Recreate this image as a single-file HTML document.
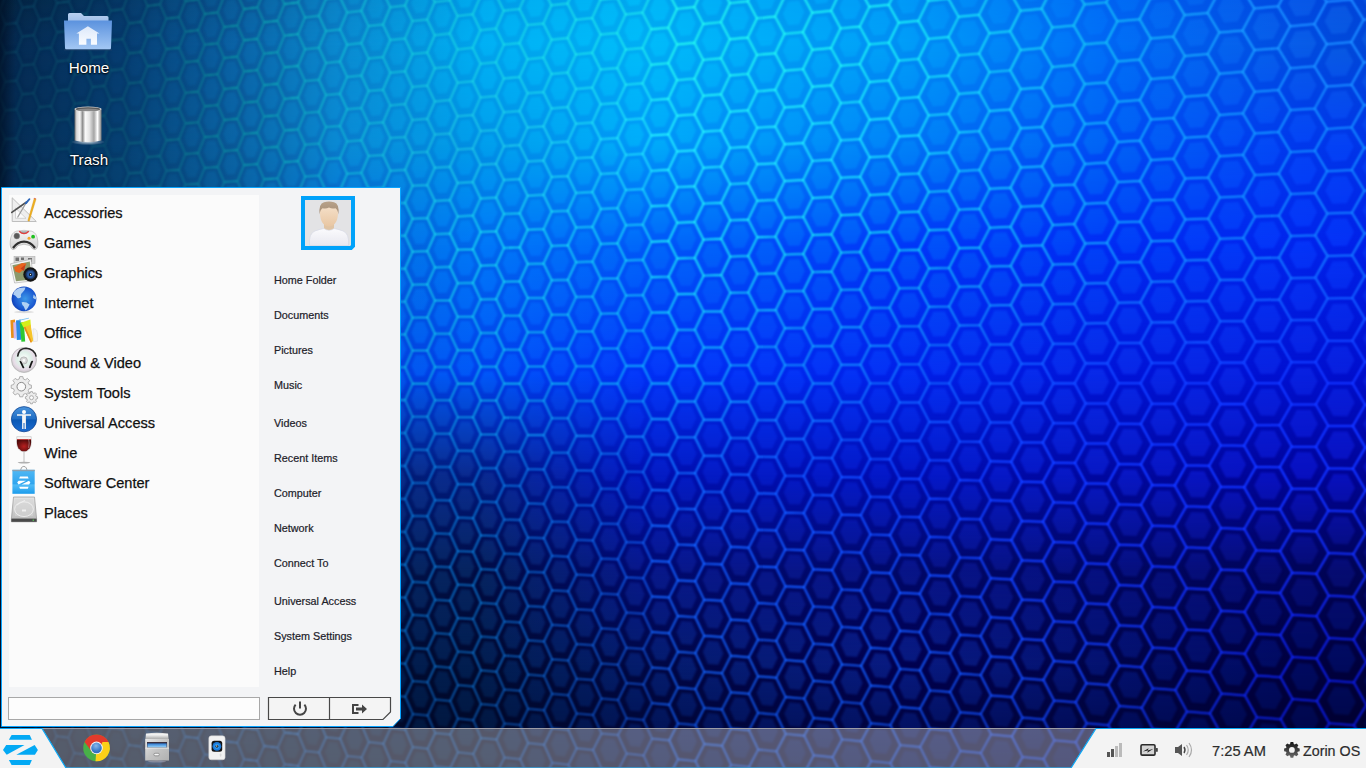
<!DOCTYPE html>
<html><head><meta charset="utf-8"><title>Zorin OS Desktop</title>
<style>
html,body{margin:0;padding:0;width:1366px;height:768px;overflow:hidden;background:#03183a;}
body{position:relative;font-family:"Liberation Sans",sans-serif;}
#bg{position:absolute;left:0;top:0;}
.abs{position:absolute;}
.dlabel{position:absolute;color:#fff;font-size:15.2px;text-shadow:0 1px 2px #000,0 0 2px #000;text-align:center;width:80px;}
#menu{position:absolute;left:1px;top:187px;width:400px;height:540px;}
#menu svg.frame{position:absolute;left:0;top:0;}
#cats{position:absolute;left:9px;top:195px;width:250px;height:492px;background:#fbfbfb;}
.cat{position:absolute;left:44px;font-size:14.6px;color:#101010;white-space:nowrap;-webkit-text-stroke:0.25px #101010;}
.cico{position:absolute;left:12px;width:24px;height:24px;}
.pl{position:absolute;left:274px;font-size:10.8px;color:#202028;-webkit-text-stroke:0.2px #202028;white-space:nowrap;}
#search{position:absolute;left:8px;top:697px;width:250px;height:21px;border:1px solid #a8a8a8;background:#fdfdfd;}
#taskbar{position:absolute;left:0;top:728px;width:1366px;height:40px;}
.tray{position:absolute;font-size:14.4px;color:#2c2c2c;white-space:nowrap;-webkit-text-stroke:0.2px #2c2c2c;}
</style></head>
<body>
<svg id="bg" width="1366" height="768" viewBox="0 0 1366 768"><defs><linearGradient id="r0" x1="0" y1="0" x2="1" y2="0"><stop offset="0.0000" stop-color="#04223f"/><stop offset="0.0878" stop-color="#053462"/><stop offset="0.1757" stop-color="#0a5290"/><stop offset="0.2489" stop-color="#0a78c0"/><stop offset="0.3514" stop-color="#009ce8"/><stop offset="0.4685" stop-color="#00a8f0"/><stop offset="0.6589" stop-color="#008cf0"/><stop offset="0.8053" stop-color="#0064f2"/><stop offset="0.9517" stop-color="#0048e0"/><stop offset="1.0000" stop-color="#0044d8"/></linearGradient><linearGradient id="r45" x1="0" y1="0" x2="1" y2="0"><stop offset="0.0000" stop-color="#04264c"/><stop offset="0.0878" stop-color="#05386a"/><stop offset="0.1757" stop-color="#0a5a9c"/><stop offset="0.2489" stop-color="#0a80c8"/><stop offset="0.3514" stop-color="#00a4ec"/><stop offset="0.4685" stop-color="#00aef4"/><stop offset="0.6589" stop-color="#0090f4"/><stop offset="0.8053" stop-color="#0068f4"/><stop offset="0.9517" stop-color="#004ce0"/><stop offset="1.0000" stop-color="#0048d8"/></linearGradient><linearGradient id="r145" x1="0" y1="0" x2="1" y2="0"><stop offset="0.0000" stop-color="#04284e"/><stop offset="0.0878" stop-color="#063c6c"/><stop offset="0.1757" stop-color="#0a5a9a"/><stop offset="0.2489" stop-color="#0a7ccc"/><stop offset="0.3514" stop-color="#0090e4"/><stop offset="0.4685" stop-color="#0098f8"/><stop offset="0.6589" stop-color="#0074f4"/><stop offset="0.8053" stop-color="#004cf4"/><stop offset="0.9517" stop-color="#0038ec"/><stop offset="1.0000" stop-color="#0034e8"/></linearGradient><linearGradient id="r245" x1="0" y1="0" x2="1" y2="0"><stop offset="0.0000" stop-color="#032446"/><stop offset="0.0878" stop-color="#053a68"/><stop offset="0.1757" stop-color="#085090"/><stop offset="0.2489" stop-color="#0460d0"/><stop offset="0.3514" stop-color="#0068ec"/><stop offset="0.4685" stop-color="#0058f8"/><stop offset="0.6589" stop-color="#0038f8"/><stop offset="0.8053" stop-color="#002cf4"/><stop offset="0.9517" stop-color="#0024ec"/><stop offset="1.0000" stop-color="#0020e8"/></linearGradient><linearGradient id="r375" x1="0" y1="0" x2="1" y2="0"><stop offset="0.0000" stop-color="#032040"/><stop offset="0.0878" stop-color="#042e5c"/><stop offset="0.1757" stop-color="#063c90"/><stop offset="0.2489" stop-color="#0440d8"/><stop offset="0.3514" stop-color="#0040ec"/><stop offset="0.4685" stop-color="#0030f4"/><stop offset="0.6589" stop-color="#0020e8"/><stop offset="0.8053" stop-color="#0014d8"/><stop offset="0.9517" stop-color="#0010d0"/><stop offset="1.0000" stop-color="#000ecc"/></linearGradient><linearGradient id="r475" x1="0" y1="0" x2="1" y2="0"><stop offset="0.0000" stop-color="#021838"/><stop offset="0.0878" stop-color="#03244c"/><stop offset="0.1757" stop-color="#042c60"/><stop offset="0.2489" stop-color="#041e70"/><stop offset="0.3514" stop-color="#001a80"/><stop offset="0.4685" stop-color="#0010b0"/><stop offset="0.6589" stop-color="#000cb0"/><stop offset="0.8053" stop-color="#0008a0"/><stop offset="0.9517" stop-color="#000498"/><stop offset="1.0000" stop-color="#000494"/></linearGradient><linearGradient id="r570" x1="0" y1="0" x2="1" y2="0"><stop offset="0.0000" stop-color="#011230"/><stop offset="0.0878" stop-color="#021c40"/><stop offset="0.1757" stop-color="#02204c"/><stop offset="0.2489" stop-color="#011448"/><stop offset="0.3514" stop-color="#000c44"/><stop offset="0.4685" stop-color="#000a70"/><stop offset="0.6589" stop-color="#000868"/><stop offset="0.8053" stop-color="#000660"/><stop offset="0.9517" stop-color="#000458"/><stop offset="1.0000" stop-color="#000454"/></linearGradient><linearGradient id="r665" x1="0" y1="0" x2="1" y2="0"><stop offset="0.0000" stop-color="#010c28"/><stop offset="0.0878" stop-color="#011430"/><stop offset="0.1757" stop-color="#011636"/><stop offset="0.2489" stop-color="#000c30"/><stop offset="0.3514" stop-color="#000a30"/><stop offset="0.4685" stop-color="#000844"/><stop offset="0.6589" stop-color="#000050"/><stop offset="0.8053" stop-color="#000448"/><stop offset="0.9517" stop-color="#000040"/><stop offset="1.0000" stop-color="#00003c"/></linearGradient><linearGradient id="r768" x1="0" y1="0" x2="1" y2="0"><stop offset="0.0000" stop-color="#000820"/><stop offset="0.0878" stop-color="#000a24"/><stop offset="0.1757" stop-color="#000a26"/><stop offset="0.2489" stop-color="#000826"/><stop offset="0.3514" stop-color="#000826"/><stop offset="0.4685" stop-color="#000630"/><stop offset="0.6589" stop-color="#000638"/><stop offset="0.8053" stop-color="#000434"/><stop offset="0.9517" stop-color="#00002c"/><stop offset="1.0000" stop-color="#000028"/></linearGradient><linearGradient id="i0" x1="0" y1="0" x2="1" y2="0"><stop offset="0.0000" stop-color="#042440"/><stop offset="0.0878" stop-color="#063866"/><stop offset="0.1757" stop-color="#0a5e9c"/><stop offset="0.2489" stop-color="#0a84c8"/><stop offset="0.3514" stop-color="#00acf0"/><stop offset="0.4685" stop-color="#00b8f8"/><stop offset="0.6589" stop-color="#009af8"/><stop offset="0.8053" stop-color="#006ef6"/><stop offset="0.9517" stop-color="#0858e8"/><stop offset="1.0000" stop-color="#0854e0"/></linearGradient><linearGradient id="i45" x1="0" y1="0" x2="1" y2="0"><stop offset="0.0000" stop-color="#05284e"/><stop offset="0.0878" stop-color="#063c70"/><stop offset="0.1757" stop-color="#0a64a8"/><stop offset="0.2489" stop-color="#0a8ad0"/><stop offset="0.3514" stop-color="#00b0f4"/><stop offset="0.4685" stop-color="#00bcfa"/><stop offset="0.6589" stop-color="#009ef8"/><stop offset="0.8053" stop-color="#0070f8"/><stop offset="0.9517" stop-color="#085ce8"/><stop offset="1.0000" stop-color="#0858e0"/></linearGradient><linearGradient id="i145" x1="0" y1="0" x2="1" y2="0"><stop offset="0.0000" stop-color="#052a50"/><stop offset="0.0878" stop-color="#064072"/><stop offset="0.1757" stop-color="#0a66a8"/><stop offset="0.2489" stop-color="#0a8ad4"/><stop offset="0.3514" stop-color="#009eec"/><stop offset="0.4685" stop-color="#00acfa"/><stop offset="0.6589" stop-color="#0082f8"/><stop offset="0.8053" stop-color="#0064f6"/><stop offset="0.9517" stop-color="#0444f6"/><stop offset="1.0000" stop-color="#0440f4"/></linearGradient><linearGradient id="i245" x1="0" y1="0" x2="1" y2="0"><stop offset="0.0000" stop-color="#052850"/><stop offset="0.0878" stop-color="#07426e"/><stop offset="0.1757" stop-color="#0a5c9c"/><stop offset="0.2489" stop-color="#0470dc"/><stop offset="0.3514" stop-color="#0078f8"/><stop offset="0.4685" stop-color="#0068fa"/><stop offset="0.6589" stop-color="#0054fa"/><stop offset="0.8053" stop-color="#0040f8"/><stop offset="0.9517" stop-color="#0434f8"/><stop offset="1.0000" stop-color="#0430f4"/></linearGradient><linearGradient id="i375" x1="0" y1="0" x2="1" y2="0"><stop offset="0.0000" stop-color="#04244a"/><stop offset="0.0878" stop-color="#063666"/><stop offset="0.1757" stop-color="#08469c"/><stop offset="0.2489" stop-color="#0454e8"/><stop offset="0.3514" stop-color="#0058f8"/><stop offset="0.4685" stop-color="#0438fa"/><stop offset="0.6589" stop-color="#0430f4"/><stop offset="0.8053" stop-color="#0828e8"/><stop offset="0.9517" stop-color="#0820e0"/><stop offset="1.0000" stop-color="#081edc"/></linearGradient><linearGradient id="i475" x1="0" y1="0" x2="1" y2="0"><stop offset="0.0000" stop-color="#031e42"/><stop offset="0.0878" stop-color="#052a58"/><stop offset="0.1757" stop-color="#073270"/><stop offset="0.2489" stop-color="#082e84"/><stop offset="0.3514" stop-color="#0a2a90"/><stop offset="0.4685" stop-color="#041cc4"/><stop offset="0.6589" stop-color="#0418c8"/><stop offset="0.8053" stop-color="#0818c4"/><stop offset="0.9517" stop-color="#0810c0"/><stop offset="1.0000" stop-color="#0810bc"/></linearGradient><linearGradient id="i570" x1="0" y1="0" x2="1" y2="0"><stop offset="0.0000" stop-color="#02183a"/><stop offset="0.0878" stop-color="#04224c"/><stop offset="0.1757" stop-color="#05285c"/><stop offset="0.2489" stop-color="#052460"/><stop offset="0.3514" stop-color="#062460"/><stop offset="0.4685" stop-color="#08188a"/><stop offset="0.6589" stop-color="#081488"/><stop offset="0.8053" stop-color="#061080"/><stop offset="0.9517" stop-color="#060c74"/><stop offset="1.0000" stop-color="#060c70"/></linearGradient><linearGradient id="i665" x1="0" y1="0" x2="1" y2="0"><stop offset="0.0000" stop-color="#021230"/><stop offset="0.0878" stop-color="#031a3c"/><stop offset="0.1757" stop-color="#041e48"/><stop offset="0.2489" stop-color="#021c4c"/><stop offset="0.3514" stop-color="#021e50"/><stop offset="0.4685" stop-color="#041c6c"/><stop offset="0.6589" stop-color="#081a80"/><stop offset="0.8053" stop-color="#041270"/><stop offset="0.9517" stop-color="#000a60"/><stop offset="1.0000" stop-color="#000a5c"/></linearGradient><linearGradient id="i768" x1="0" y1="0" x2="1" y2="0"><stop offset="0.0000" stop-color="#010c26"/><stop offset="0.0878" stop-color="#01102c"/><stop offset="0.1757" stop-color="#011230"/><stop offset="0.2489" stop-color="#011434"/><stop offset="0.3514" stop-color="#011438"/><stop offset="0.4685" stop-color="#01104a"/><stop offset="0.6589" stop-color="#000c50"/><stop offset="0.8053" stop-color="#000848"/><stop offset="0.9517" stop-color="#000640"/><stop offset="1.0000" stop-color="#00063c"/></linearGradient><linearGradient id="l0" x1="0" y1="0" x2="1" y2="0"><stop offset="0.0000" stop-color="#083858"/><stop offset="0.0878" stop-color="#0a5270"/><stop offset="0.1757" stop-color="#0a88a0"/><stop offset="0.2489" stop-color="#10b8d0"/><stop offset="0.3514" stop-color="#18d4e4"/><stop offset="0.4685" stop-color="#20ecf0"/><stop offset="0.6589" stop-color="#18e4f8"/><stop offset="0.8053" stop-color="#10acf8"/><stop offset="0.9517" stop-color="#1884ff"/><stop offset="1.0000" stop-color="#1880ff"/></linearGradient><linearGradient id="l45" x1="0" y1="0" x2="1" y2="0"><stop offset="0.0000" stop-color="#083c5c"/><stop offset="0.0878" stop-color="#0a5474"/><stop offset="0.1757" stop-color="#0a8ca4"/><stop offset="0.2489" stop-color="#10bcd4"/><stop offset="0.3514" stop-color="#18d8e8"/><stop offset="0.4685" stop-color="#20f0f0"/><stop offset="0.6589" stop-color="#18e8f8"/><stop offset="0.8053" stop-color="#10b0f8"/><stop offset="0.9517" stop-color="#1888ff"/><stop offset="1.0000" stop-color="#1884ff"/></linearGradient><linearGradient id="l145" x1="0" y1="0" x2="1" y2="0"><stop offset="0.0000" stop-color="#083c5c"/><stop offset="0.0878" stop-color="#0a5474"/><stop offset="0.1757" stop-color="#0a88a4"/><stop offset="0.2489" stop-color="#10b8d4"/><stop offset="0.3514" stop-color="#20c8e8"/><stop offset="0.4685" stop-color="#20e8ff"/><stop offset="0.6589" stop-color="#18d4ff"/><stop offset="0.8053" stop-color="#10a0ff"/><stop offset="0.9517" stop-color="#1080ff"/><stop offset="1.0000" stop-color="#107cff"/></linearGradient><linearGradient id="l245" x1="0" y1="0" x2="1" y2="0"><stop offset="0.0000" stop-color="#083e60"/><stop offset="0.0878" stop-color="#0a5680"/><stop offset="0.1757" stop-color="#0a78a8"/><stop offset="0.2489" stop-color="#10b8e4"/><stop offset="0.3514" stop-color="#18e0f4"/><stop offset="0.4685" stop-color="#18d8fa"/><stop offset="0.6589" stop-color="#10b8f8"/><stop offset="0.8053" stop-color="#1090ff"/><stop offset="0.9517" stop-color="#1070ff"/><stop offset="1.0000" stop-color="#106cff"/></linearGradient><linearGradient id="l375" x1="0" y1="0" x2="1" y2="0"><stop offset="0.0000" stop-color="#0a4070"/><stop offset="0.0878" stop-color="#0a5890"/><stop offset="0.1757" stop-color="#0a70b8"/><stop offset="0.2489" stop-color="#0a98e0"/><stop offset="0.3514" stop-color="#10bcf0"/><stop offset="0.4685" stop-color="#10aaff"/><stop offset="0.6589" stop-color="#1068ff"/><stop offset="0.8053" stop-color="#1040ff"/><stop offset="0.9517" stop-color="#1034ff"/><stop offset="1.0000" stop-color="#1030ff"/></linearGradient><linearGradient id="l475" x1="0" y1="0" x2="1" y2="0"><stop offset="0.0000" stop-color="#083868"/><stop offset="0.0878" stop-color="#0a4c88"/><stop offset="0.1757" stop-color="#0a60b0"/><stop offset="0.2489" stop-color="#0a70d0"/><stop offset="0.3514" stop-color="#0a80e8"/><stop offset="0.4685" stop-color="#1068f8"/><stop offset="0.6589" stop-color="#1040ff"/><stop offset="0.8053" stop-color="#1034ff"/><stop offset="0.9517" stop-color="#1030ff"/><stop offset="1.0000" stop-color="#1030ff"/></linearGradient><linearGradient id="l570" x1="0" y1="0" x2="1" y2="0"><stop offset="0.0000" stop-color="#083060"/><stop offset="0.0878" stop-color="#0a4480"/><stop offset="0.1757" stop-color="#0a60b0"/><stop offset="0.2489" stop-color="#0a70c8"/><stop offset="0.3514" stop-color="#0a78d4"/><stop offset="0.4685" stop-color="#1058f0"/><stop offset="0.6589" stop-color="#1048f4"/><stop offset="0.8053" stop-color="#1030f0"/><stop offset="0.9517" stop-color="#1028e8"/><stop offset="1.0000" stop-color="#1028e4"/></linearGradient><linearGradient id="l665" x1="0" y1="0" x2="1" y2="0"><stop offset="0.0000" stop-color="#062858"/><stop offset="0.0878" stop-color="#083c78"/><stop offset="0.1757" stop-color="#0a5098"/><stop offset="0.2489" stop-color="#0a60b4"/><stop offset="0.3514" stop-color="#0a68c0"/><stop offset="0.4685" stop-color="#1050d0"/><stop offset="0.6589" stop-color="#1050e8"/><stop offset="0.8053" stop-color="#1036e0"/><stop offset="0.9517" stop-color="#0a1ad0"/><stop offset="1.0000" stop-color="#0a18cc"/></linearGradient><linearGradient id="l768" x1="0" y1="0" x2="1" y2="0"><stop offset="0.0000" stop-color="#04204c"/><stop offset="0.0878" stop-color="#063068"/><stop offset="0.1757" stop-color="#083c88"/><stop offset="0.2489" stop-color="#0a4090"/><stop offset="0.3514" stop-color="#0a4498"/><stop offset="0.4685" stop-color="#0a40b8"/><stop offset="0.6589" stop-color="#0a38c0"/><stop offset="0.8053" stop-color="#0a28b8"/><stop offset="0.9517" stop-color="#0814b0"/><stop offset="1.0000" stop-color="#0812ac"/></linearGradient><linearGradient id="vg0" gradientUnits="userSpaceOnUse" x1="0" y1="0" x2="0" y2="45"><stop offset="0" stop-color="#000"/><stop offset="1" stop-color="#fff"/></linearGradient><mask id="mv0" maskUnits="userSpaceOnUse" x="0" y="0" width="1366" height="45"><rect x="0" y="0" width="1366" height="45" fill="url(#vg0)"/></mask><linearGradient id="vg45" gradientUnits="userSpaceOnUse" x1="0" y1="45" x2="0" y2="145"><stop offset="0" stop-color="#000"/><stop offset="1" stop-color="#fff"/></linearGradient><mask id="mv45" maskUnits="userSpaceOnUse" x="0" y="45" width="1366" height="100"><rect x="0" y="45" width="1366" height="100" fill="url(#vg45)"/></mask><linearGradient id="vg145" gradientUnits="userSpaceOnUse" x1="0" y1="145" x2="0" y2="245"><stop offset="0" stop-color="#000"/><stop offset="1" stop-color="#fff"/></linearGradient><mask id="mv145" maskUnits="userSpaceOnUse" x="0" y="145" width="1366" height="100"><rect x="0" y="145" width="1366" height="100" fill="url(#vg145)"/></mask><linearGradient id="vg245" gradientUnits="userSpaceOnUse" x1="0" y1="245" x2="0" y2="375"><stop offset="0" stop-color="#000"/><stop offset="1" stop-color="#fff"/></linearGradient><mask id="mv245" maskUnits="userSpaceOnUse" x="0" y="245" width="1366" height="130"><rect x="0" y="245" width="1366" height="130" fill="url(#vg245)"/></mask><linearGradient id="vg375" gradientUnits="userSpaceOnUse" x1="0" y1="375" x2="0" y2="475"><stop offset="0" stop-color="#000"/><stop offset="1" stop-color="#fff"/></linearGradient><mask id="mv375" maskUnits="userSpaceOnUse" x="0" y="375" width="1366" height="100"><rect x="0" y="375" width="1366" height="100" fill="url(#vg375)"/></mask><linearGradient id="vg475" gradientUnits="userSpaceOnUse" x1="0" y1="475" x2="0" y2="570"><stop offset="0" stop-color="#000"/><stop offset="1" stop-color="#fff"/></linearGradient><mask id="mv475" maskUnits="userSpaceOnUse" x="0" y="475" width="1366" height="95"><rect x="0" y="475" width="1366" height="95" fill="url(#vg475)"/></mask><linearGradient id="vg570" gradientUnits="userSpaceOnUse" x1="0" y1="570" x2="0" y2="665"><stop offset="0" stop-color="#000"/><stop offset="1" stop-color="#fff"/></linearGradient><mask id="mv570" maskUnits="userSpaceOnUse" x="0" y="570" width="1366" height="95"><rect x="0" y="570" width="1366" height="95" fill="url(#vg570)"/></mask><linearGradient id="vg665" gradientUnits="userSpaceOnUse" x1="0" y1="665" x2="0" y2="768"><stop offset="0" stop-color="#000"/><stop offset="1" stop-color="#fff"/></linearGradient><mask id="mv665" maskUnits="userSpaceOnUse" x="0" y="665" width="1366" height="103"><rect x="0" y="665" width="1366" height="103" fill="url(#vg665)"/></mask><path id="hp0" d="M-33.5 -41.4l5.5 13.3l11 -1.6l5.6 -15.1M-33.6 -13.1l5.6 -15l11 -1.6l5.6 13.4l11.1 -1.6l5.7 -15.2M16.7 -34.8l5.7 13.6l11.4 -1.7l5.8 -15.3M51.2 -40l5.8 13.8l11.8 -1.7l5.9 -15.6M-33.6 -13.1l5.5 13.4l11.1 -1.6l5.6 -15l11.1 -1.6l5.6 13.5l11.4 -1.6l5.7 -15.2l11.4 -1.7l5.8 13.7l11.6 -1.6l5.8 -15.4l11.8 -1.7l5.9 13.8l11.9 -1.6l6 -15.6M104.6 -33.1l6.1 14l12.2 -1.7l6.1 -15.8M141.3 -38.4l6.3 14.2l12.5 -1.8l6.3 -16M179 -43.8l6.4 14.3l12.8 -1.8M-33.6 15.2l5.5 -14.9l11.1 -1.6l5.5 13.5l11.2 -1.5l5.6 -15.1l11.4 -1.6l5.7 13.7l11.4 -1.5l5.8 -15.4l11.6 -1.6l5.8 13.8l11.8 -1.5l5.9 -15.6l11.9 -1.6l6 14l12 -1.7l6.1 -15.7l12.2 -1.7l6.1 14.2l12.3 -1.7l6.3 -15.9l12.5 -1.8l6.2 14.4l12.7 -1.7l6.4 -16.2l12.8 -1.8l6.5 14.5l13 -1.7l6.5 -16.4M237.4 -36.7l6.6 14.6l13.4 -1.8l6.7 -16.6M277.6 -42.3l6.8 14.8l13.7 -1.8M-33.6 15.2l5.5 13.5l11.1 -1.5l5.5 -15l11.2 -1.5l5.6 13.6l11.3 -1.4l5.8 -15.2l11.4 -1.5l5.8 13.7l11.6 -1.5l5.8 -15.4l11.8 -1.5l5.9 13.9l11.9 -1.6l6 -15.5l12 -1.7l6 14.1l12.2 -1.5l6.2 -15.8l12.3 -1.7l6.2 14.3l12.5 -1.6l6.3 -16l12.7 -1.7l6.4 14.4l12.8 -1.7l6.5 -16.2l13 -1.7l6.5 14.6l13.2 -1.7l6.6 -16.5l13.4 -1.8l6.7 14.8l13.5 -1.7l6.8 -16.7l13.7 -1.8M-33.6 43.5l5.5 -14.8l11.1 -1.5l5.5 13.6l11.2 -1.4l5.6 -15.1l11.3 -1.4l5.7 13.7l11.5 -1.4l5.8 -15.3l11.6 -1.5l5.8 13.9l11.7 -1.5l6 -15.4l11.9 -1.6l5.9 14.1l12.1 -1.5l6 -15.7l12.2 -1.5l6.2 14.2l12.3 -1.6l6.2 -15.8l12.5 -1.6l6.3 14.3l12.7 -1.5l6.4 -16.1l12.8 -1.7l6.5 14.6l13 -1.6l6.5 -16.3l13.2 -1.7l6.6 14.7l13.4 -1.7l6.7 -16.5l13.5 -1.7l6.8 14.9l13.7 -1.7M-33.6 43.5l5.5 13.5l11 -1.3l5.6 -14.9l11.2 -1.4l5.6 13.7l11.3 -1.4l5.7 -15.1l11.5 -1.4l5.7 13.8l11.7 -1.4l5.8 -15.3l11.7 -1.5l5.9 14l11.9 -1.4l6 -15.5l12.1 -1.5l6 14.1l12.2 -1.4l6.2 -15.7l12.3 -1.6l6.2 14.4l12.5 -1.5l6.3 -16l12.7 -1.5l6.4 14.5l12.8 -1.6l6.5 -16.1l13 -1.6l6.5 14.6l13.2 -1.5l6.6 -16.4l13.4 -1.7l6.7 14.9l13.5 -1.6l6.8 -16.6l13.7 -1.7M-33.6 71.9l5.5 -14.9l11 -1.3l5.6 13.6l11.2 -1.2l5.6 -15l11.3 -1.4l5.7 13.8l11.5 -1.3l5.7 -15.2l11.7 -1.4l5.8 13.9l11.7 -1.3l5.9 -15.4l11.9 -1.4l6 14.1l12.1 -1.4l6 -15.6l12.2 -1.4l6.2 14.3l12.3 -1.4l6.2 -15.8l12.5 -1.5l6.3 14.4l12.7 -1.4l6.4 -16l12.8 -1.6l6.5 14.6l13 -1.4l6.5 -16.3l13.2 -1.5l6.6 14.8l13.4 -1.5l6.7 -16.5l13.5 -1.6l6.8 15l13.7 -1.6M-33.6 71.9l5.4 13.5l11.1 -1.2l5.6 -14.9l11.2 -1.2l5.6 13.7l11.3 -1.2l5.7 -15.1l11.5 -1.3l5.7 13.9l11.6 -1.3l5.9 -15.3l11.7 -1.3l5.9 14.1l11.9 -1.3l6 -15.5l12.1 -1.4l6 14.3l12.2 -1.4l6.2 -15.6l12.3 -1.4l6.2 14.3l12.5 -1.3l6.3 -15.9l12.7 -1.4l6.4 14.5l12.8 -1.4l6.5 -16.1l13 -1.4l6.5 14.7l13.2 -1.4l6.6 -16.3l13.4 -1.5l6.7 14.9l13.5 -1.5l6.8 -16.5l13.7 -1.6M-33.7 100.2l5.5 -14.8l11.1 -1.2l5.5 13.7l11.2 -1.2l5.7 -14.9l11.3 -1.2l5.7 13.8l11.4 -1.2l5.8 -15.1l11.6 -1.3l5.9 14l11.7 -1.2l5.9 -15.3l11.9 -1.3l6 14.1l12 -1.2l6.1 -15.5l12.2 -1.4l6.1 14.4l12.4 -1.3l6.2 -15.8l12.5 -1.3l6.3 14.5l12.7 -1.3l6.4 -16l12.8 -1.4l6.5 14.7l13 -1.3l6.5 -16.2l13.2 -1.4l6.6 14.9l13.4 -1.4l6.7 -16.4l13.5 -1.5l6.8 15.1l13.7 -1.4M-33.7 100.2l5.5 13.6l11.1 -1.1l5.5 -14.8l11.2 -1.2l5.7 13.8l11.3 -1.1l5.7 -15l11.4 -1.2l5.8 14l11.6 -1.2l5.9 -15.2l11.7 -1.2l5.9 14.1l11.9 -1.2l6 -15.4l12 -1.2l6.1 14.3l12.2 -1.2l6.1 -15.6l12.4 -1.3l6.2 14.4l12.5 -1.2l6.3 -15.8l12.7 -1.3l6.4 14.6l12.8 -1.2l6.5 -16.1l13 -1.3l6.5 14.8l13.2 -1.3l6.6 -16.2l13.4 -1.4l6.7 15l13.5 -1.3l6.8 -16.5l13.7 -1.4M-33.7 128.5l5.5 -14.7l11.1 -1.1l5.5 13.8l11.2 -1.1l5.7 -14.9l11.3 -1.1l5.7 13.9l11.4 -1.1l5.8 -15l11.6 -1.2l5.8 14.1l11.8 -1.1l5.9 -15.3l11.9 -1.2l6 14.3l12 -1.2l6.1 -15.4l12.2 -1.2l6.1 14.4l12.4 -1.2l6.2 -15.7l12.5 -1.2l6.3 14.6l12.7 -1.2l6.4 -15.9l12.8 -1.2l6.5 14.7l13 -1.2l6.5 -16.1l13.2 -1.3l6.6 15l13.4 -1.3l6.7 -16.3l13.5 -1.3l6.8 15.1l13.7 -1.3M-33.7 128.5l5.5 13.7l11 -1l5.6 -14.7l11.2 -1.1l5.6 13.9l11.4 -1l5.7 -15l11.4 -1.1l5.8 14.1l11.6 -1.1l5.8 -15.1l11.8 -1.1l5.9 14.2l11.9 -1.1l6 -15.3l12 -1.2l6.1 14.4l12.2 -1.1l6.1 -15.5l12.4 -1.2l6.2 14.5l12.5 -1.1l6.3 -15.7l12.7 -1.2l6.4 14.7l12.8 -1.1l6.5 -16l13 -1.2l6.5 14.9l13.2 -1.2l6.6 -16.1l13.4 -1.3l6.7 15.1l13.5 -1.2l6.8 -16.4l13.7 -1.3M-33.7 156.9l5.5 -14.7l11 -1l5.6 13.8l11.2 -0.9l5.6 -14.8l11.4 -1l5.6 13.9l11.5 -0.9l5.8 -15l11.6 -1.1l5.8 14.2l11.8 -1l5.9 -15.2l11.9 -1.1l6 14.3l12 -1l6.1 -15.4l12.2 -1.1l6.1 14.5l12.4 -1l6.2 -15.7l12.5 -1.1l6.3 14.7l12.7 -1.1l6.4 -15.8l12.8 -1.1l6.5 14.8l13 -1.1l6.5 -16l13.2 -1.2l6.6 15.1l13.4 -1.2l6.7 -16.2l13.5 -1.2l6.8 15.2l13.7 -1.1M-33.7 156.9l5.5 13.7l11 -0.8l5.6 -14.8l11.2 -0.9l5.6 13.9l11.3 -0.9l5.7 -14.9l11.5 -0.9l5.8 14l11.6 -0.9l5.8 -15l11.8 -1l5.9 14.2l11.9 -0.9l6 -15.3l12 -1l6.1 14.4l12.2 -0.9l6.1 -15.5l12.4 -1l6.2 14.6l12.5 -1l6.3 -15.7l12.7 -1.1l6.4 14.8l12.8 -1l6.5 -15.9l13 -1.1l6.5 15l13.2 -1l6.6 -16.1l13.4 -1.2l6.7 15.2l13.5 -1.1l6.8 -16.3l13.7 -1.1M-33.7 185.2l5.5 -14.6l11 -0.8l5.6 13.8l11.2 -0.8l5.6 -14.8l11.3 -0.9l5.7 14.1l11.5 -0.9l5.8 -15l11.6 -0.9l5.8 14.2l11.8 -0.8l5.9 -15.2l11.9 -0.9l6 14.4l12 -0.9l6.1 -15.4l12.2 -0.9l6.1 14.5l12.4 -0.9l6.2 -15.5l12.5 -1l6.3 14.7l12.7 -0.9l6.4 -15.8l12.8 -1l6.5 14.9l13 -0.9l6.5 -16l13.2 -1l6.6 15.1l13.4 -1l6.7 -16.2l13.5 -1.1l6.8 15.3l13.8 -1M-33.7 185.2l5.4 13.8l11.1 -0.7l5.6 -14.7l11.2 -0.8l5.6 14l11.3 -0.8l5.7 -14.8l11.5 -0.9l5.7 14.2l11.7 -0.8l5.8 -15.1l11.8 -0.8l5.9 14.3l11.9 -0.8l6 -15.2l12 -0.9l6.1 14.5l12.2 -0.9l6.1 -15.4l12.4 -0.9l6.2 14.7l12.5 -0.9l6.3 -15.6l12.7 -0.9l6.3 14.8l12.9 -0.8l6.5 -15.9l13 -0.9l6.5 15l13.2 -0.9l6.6 -16l13.4 -1l6.7 15.2l13.5 -0.9l6.8 -16.3l13.8 -1M-33.8 213.6l5.5 -14.6l11.1 -0.7l5.5 13.9l11.2 -0.7l5.7 -14.7l11.3 -0.8l5.7 14.1l11.5 -0.7l5.7 -14.9l11.7 -0.8l5.8 14.2l11.7 -0.7l6 -15.1l11.9 -0.8l5.9 14.4l12.1 -0.7l6.1 -15.3l12.2 -0.9l6.1 14.6l12.4 -0.7l6.2 -15.5l12.5 -0.9l6.3 14.8l12.7 -0.8l6.3 -15.7l12.9 -0.8l6.4 14.9l13.1 -0.8l6.5 -15.9l13.2 -0.9l6.6 15.2l13.4 -0.9l6.7 -16.1l13.5 -0.9l6.8 15.4l13.8 -0.9M-33.8 213.6l5.5 13.8l11.1 -0.6l5.5 -14.6l11.2 -0.7l5.7 14l11.3 -0.6l5.7 -14.8l11.5 -0.7l5.7 14.2l11.6 -0.7l5.9 -15l11.7 -0.7l5.9 14.4l11.9 -0.7l6 -15.2l12.1 -0.7l6 14.5l12.2 -0.7l6.2 -15.4l12.4 -0.7l6.2 14.7l12.5 -0.7l6.3 -15.6l12.7 -0.8l6.3 14.9l12.9 -0.7l6.4 -15.8l13.1 -0.8l6.5 15.1l13.2 -0.7l6.6 -16l13.4 -0.9l6.7 15.3l13.5 -0.7l6.8 -16.2l13.8 -0.9M-33.8 241.9l5.5 -14.5l11.1 -0.6l5.5 14l11.2 -0.6l5.7 -14.7l11.3 -0.6l5.7 14.1l11.4 -0.6l5.8 -14.8l11.6 -0.7l5.9 14.3l11.7 -0.6l5.9 -15l11.9 -0.7l6 14.5l12.1 -0.7l6 -15.2l12.2 -0.7l6.2 14.7l12.3 -0.7l6.3 -15.4l12.5 -0.7l6.3 14.8l12.7 -0.6l6.3 -15.7l12.9 -0.7l6.4 15l13.1 -0.6l6.5 -15.9l13.2 -0.7l6.6 15.2l13.4 -0.7l6.7 -16.1l13.5 -0.7l6.8 15.4l13.8 -0.7M-33.8 241.9l5.5 14l11 -0.6l5.6 -14.5l11.2 -0.6l5.6 14.1l11.4 -0.5l5.7 -14.8l11.4 -0.6l5.8 14.3l11.6 -0.6l5.9 -14.9l11.7 -0.6l5.9 14.4l11.9 -0.5l6 -15.1l12.1 -0.7l6 14.7l12.2 -0.6l6.2 -15.3l12.3 -0.7l6.3 14.8l12.5 -0.6l6.3 -15.5l12.7 -0.6l6.3 15l12.9 -0.6l6.4 -15.8l13.1 -0.6l6.5 15.1l13.2 -0.6l6.6 -15.9l13.4 -0.7l6.7 15.4l13.5 -0.7l6.8 -16.1l13.8 -0.7M-33.8 270.3l5.5 -14.4l11 -0.6l5.6 14.1l11.2 -0.5l5.6 -14.6l11.4 -0.5l5.6 14.2l11.5 -0.5l5.8 -14.8l11.6 -0.6l5.8 14.4l11.8 -0.5l5.9 -15l11.9 -0.5l6 14.5l12.1 -0.5l6 -15.1l12.2 -0.6l6.2 14.7l12.3 -0.5l6.3 -15.4l12.5 -0.6l6.3 15l12.6 -0.6l6.4 -15.5l12.9 -0.6l6.4 15.1l13 -0.6l6.6 -15.8l13.2 -0.6l6.6 15.3l13.4 -0.5l6.7 -16l13.5 -0.7l6.9 15.5l13.7 -0.5M-33.8 270.3l5.5 14l11 -0.4l5.6 -14.5l11.2 -0.5l5.6 14.2l11.3 -0.5l5.7 -14.6l11.5 -0.5l5.8 14.3l11.6 -0.4l5.8 -14.9l11.8 -0.5l5.9 14.5l11.9 -0.4l6 -15.1l12.1 -0.5l6 14.7l12.2 -0.4l6.2 -15.3l12.3 -0.5l6.2 14.9l12.6 -0.5l6.3 -15.4l12.6 -0.6l6.4 15.1l12.9 -0.5l6.4 -15.6l13 -0.6l6.6 15.3l13.2 -0.5l6.6 -15.9l13.4 -0.5l6.7 15.4l13.5 -0.5l6.9 -16.1l13.7 -0.5M-33.9 298.7l5.6 -14.4l11 -0.4l5.6 14.1l11.2 -0.4l5.6 -14.5l11.3 -0.5l5.7 14.3l11.5 -0.4l5.8 -14.7l11.6 -0.4l5.8 14.4l11.8 -0.3l5.9 -15l11.9 -0.4l6 14.6l12 -0.4l6.1 -15.1l12.2 -0.4l6.2 14.8l12.3 -0.4l6.2 -15.3l12.6 -0.5l6.3 15l12.6 -0.4l6.4 -15.5l12.9 -0.5l6.4 15.2l13 -0.4l6.6 -15.7l13.2 -0.5l6.6 15.4l13.4 -0.5l6.7 -15.9l13.5 -0.5l6.9 15.6l13.7 -0.4M-33.9 298.7l5.5 14l11.1 -0.3l5.6 -14.4l11.2 -0.4l5.6 14.2l11.3 -0.3l5.7 -14.6l11.5 -0.4l5.8 14.4l11.6 -0.3l5.8 -14.8l11.8 -0.3l5.9 14.5l11.9 -0.3l6 -15l12 -0.4l6.1 14.8l12.2 -0.3l6.2 -15.2l12.3 -0.4l6.2 14.9l12.6 -0.3l6.3 -15.4l12.6 -0.4l6.4 15.1l12.9 -0.3l6.4 -15.6l13 -0.4l6.6 15.3l13.2 -0.4l6.6 -15.7l13.4 -0.5l6.7 15.5l13.5 -0.3l6.9 -16l13.7 -0.4M-33.9 327l5.5 -14.3l11.1 -0.3l5.5 14.2l11.2 -0.3l5.7 -14.5l11.3 -0.3l5.7 14.4l11.5 -0.3l5.8 -14.7l11.6 -0.3l5.8 14.5l11.8 -0.2l5.9 -14.9l11.9 -0.3l6 14.7l12 -0.3l6.1 -15l12.2 -0.3l6.1 14.8l12.4 -0.2l6.2 -15.3l12.6 -0.3l6.2 15l12.7 -0.2l6.4 -15.5l12.9 -0.3l6.4 15.2l13 -0.2l6.6 -15.7l13.2 -0.4l6.6 15.5l13.4 -0.3l6.7 -15.9l13.5 -0.3l6.9 15.6l13.7 -0.2M-33.9 327l5.5 14.1l11.1 -0.1l5.5 -14.4l11.2 -0.3l5.7 14.3l11.3 -0.2l5.7 -14.5l11.5 -0.3l5.7 14.5l11.6 -0.2l5.9 -14.8l11.8 -0.2l5.9 14.6l11.9 -0.2l6 -14.9l12 -0.3l6.1 14.8l12.2 -0.2l6.1 -15.1l12.4 -0.2l6.2 15l12.5 -0.2l6.3 -15.4l12.7 -0.2l6.4 15.2l12.9 -0.3l6.4 -15.5l13 -0.2l6.6 15.3l13.2 -0.2l6.6 -15.7l13.4 -0.3l6.7 15.6l13.5 -0.2l6.9 -16l13.7 -0.2M-33.9 355.4l5.5 -14.3l11.1 -0.1l5.5 14.2l11.2 -0.1l5.7 -14.5l11.3 -0.2l5.7 14.4l11.5 -0.1l5.7 -14.6l11.6 -0.2l5.9 14.6l11.7 -0.2l6 -14.8l11.9 -0.2l6 14.8l12 -0.2l6.1 -15l12.2 -0.2l6.1 15l12.4 -0.2l6.2 -15.1l12.5 -0.2l6.3 15.1l12.7 -0.2l6.4 -15.3l12.9 -0.3l6.4 15.4l13 -0.2l6.6 -15.6l13.2 -0.2l6.6 15.5l13.4 -0.1l6.7 -15.8l13.5 -0.2l6.9 15.7l13.7 -0.1M-33.9 355.4l5.5 14.2l11 -0.1l5.6 -14.3l11.2 -0.1l5.6 14.3l11.4 -0.1l5.7 -14.5l11.5 -0.1l5.7 14.5l11.6 -0.1l5.9 -14.6l11.7 -0.2l5.9 14.7l12 -0.1l6 -14.8l12 -0.2l6.1 14.9l12.2 -0.1l6.1 -15l12.4 -0.2l6.2 15.1l12.5 -0.1l6.3 -15.2l12.7 -0.2l6.4 15.3l12.9 -0.1l6.4 -15.4l13 -0.2l6.6 15.5l13.2 -0.1l6.6 -15.7l13.4 -0.1l6.7 15.7l13.5 -0.1l6.9 -15.9l13.7 -0.1M-33.9 383.8l5.5 -14.2l11 -0.1l5.6 14.3l11.2 0l5.6 -14.4l11.4 -0.1l5.7 14.5l11.4 0l5.8 -14.6l11.6 -0.1l5.9 14.7l11.7 0l5.9 -14.8l12 -0.1l5.9 14.9l12.1 0l6.1 -15l12.2 -0.1l6.1 15l12.4 0l6.2 -15.1l12.5 -0.1l6.3 15.2l12.7 0l6.4 -15.3l12.9 -0.1l6.4 15.4l13 0l6.6 -15.5l13.2 -0.1l6.6 15.6l13.4 0l6.7 -15.7l13.5 -0.1l6.9 15.8l13.7 0M-33.9 383.8l5.4 14.2l11.1 0.1l5.6 -14.3l11.2 0l5.6 14.4l11.3 0l5.8 -14.4l11.4 0l5.8 14.6l11.6 0l5.9 -14.6l11.7 0l5.9 14.7l11.9 0.1l6 -14.8l12.1 0l6.1 14.9l12.2 0.1l6.1 -15.1l12.4 0l6.2 15.2l12.5 0l6.3 -15.2l12.7 0l6.4 15.4l12.8 0l6.5 -15.4l13 0l6.6 15.5l13.2 0.1l6.6 -15.6l13.4 0l6.7 15.7l13.6 0.1l6.8 -15.8l13.7 0M-34 412.2l5.5 -14.2l11.1 0.1l5.6 14.3l11.2 0.1l5.6 -14.3l11.3 0l5.7 14.6l11.5 0.1l5.8 -14.5l11.6 0l5.8 14.7l11.8 0.1l5.9 -14.7l11.9 0.1l6 14.9l12.1 0.1l6.1 -14.9l12.2 0.1l6.1 15l12.4 0.1l6.2 -15l12.5 0l6.3 15.3l12.7 0.1l6.4 -15.2l12.8 0l6.5 15.5l13 0.1l6.6 -15.5l13.2 0.1l6.6 15.7l13.4 0.1l6.7 -15.7l13.6 0.1l6.8 15.9l13.7 0.1M-34 412.2l5.5 14.3l11.1 0.2l5.6 -14.3l11.2 0.1l5.6 14.5l11.3 0.2l5.7 -14.4l11.5 0.1l5.8 14.6l11.6 0.2l5.8 -14.6l11.8 0.1l5.9 14.8l11.9 0.2l6 -14.7l12.1 0.1l6 15l12.3 0.2l6.1 -15l12.4 0.1l6.2 15.2l12.5 0.2l6.3 -15.1l12.7 0.1l6.4 15.4l12.8 0.2l6.5 -15.3l13 0.1l6.6 15.6l13.2 0.2l6.6 -15.5l13.4 0.1l6.7 15.8l13.6 0.2l6.8 -15.7l13.7 0.1M-34 440.6l5.5 -14.1l11.1 0.2l5.5 14.4l11.2 0.2l5.7 -14.3l11.3 0.2l5.7 14.5l11.5 0.3l5.8 -14.5l11.6 0.2l5.8 14.7l11.8 0.3l5.9 -14.7l11.9 0.2l6 15l12.1 0.2l6 -14.8l12.3 0.2l6.1 15.1l12.4 0.2l6.2 -15l12.5 0.2l6.3 15.4l12.7 0.2l6.4 -15.2l12.8 0.2l6.5 15.5l13 0.3l6.6 -15.4l13.2 0.2l6.6 15.7l13.4 0.3l6.7 -15.6l13.6 0.2l6.8 15.9l13.7 0.3M-34 440.6l5.5 14.3l11.1 0.3l5.5 -14.1l11.2 0.2l5.7 14.5l11.3 0.3l5.7 -14.4l11.5 0.3l5.7 14.7l11.7 0.3l5.8 -14.6l11.8 0.3l5.9 14.9l11.9 0.3l6 -14.7l12.1 0.2l6 15.1l12.2 0.3l6.2 -14.9l12.4 0.2l6.2 15.3l12.5 0.3l6.3 -15l12.7 0.2l6.4 15.5l12.8 0.3l6.5 -15.3l13 0.3l6.6 15.7l13.2 0.3l6.6 -15.5l13.4 0.3l6.7 15.9l13.6 0.3l6.8 -15.7l13.7 0.3M-34 469l5.5 -14.1l11.1 0.3l5.5 14.5l11.2 0.3l5.7 -14.2l11.3 0.3l5.7 14.6l11.5 0.4l5.7 -14.4l11.7 0.3l5.8 14.8l11.8 0.3l5.9 -14.5l11.9 0.3l6 15l12.1 0.3l6 -14.7l12.2 0.3l6.2 15.2l12.3 0.4l6.3 -15l12.5 0.3l6.3 15.4l12.7 0.4l6.4 -15.1l12.8 0.3l6.5 15.6l13 0.4l6.6 -15.3l13.2 0.3l6.6 15.8l13.4 0.4l6.7 -15.5l13.6 0.3l6.8 16l13.7 0.5M-34 469l5.5 14.4l11 0.4l5.6 -14.1l11.2 0.3l5.6 14.6l11.4 0.4l5.7 -14.3l11.5 0.4l5.7 14.7l11.6 0.4l5.9 -14.4l11.8 0.3l5.9 15l11.9 0.4l6 -14.6l12.1 0.3l6 15.2l12.2 0.4l6.2 -14.8l12.3 0.4l6.3 15.3l12.5 0.4l6.3 -15l12.7 0.4l6.4 15.5l12.8 0.5l6.5 -15.2l13 0.4l6.6 15.7l13.2 0.5l6.6 -15.4l13.4 0.4l6.7 16l13.6 0.4l6.8 -15.6l13.7 0.5M-34.1 497.4l5.6 -14l11 0.4l5.6 14.5l11.2 0.5l5.6 -14.2l11.4 0.4l5.7 14.7l11.4 0.5l5.8 -14.4l11.6 0.4l5.9 14.9l11.7 0.5l6 -14.5l11.9 0.4l6 15.1l12 0.5l6.1 -14.7l12.2 0.4l6.2 15.3l12.3 0.5l6.3 -14.9l12.5 0.4l6.3 15.5l12.7 0.5l6.4 -15.1l12.8 0.5l6.5 15.7l13 0.5l6.6 -15.3l13.2 0.5l6.6 15.9l13.4 0.5l6.7 -15.4l13.6 0.4l6.8 16.1l13.7 0.6M-34.1 497.4l5.5 14.5l11.1 0.5l5.6 -14.1l11.2 0.5l5.6 14.6l11.3 0.5l5.8 -14.2l11.4 0.5l5.8 14.8l11.6 0.5l5.9 -14.4l11.7 0.5l6 15l11.9 0.6l6 -14.6l12 0.5l6.1 15.2l12.2 0.5l6.2 -14.7l12.3 0.5l6.3 15.4l12.5 0.6l6.3 -15l12.7 0.5l6.4 15.6l12.8 0.6l6.5 -15.1l13 0.5l6.6 15.8l13.2 0.6l6.6 -15.3l13.4 0.5l6.7 16.1l13.6 0.6l6.8 -15.6l13.7 0.6M-34.1 525.8l5.5 -13.9l11.1 0.5l5.6 14.6l11.2 0.5l5.6 -14.1l11.3 0.5l5.7 14.8l11.5 0.6l5.8 -14.3l11.6 0.5l5.9 15l11.7 0.6l6 -14.5l11.9 0.6l6 15.1l12 0.6l6.1 -14.6l12.2 0.5l6.2 15.4l12.3 0.6l6.3 -14.8l12.5 0.6l6.3 15.5l12.7 0.6l6.4 -15l12.8 0.6l6.5 15.8l13 0.6l6.6 -15.2l13.2 0.6l6.6 16l13.4 0.7l6.7 -15.4l13.6 0.6l6.8 16.1l13.7 0.8M-34.1 525.8l5.5 14.6l11.1 0.6l5.6 -14l11.2 0.5l5.6 14.7l11.3 0.7l5.7 -14.2l11.5 0.6l5.8 14.9l11.6 0.6l5.9 -14.3l11.7 0.6l5.9 15.1l12 0.6l6 -14.5l12 0.6l6.1 15.3l12.2 0.7l6.2 -14.7l12.3 0.6l6.2 15.5l12.6 0.7l6.3 -14.9l12.7 0.6l6.4 15.7l12.8 0.7l6.5 -15l13 0.6l6.6 15.9l13.2 0.7l6.6 -15.2l13.4 0.7l6.7 16.1l13.6 0.7l6.8 -15.5l13.7 0.8M-34.1 554.3l5.5 -13.9l11.1 0.6l5.5 14.6l11.2 0.7l5.7 -14.1l11.3 0.7l5.7 14.8l11.5 0.7l5.8 -14.2l11.6 0.6l5.8 15l11.8 0.8l5.9 -14.4l12 0.6l5.9 15.2l12.1 0.8l6.1 -14.6l12.2 0.7l6.1 15.4l12.4 0.7l6.2 -14.7l12.6 0.7l6.3 15.6l12.7 0.8l6.4 -15l12.8 0.7l6.5 15.8l13 0.8l6.6 -15.1l13.2 0.7l6.6 16.1l13.4 0.8l6.7 -15.3l13.6 0.7l6.8 16.3l13.7 0.8M-34.1 554.3l5.5 14.5l11 0.8l5.6 -14l11.2 0.7l5.7 14.8l11.3 0.7l5.7 -14.1l11.5 0.7l5.8 15l11.6 0.7l5.8 -14.3l11.8 0.8l5.9 15.1l11.9 0.8l6 -14.5l12.1 0.8l6.1 15.3l12.2 0.8l6.1 -14.6l12.4 0.7l6.2 15.6l12.6 0.8l6.3 -14.8l12.7 0.8l6.4 15.7l12.8 0.9l6.5 -15.1l13 0.8l6.6 16l13.2 0.9l6.6 -15.2l13.4 0.8l6.7 16.2l13.6 0.9l6.8 -15.4l13.7 0.8M-34.1 582.7l5.5 -13.9l11 0.8l5.6 14.7l11.2 0.8l5.7 -14l11.3 0.7l5.7 14.9l11.5 0.8l5.8 -14.1l11.6 0.7l5.8 15.1l11.8 0.9l5.9 -14.4l11.9 0.8l6 15.3l12.1 0.8l6.1 -14.5l12.2 0.8l6.1 15.5l12.4 0.9l6.2 -14.7l12.6 0.8l6.3 15.7l12.7 0.9l6.4 -14.9l12.8 0.9l6.5 15.8l13 1l6.6 -15.1l13.2 0.9l6.6 16.1l13.4 0.9l6.7 -15.2l13.6 0.9l6.8 16.3l13.7 1M-34.1 582.7l5.4 14.6l11.1 0.9l5.6 -13.9l11.2 0.8l5.6 14.8l11.4 0.9l5.7 -14.1l11.5 0.8l5.7 15l11.7 0.9l5.8 -14.2l11.8 0.9l5.9 15.2l11.9 0.9l6 -14.4l12.1 0.8l6.1 15.4l12.2 1l6.1 -14.6l12.4 0.9l6.2 15.6l12.6 0.9l6.3 -14.7l12.7 0.9l6.3 15.8l12.9 1l6.5 -15l13 1l6.6 16l13.2 1l6.6 -15.1l13.4 0.9l6.7 16.3l13.6 1l6.8 -15.3l13.7 1M-34.2 611.1l5.5 -13.8l11.1 0.9l5.6 14.7l11.2 1l5.6 -14l11.4 0.9l5.7 14.9l11.5 1l5.7 -14.2l11.7 0.9l5.8 15.2l11.8 0.9l5.9 -14.2l11.9 0.9l6 15.3l12.1 1l6.1 -14.5l12.2 1l6.1 15.5l12.4 1l6.2 -14.6l12.6 0.9l6.3 15.8l12.7 1l6.3 -14.8l12.9 1l6.5 15.9l13 1.1l6.6 -15l13.2 1l6.6 16.2l13.4 1.1l6.7 -15.2l13.6 1l6.8 16.4l13.7 1.1M-34.2 611.1l5.5 14.7l11.1 1l5.6 -13.9l11.2 1l5.6 14.8l11.4 1l5.7 -14l11.5 1l5.7 15l11.6 1.1l5.9 -14.2l11.8 0.9l5.9 15.3l11.9 1.1l6 -14.4l12.1 1l6 15.5l12.3 1l6.1 -14.5l12.4 1l6.2 15.7l12.5 1.1l6.4 -14.7l12.7 1l6.3 15.9l12.9 1.1l6.5 -14.9l13 1.1l6.6 16.1l13.2 1.2l6.6 -15.1l13.4 1.1l6.7 16.3l13.6 1.2l6.8 -15.3l13.7 1.1M-34.2 639.6l5.5 -13.8l11.1 1l5.6 14.8l11.2 1l5.6 -13.9l11.4 1l5.6 15l11.5 1.1l5.8 -14.1l11.6 1.1l5.9 15.2l11.8 1l5.9 -14.2l11.9 1.1l6 15.4l12.1 1.1l6 -14.4l12.3 1l6.1 15.6l12.4 1.2l6.2 -14.6l12.5 1.1l6.4 15.8l12.6 1.2l6.4 -14.8l12.9 1.1l6.5 16.1l13 1.2l6.6 -15l13.2 1.2l6.6 16.2l13.4 1.2l6.7 -15.1l13.6 1.2l6.8 16.4l13.7 1.3M-34.2 639.6l5.5 14.7l11.1 1.1l5.6 -13.8l11.2 1l5.6 15l11.3 1.1l5.7 -14l11.5 1.1l5.8 15.1l11.6 1.2l5.9 -14.1l11.8 1l5.9 15.4l11.9 1.1l6 -14.2l12.1 1.1l6 15.5l12.2 1.2l6.2 -14.5l12.4 1.2l6.2 15.7l12.5 1.2l6.4 -14.6l12.6 1.2l6.4 15.9l12.9 1.3l6.5 -14.8l13 1.2l6.6 16.1l13.2 1.3l6.6 -15l13.4 1.2l6.7 16.4l13.6 1.4l6.8 -15.3l13.7 1.3M-34.2 668l5.5 -13.7l11.1 1.1l5.5 14.9l11.2 1.1l5.7 -13.8l11.3 1.1l5.7 15.1l11.5 1.1l5.8 -14l11.6 1.2l5.9 15.2l11.7 1.3l6 -14.2l11.9 1.1l6 15.5l12 1.2l6.1 -14.3l12.2 1.2l6.2 15.7l12.4 1.2l6.2 -14.5l12.5 1.2l6.3 15.9l12.7 1.3l6.4 -14.7l12.9 1.3l6.5 16.1l13 1.3l6.6 -14.9l13.2 1.3l6.6 16.3l13.4 1.4l6.7 -15.1l13.6 1.4l6.8 16.5l13.7 1.4M-34.2 668l5.5 14.8l11 1.2l5.6 -13.7l11.2 1.1l5.7 15l11.3 1.3l5.7 -13.9l11.5 1.1l5.8 15.2l11.6 1.3l5.9 -14.1l11.7 1.3l6 15.3l11.9 1.3l6 -14.2l12 1.2l6.1 15.6l12.2 1.4l6.2 -14.4l12.4 1.2l6.2 15.8l12.5 1.4l6.3 -14.6l12.7 1.3l6.4 16l12.9 1.4l6.5 -14.7l13 1.3l6.6 16.2l13.2 1.5l6.6 -15l13.4 1.4l6.7 16.5l13.6 1.4l6.8 -15.1l13.7 1.4M-34.3 696.5l5.6 -13.7l11 1.2l5.6 15l11.2 1.2l5.7 -13.8l11.3 1.3l5.7 15.1l11.5 1.3l5.8 -14l11.6 1.3l5.8 15.3l11.8 1.4l6 -14.2l11.9 1.3l6 15.6l12 1.3l6.1 -14.3l12.2 1.4l6.2 15.7l12.4 1.4l6.2 -14.5l12.5 1.4l6.3 15.9l12.7 1.5l6.4 -14.7l12.9 1.4l6.5 16.2l13 1.5l6.6 -14.9l13.2 1.5l6.6 16.4l13.4 1.5l6.7 -15l13.6 1.4l6.8 16.6l13.7 1.6M-34.3 696.5l5.5 14.8l11.1 1.3l5.6 -13.6l11.2 1.2l5.6 15.1l11.4 1.3l5.7 -13.8l11.5 1.3l5.8 15.3l11.6 1.3l5.8 -14l11.8 1.4l5.9 15.4l12 1.4l6 -14.1l12 1.3l6.1 15.7l12.2 1.4l6.2 -14.3l12.4 1.4l6.2 15.9l12.5 1.5l6.3 -14.6l12.7 1.5l6.4 16.1l12.9 1.5l6.5 -14.7l13 1.5l6.6 16.3l13.2 1.5l6.6 -14.8l13.4 1.5l6.7 16.5l13.6 1.6l6.8 -15.1l13.7 1.6M-34.3 724.9l5.5 -13.6l11.1 1.3l5.6 15l11.2 1.4l5.6 -13.7l11.4 1.3l5.7 15.2l11.5 1.5l5.8 -13.9l11.6 1.3l5.8 15.4l11.8 1.5l5.9 -14.1l12 1.4l5.9 15.6l12.1 1.5l6.1 -14.2l12.2 1.4l6.2 15.8l12.3 1.6l6.3 -14.4l12.5 1.5l6.3 16l12.7 1.5l6.4 -14.5l12.9 1.5l6.5 16.2l13 1.6l6.6 -14.7l13.2 1.5l6.6 16.5l13.4 1.6l6.7 -14.9l13.6 1.6l6.8 16.7l13.8 1.7M-34.3 724.9l5.5 14.9l11.1 1.5l5.6 -13.7l11.2 1.4l5.6 15.2l11.4 1.4l5.7 -13.8l11.5 1.5l5.7 15.3l11.7 1.5l5.8 -14l11.8 1.5l5.9 15.5l11.9 1.5l6 -14.1l12.1 1.5l6.1 15.7l12.2 1.6l6.2 -14.3l12.3 1.6l6.3 15.9l12.5 1.6l6.3 -14.4l12.7 1.5l6.4 16.2l12.9 1.6l6.5 -14.6l13 1.6l6.6 16.4l13.2 1.7l6.6 -14.8l13.4 1.6l6.7 16.7l13.6 1.7l6.8 -15l13.8 1.7M-34.3 753.4l5.5 -13.6l11.1 1.5l5.5 15l11.3 1.5l5.6 -13.6l11.4 1.4l5.7 15.3l11.4 1.5l5.8 -13.8l11.7 1.5l5.8 15.4l11.8 1.6l5.9 -14l11.9 1.5l6 15.7l12.1 1.6l6.1 -14.2l12.2 1.6l6.2 15.9l12.3 1.6l6.3 -14.3l12.5 1.6l6.3 16.1l12.7 1.7l6.4 -14.5l12.9 1.6l6.5 16.4l13 1.7l6.6 -14.7l13.2 1.7l6.6 16.5l13.4 1.8l6.7 -14.8l13.6 1.7l6.8 16.8l13.8 1.8M-34.3 753.4l5.5 15l11.1 1.5l5.5 -13.6l11.3 1.5l5.6 15.2l11.3 1.6l5.8 -13.7l11.4 1.5l5.8 15.4l11.6 1.6l5.9 -13.9l11.8 1.6l5.9 15.6l11.9 1.7l6 -14.1l12.1 1.6l6.1 15.8l12.2 1.7l6.2 -14.2l12.3 1.6l6.3 16.1l12.5 1.7l6.3 -14.4l12.7 1.7l6.4 16.2M198.1 799.9l6.5 -14.5l13 1.7l6.6 16.4M237.4 805.4l6.6 -14.8l13.4 1.8l6.7 16.7M277.7 811l6.8 -14.9l13.8 1.8M-34.3 781.8l5.5 -13.4l11.1 1.5l5.5 15.1l11.2 1.7l5.7 -13.7l11.3 1.6l5.7 15.3l11.5 1.7l5.8 -13.8l11.6 1.6l5.9 15.5l11.8 1.7l5.9 -13.9l11.9 1.7l6 15.7M104.2 801.8l6.1 -14.1l12.2 1.7l6.1 15.9M141 807.1l6.3 -14.2l12.5 1.7l6.3 16.1M-34.3 781.8l5.5 15.1l11 1.7l5.6 -13.6l11.2 1.7l5.7 15.2M16 803.6l5.7 -13.7l11.5 1.7l5.8 15.4M50.6 808.8l5.9 -13.9l11.8 1.7l5.9 15.7M-34.4 810.3l5.6 -13.4l11 1.7"/><path id="hp1" d="M298.1 -29.3l6.9 -16.9M298.1 -29.3l6.9 14.9l13.9 -1.8l7 -16.9M340 -35l7.1 15.2l14.2 -1.8l7.2 -17.2M383 -40.7l7.3 15.3l14.6 -1.9l7.4 -17.4M298.1 2.4l6.9 -16.8l13.9 -1.8l7 15.1l14.1 -1.7l7.1 -17l14.2 -1.8l7.2 15.2l14.5 -1.7l7.3 -17.3l14.6 -1.9l7.4 15.5l14.9 -1.8l7.5 -17.5M449.8 -33.1l7.6 15.7l15.3 -1.9l7.7 -17.7M495.9 -39l7.8 15.9l15.8 -2l7.9 -18M543.3 -45.2l8.1 16.2l16.2 -2M298.1 2.4l6.9 15l13.9 -1.6l7 -16.9l14.1 -1.7l7.1 15.2l14.3 -1.7l7.1 -17.1l14.5 -1.7l7.3 15.4l14.7 -1.8l7.3 -17.3l14.9 -1.8l7.5 15.6l15.1 -1.8l7.6 -17.6l15.3 -1.9l7.7 15.9l15.5 -1.9l7.8 -17.8l15.8 -2l7.9 16.1l16 -1.9l8 -18.1l16.2 -2l8.2 16.2l16.4 -1.9l8.3 -18.4M617.1 -37.2l8.5 16.5l16.9 -2l8.5 -18.7M298.1 34.1l6.9 -16.7l13.9 -1.6l7 15.2l14.1 -1.6l7.1 -17l14.3 -1.7l7.1 15.4l14.5 -1.6l7.3 -17.2l14.7 -1.8l7.4 15.6l14.8 -1.7l7.5 -17.4l15.1 -1.8l7.6 15.8l15.3 -1.7l7.7 -17.7l15.5 -1.9l7.8 16l15.8 -1.8l7.9 -17.9l16 -1.9l8 16.2l16.2 -1.8l8.2 -18.3l16.4 -1.9l8.3 16.4l16.7 -1.9l8.4 -18.5l16.9 -2l8.5 16.7M298.1 34.1l6.9 15.1l13.9 -1.5l7 -16.7l14.1 -1.6l7.1 15.3l14.3 -1.6l7.1 -17l14.5 -1.6l7.3 15.5l14.7 -1.6l7.4 -17.3l14.8 -1.7l7.5 15.8l15.1 -1.7l7.6 -17.5l15.3 -1.7l7.7 15.9l15.5 -1.7l7.8 -17.8l15.8 -1.8l7.9 16.2l16 -1.7l8 -18.1l16.2 -1.8l8.2 16.3l16.4 -1.7l8.3 -18.4l16.7 -1.9l8.4 16.6l16.9 -1.8l8.5 -18.6M298.1 65.9l6.9 -16.7l13.9 -1.5l7 15.3l14.1 -1.5l7.1 -16.8l14.3 -1.6l7.2 15.5l14.4 -1.5l7.3 -17.1l14.7 -1.6l7.4 15.6l14.9 -1.5l7.4 -17.3l15.1 -1.7l7.6 15.9l15.3 -1.6l7.7 -17.6l15.5 -1.7l7.9 16.1l15.7 -1.6l7.9 -17.9l16 -1.7l8.1 16.3l16.2 -1.7l8.1 -18.2l16.4 -1.7l8.3 16.5l16.7 -1.7l8.4 -18.5l16.9 -1.8l8.6 16.7M298.1 65.9l6.9 15.2l13.9 -1.4l7 -16.7l14.1 -1.5l7.1 15.4l14.3 -1.4l7.2 -16.9l14.4 -1.5l7.3 15.6l14.7 -1.5l7.4 -17.2l14.9 -1.5l7.5 15.8l15 -1.5l7.6 -17.4l15.3 -1.6l7.8 16l15.5 -1.5l7.8 -17.7l15.7 -1.6l8 16.2l15.9 -1.6l8.1 -17.9l16.2 -1.7l8.1 16.4l16.5 -1.6l8.2 -18.2l16.7 -1.7l8.5 16.6l16.9 -1.6l8.5 -18.6M298.1 97.6l6.9 -16.5l13.9 -1.4l7 15.3l14.1 -1.3l7.1 -16.8l14.3 -1.4l7.2 15.5l14.4 -1.3l7.3 -17l14.7 -1.5l7.4 15.8l14.9 -1.4l7.5 -17.3l15 -1.5l7.7 16l15.3 -1.5l7.7 -17.5l15.5 -1.5l7.8 16.2l15.7 -1.5l8 -17.8l15.9 -1.6l8.1 16.4l16.2 -1.5l8.1 -18.1l16.5 -1.6l8.3 16.6l16.7 -1.5l8.4 -18.4l16.9 -1.6l8.5 16.8M298.1 97.6l6.9 15.3l13.9 -1.2l7 -16.7l14.1 -1.3l7.1 15.5l14.3 -1.3l7.2 -16.9l14.4 -1.3l7.3 15.7l14.7 -1.3l7.4 -17.1l14.9 -1.4l7.5 15.9l15.1 -1.4l7.6 -17.3l15.3 -1.5l7.7 16.1l15.5 -1.3l7.8 -17.6l15.7 -1.5l8 16.3l16 -1.4l8 -17.9l16.2 -1.5l8.2 16.5l16.4 -1.4l8.3 -18.2l16.7 -1.5l8.4 16.8l16.9 -1.5l8.5 -18.5M298.1 129.4l6.9 -16.5l13.9 -1.2l7 15.4l14.1 -1.2l7.1 -16.7l14.3 -1.3l7.2 15.6l14.5 -1.2l7.2 -16.9l14.7 -1.3l7.4 15.8l14.9 -1.2l7.5 -17.2l15.1 -1.4l7.6 16.1l15.3 -1.3l7.7 -17.5l15.5 -1.3l7.8 16.2l15.8 -1.3l7.9 -17.7l16 -1.4l8 16.5l16.2 -1.4l8.2 -18l16.4 -1.4l8.3 16.7l16.7 -1.4l8.4 -18.2l16.9 -1.5l8.6 16.9M298.1 129.4l7 15.3l13.9 -1.1l6.9 -16.5l14.1 -1.2l7.1 15.5l14.3 -1.1l7.2 -16.8l14.5 -1.2l7.3 15.8l14.6 -1.2l7.4 -17l14.9 -1.2l7.5 15.9l15.1 -1.1l7.6 -17.3l15.3 -1.3l7.7 16.2l15.5 -1.2l7.8 -17.6l15.8 -1.3l7.9 16.4l16 -1.2l8 -17.8l16.2 -1.4l8.2 16.7l16.5 -1.3l8.2 -18.1l16.7 -1.4l8.4 16.9l17 -1.3l8.5 -18.4M298.2 161.1l6.9 -16.4l13.9 -1.1l7 15.5l14 -1l7.1 -16.7l14.3 -1.1l7.2 15.7l14.5 -1l7.3 -16.9l14.6 -1.2l7.4 15.9l14.9 -1l7.5 -17.2l15.1 -1.1l7.6 16.1l15.3 -1.1l7.7 -17.4l15.5 -1.2l7.9 16.3l15.7 -1.1l7.9 -17.7l16 -1.2l8.1 16.5l16.2 -1.1l8.1 -17.9l16.5 -1.3l8.3 16.8l16.7 -1.2l8.3 -18.2l17 -1.3l8.5 17M298.2 161.1l6.9 15.5l13.9 -1l7 -16.5l14 -1l7.1 15.6l14.3 -0.9l7.2 -16.8l14.5 -1l7.3 15.8l14.7 -1l7.3 -17l14.9 -1l7.5 16l15.1 -1l7.6 -17.2l15.3 -1.1l7.7 16.2l15.6 -1l7.8 -17.5l15.7 -1.1l8 16.5l15.9 -1.1l8.1 -17.8l16.2 -1.1l8.2 16.7l16.4 -1.1l8.3 -18l16.7 -1.2l8.4 16.9l16.9 -1.1l8.5 -18.3M298.2 192.9l6.9 -16.3l13.9 -1l7 15.6l14 -0.9l7.1 -16.6l14.3 -0.9l7.2 15.7l14.5 -0.9l7.3 -16.8l14.7 -1l7.4 16l14.8 -0.9l7.5 -17.1l15.1 -1l7.6 16.2l15.3 -1l7.7 -17.3l15.6 -1l7.8 16.4l15.7 -1l8 -17.5l15.9 -1.1l8.1 16.6l16.2 -1l8.2 -17.8l16.4 -1.1l8.3 16.9l16.7 -1.1l8.4 -18.1l16.9 -1.1l8.6 17.1M298.2 192.9l6.9 15.5l13.9 -0.8l7 -16.4l14 -0.9l7.1 15.7l14.3 -0.8l7.2 -16.7l14.5 -0.9l7.3 15.9l14.7 -0.8l7.4 -16.9l14.8 -0.9l7.5 16.1l15.1 -0.9l7.6 -17.1l15.3 -1l7.8 16.4l15.5 -0.9l7.8 -17.4l15.7 -1l8 16.6l16 -0.9l8 -17.7l16.2 -1l8.2 16.8l16.4 -0.9l8.3 -17.9l16.7 -1.1l8.4 17.1l17 -1l8.5 -18.2M298.2 224.7l6.9 -16.3l13.9 -0.8l7 15.6l14.1 -0.7l7 -16.5l14.3 -0.8l7.2 15.8l14.5 -0.7l7.3 -16.8l14.7 -0.8l7.4 16l14.9 -0.7l7.4 -17l15.1 -0.9l7.7 16.3l15.3 -0.8l7.7 -17.2l15.5 -0.9l7.8 16.5l15.8 -0.8l7.9 -17.5l16 -0.9l8 16.7l16.3 -0.8l8.1 -17.8l16.4 -0.9l8.4 17l16.7 -0.9l8.3 -18l17 -1l8.5 17.2M298.2 224.7l6.9 15.5l13.9 -0.6l7 -16.4l14.1 -0.7l7.1 15.8l14.2 -0.7l7.2 -16.6l14.5 -0.7l7.3 16l14.7 -0.7l7.4 -16.9l14.9 -0.7l7.5 16.2l15.1 -0.7l7.6 -17.1l15.3 -0.8l7.7 16.4l15.5 -0.7l7.8 -17.3l15.8 -0.8l7.9 16.6l16 -0.7l8 -17.6l16.3 -0.8l8.1 16.9l16.5 -0.8l8.3 -17.8l16.7 -0.9l8.4 17.1l16.9 -0.8l8.5 -18.1M298.2 256.5l6.9 -16.3l13.9 -0.6l7 15.7l14.1 -0.6l7.1 -16.4l14.2 -0.7l7.2 15.9l14.5 -0.6l7.3 -16.6l14.7 -0.7l7.4 16.1l14.9 -0.6l7.5 -16.9l15.1 -0.7l7.6 16.3l15.3 -0.6l7.7 -17.2l15.5 -0.7l7.9 16.6l15.7 -0.7l7.9 -17.4l16 -0.7l8.1 16.8l16.2 -0.7l8.1 -17.6l16.5 -0.8l8.3 17.1l16.7 -0.7l8.4 -18l16.9 -0.8l8.6 17.4M298.2 256.5l6.9 15.6l13.9 -0.5l7 -16.3l14.1 -0.6l7.1 15.9l14.3 -0.5l7.1 -16.6l14.5 -0.6l7.3 16.1l14.7 -0.5l7.4 -16.8l14.9 -0.6l7.5 16.3l15.1 -0.6l7.6 -17l15.3 -0.6l7.7 16.5l15.5 -0.6l7.9 -17.2l15.7 -0.7l8 16.8l15.9 -0.6l8.1 -17.5l16.2 -0.7l8.2 17l16.4 -0.6l8.3 -17.7l16.7 -0.7l8.4 17.2l17 -0.6l8.5 -18M298.2 288.3l6.9 -16.2l13.9 -0.5l7 15.8l14.1 -0.5l7.1 -16.3l14.3 -0.5l7.2 15.9l14.4 -0.4l7.3 -16.6l14.7 -0.5l7.4 16.2l14.9 -0.5l7.5 -16.8l15.1 -0.6l7.6 16.5l15.3 -0.5l7.7 -17.1l15.5 -0.6l7.9 16.7l15.7 -0.5l8 -17.3l15.9 -0.6l8.1 16.9l16.2 -0.5l8.2 -17.6l16.4 -0.6l8.3 17.2l16.7 -0.5l8.4 -17.9l17 -0.6l8.5 17.4M298.2 288.3l6.9 15.7l13.9 -0.4l7 -16.2l14.1 -0.5l7.1 16l14.3 -0.4l7.2 -16.5l14.4 -0.4l7.3 16.1l14.7 -0.3l7.4 -16.7l14.9 -0.5l7.5 16.4l15.1 -0.4l7.6 -16.9l15.3 -0.5l7.7 16.6l15.6 -0.4l7.8 -17.2l15.7 -0.5l8 16.8l16 -0.4l8 -17.4l16.2 -0.5l8.2 17.1l16.5 -0.5l8.2 -17.6l16.7 -0.5l8.5 17.3l16.9 -0.5l8.5 -17.9M298.2 320.1l6.9 -16.1l13.9 -0.4l7 15.9l14.1 -0.3l7.1 -16.3l14.3 -0.4l7.2 16.1l14.5 -0.3l7.2 -16.6l14.7 -0.3l7.4 16.3l14.9 -0.4l7.5 -16.7l15.1 -0.4l7.6 16.5l15.3 -0.3l7.7 -17l15.6 -0.4l7.8 16.7l15.8 -0.3l7.9 -17.3l16 -0.4l8 17l16.3 -0.3l8.1 -17.5l16.5 -0.5l8.3 17.3l16.7 -0.4l8.4 -17.7l16.9 -0.5l8.6 17.5M298.2 320.1l6.9 15.8l13.9 -0.3l7 -16.1l14.1 -0.3l7.1 16l14.3 -0.2l7.2 -16.4l14.5 -0.3l7.3 16.2l14.6 -0.2l7.4 -16.6l14.9 -0.4l7.5 16.5l15.1 -0.2l7.6 -16.9l15.3 -0.3l7.8 16.7l15.5 -0.3l7.8 -17.1l15.8 -0.3l7.9 16.9l16 -0.2l8 -17.4l16.3 -0.3l8.2 17.1l16.4 -0.2l8.3 -17.6l16.7 -0.4l8.4 17.5l17 -0.3l8.5 -17.9M298.2 351.9l6.9 -16l13.9 -0.3l7 16l14.1 -0.2l7.1 -16.2l14.3 -0.2l7.2 16.1l14.5 -0.1l7.3 -16.5l14.6 -0.2l7.4 16.3l14.9 -0.1l7.5 -16.7l15.1 -0.2l7.7 16.6l15.3 -0.2l7.7 -16.9l15.5 -0.3l7.8 16.9l15.8 -0.2l7.9 -17.2l16 -0.2l8.1 17l16.2 -0.1l8.2 -17.5l16.4 -0.2l8.3 17.3l16.7 -0.2l8.4 -17.6l17 -0.3l8.5 17.6M298.2 351.9l6.9 15.8l13.9 0l7 -16.1l14.1 -0.2l7.1 16.1l14.3 -0.1l7.2 -16.3l14.5 -0.1l7.3 16.3l14.7 -0.1l7.3 -16.6l14.9 -0.1l7.6 16.5l15.1 -0.1l7.6 -16.7l15.3 -0.2l7.7 16.8l15.5 -0.1l7.8 -17l15.8 -0.2l8 17l15.9 -0.1l8.1 -17.3l16.2 -0.1l8.2 17.2l16.5 -0.1l8.2 -17.5l16.7 -0.2l8.5 17.5l16.9 0l8.5 -17.8M298.2 383.7l6.9 -16l13.9 0l7 16l14.1 0l7.1 -16.2l14.3 -0.1l7.2 16.2l14.5 0l7.3 -16.3l14.7 -0.1l7.4 16.4l14.9 0l7.5 -16.6l15.1 -0.1l7.6 16.7l15.3 0l7.7 -16.8l15.5 -0.1l7.9 16.9l15.7 0l8 -17.1l15.9 -0.1l8.1 17.2l16.2 0l8.2 -17.4l16.5 -0.1l8.3 17.5l16.7 -0.1l8.4 -17.6l16.9 0l8.6 17.6M298.2 383.7l6.9 15.9l13.9 0.1l7 -16l14.1 0l7.1 16.1l14.3 0.1l7.2 -16.3l14.5 0l7.3 16.4l14.7 0.1l7.4 -16.5l14.9 0l7.5 16.6l15.1 0.1l7.6 -16.7l15.3 0l7.7 16.9l15.6 0l7.8 -16.9l15.7 0l8 17.1l16 0.1l8 -17.2l16.2 0l8.2 17.3l16.5 0.1l8.3 -17.4l16.7 -0.1l8.4 17.6l17 0.1l8.5 -17.7M298.2 415.5l6.9 -15.9l13.9 0.1l7 16.1l14.1 0.1l7.1 -16.1l14.3 0.1l7.2 16.3l14.5 0.1l7.3 -16.3l14.7 0.1l7.4 16.5l14.9 0.2l7.5 -16.6l15.1 0.1l7.6 16.8l15.3 0.1l7.7 -16.7l15.6 0l7.8 17l15.8 0.2l7.9 -17l16 0.1l8.1 17.2l16.2 0.2l8.1 -17.3l16.5 0.1l8.3 17.5l16.7 0.2l8.4 -17.6l17 0.1l8.5 17.8M298.2 415.5l6.9 16l13.9 0.2l7 -15.9l14.1 0.1l7.1 16.3l14.3 0.2l7.2 -16.2l14.5 0.1l7.3 16.5l14.7 0.2l7.4 -16.4l14.9 0.2l7.5 16.7l15.1 0.2l7.6 -16.6l15.3 0.1l7.8 17l15.5 0.2l7.8 -16.9l15.8 0.2l7.9 17.2l16 0.2l8.1 -17.1l16.2 0.2l8.2 17.4l16.4 0.3l8.3 -17.4l16.7 0.2l8.5 17.7l16.9 0.2l8.5 -17.6M298.2 447.3l6.9 -15.8l13.9 0.2l7 16.2l14.1 0.3l7.1 -16l14.3 0.2l7.2 16.4l14.5 0.2l7.3 -16.2l14.7 0.2l7.4 16.6l14.9 0.3l7.5 -16.4l15.1 0.2l7.6 16.9l15.3 0.3l7.8 -16.7l15.5 0.2l7.8 17.1l15.8 0.3l7.9 -16.9l16 0.2l8.1 17.4l16.2 0.3l8.2 -17.2l16.4 0.3l8.4 17.6l16.7 0.3l8.4 -17.4l16.9 0.2l8.6 17.9M298.2 447.3l6.9 16.1l13.9 0.4l7 -15.9l14.1 0.3l7.1 16.3l14.3 0.4l7.2 -16.1l14.5 0.2l7.3 16.6l14.7 0.4l7.4 -16.4l14.9 0.3l7.5 16.8l15.1 0.4l7.6 -16.5l15.3 0.3l7.8 17l15.5 0.4l7.8 -16.8l15.8 0.3l8 17.3l16 0.4l8 -17l16.2 0.3l8.2 17.5l16.5 0.4l8.3 -17.2l16.7 0.3l8.4 17.8l17 0.4l8.5 -17.5M298.2 479.2l6.9 -15.8l13.9 0.4l7 16.2l14.1 0.4l7.1 -15.9l14.3 0.4l7.2 16.4l14.5 0.5l7.3 -16.2l14.7 0.4l7.4 16.7l14.9 0.4l7.5 -16.4l15.1 0.4l7.6 16.9l15.4 0.5l7.7 -16.6l15.5 0.4l7.9 17.2l15.7 0.4l8 -16.8l16 0.4l8 17.4l16.3 0.5l8.1 -17.1l16.5 0.4l8.3 17.7l16.7 0.5l8.4 -17.3l17 0.4l8.5 18M298.2 479.2l6.9 16.1l13.9 0.5l7 -15.8l14.1 0.4l7.1 16.4l14.3 0.5l7.2 -16l14.5 0.5l7.3 16.6l14.7 0.5l7.4 -16.2l14.9 0.4l7.5 16.9l15.2 0.5l7.5 -16.5l15.4 0.5l7.7 17.1l15.6 0.6l7.8 -16.7l15.7 0.4l8 17.4l16 0.6l8 -17l16.3 0.5l8.2 17.6l16.4 0.6l8.3 -17.2l16.7 0.5l8.5 17.9l16.9 0.6l8.5 -17.4M298.2 511l6.9 -15.7l13.9 0.5l7 16.3l14.2 0.6l7 -15.9l14.3 0.5l7.2 16.6l14.5 0.6l7.3 -16.1l14.7 0.5l7.4 16.8l14.9 0.6l7.5 -16.3l15.2 0.5l7.6 17l15.3 0.7l7.7 -16.6l15.6 0.6l7.8 17.2l15.8 0.7l7.9 -16.8l16 0.6l8.1 17.5l16.2 0.6l8.2 -17l16.4 0.6l8.3 17.8l16.8 0.7l8.4 -17.3l16.9 0.6l8.6 18.1M298.2 511l6.9 16.2l13.9 0.7l7 -15.8l14.2 0.6l7.1 16.5l14.3 0.6l7.1 -15.9l14.5 0.6l7.4 16.7l14.7 0.7l7.3 -16.2l14.9 0.6l7.6 16.9l15.1 0.7l7.6 -16.4l15.3 0.7l7.7 17.1l15.6 0.8l7.8 -16.7l15.8 0.7l7.9 17.4l16 0.7l8.1 -16.8l16.2 0.6l8.2 17.7l16.5 0.8l8.2 -17.1l16.8 0.7l8.4 17.9l17 0.8l8.5 -17.3M298.2 542.9l6.9 -15.7l13.9 0.7l7.1 16.4l14.1 0.7l7.1 -15.8l14.3 0.6l7.2 16.7l14.5 0.7l7.3 -16l14.7 0.7l7.4 16.8l14.9 0.8l7.5 -16.3l15.1 0.7l7.6 17.1l15.3 0.8l7.7 -16.5l15.6 0.8l7.8 17.3l15.8 0.8l7.9 -16.7l16 0.7l8.1 17.6l16.2 0.9l8.2 -17l16.5 0.8l8.3 17.9l16.7 0.8l8.4 -17.2l17 0.8l8.5 18.2M298.2 542.9l6.9 16.3l14 0.8l7 -15.7l14.1 0.7l7.1 16.5l14.3 0.8l7.2 -15.8l14.5 0.7l7.3 16.8l14.7 0.8l7.4 -16.1l14.9 0.8l7.5 17l15.1 0.8l7.6 -16.3l15.3 0.8l7.8 17.3l15.5 0.9l7.8 -16.6l15.8 0.8l8 17.5l16 0.9l8 -16.8l16.2 0.9l8.2 17.8l16.5 0.9l8.3 -17l16.7 0.8l8.4 18.1l17 0.9l8.5 -17.2M298.2 574.7l6.9 -15.5l14 0.8l7 16.4l14.1 0.9l7.1 -15.8l14.3 0.8l7.2 16.7l14.5 0.9l7.3 -15.9l14.7 0.8l7.4 17l14.9 0.9l7.5 -16.2l15.1 0.8l7.6 17.2l15.4 1l7.7 -16.4l15.5 0.9l7.9 17.4l15.7 1l8 -16.7l16 0.9l8 17.7l16.3 1l8.1 -16.8l16.5 0.9l8.3 18l16.7 1l8.4 -17.1l17 0.9l8.6 18.3M298.2 574.7l6.9 16.4l14 0.9l7 -15.6l14.1 0.9l7.1 16.6l14.3 1l7.2 -15.9l14.5 0.9l7.3 16.9l14.7 1l7.4 -16l14.9 0.9l7.5 17.1l15.1 1l7.6 -16.3l15.4 1l7.7 17.3l15.5 1.1l7.9 -16.5l15.7 1l8 17.6l16 1l8 -16.7l16.3 1l8.2 17.9l16.5 1.1l8.2 -16.9l16.7 1l8.5 18.1l17 1.2l8.5 -17.2M298.2 606.6l6.9 -15.5l14 0.9l7 16.6l14.1 1l7.1 -15.7l14.3 1l7.2 16.7l14.5 1.1l7.3 -15.9l14.7 1l7.4 17l14.9 1.1l7.5 -16.1l15.1 1l7.6 17.2l15.4 1.1l7.7 -16.3l15.5 1.1l7.9 17.5l15.8 1.1l7.9 -16.5l16 1l8.1 17.8l16.2 1.2l8.2 -16.8l16.5 1.1l8.3 18l16.7 1.3l8.4 -17.1l17 1.2l8.5 18.3M298.2 606.6l6.9 16.4l14 1.1l7 -15.5l14.1 1l7.1 16.7l14.3 1.1l7.2 -15.8l14.5 1.1l7.3 16.9l14.7 1.2l7.4 -16l14.9 1.1l7.5 17.1l15.1 1.2l7.6 -16.2l15.4 1.1l7.7 17.5l15.6 1.2l7.8 -16.4l15.8 1.1l7.9 17.7l16 1.2l8.1 -16.6l16.2 1.2l8.2 17.9l16.5 1.3l8.3 -16.9l16.7 1.3l8.4 18.2l17 1.3l8.5 -17.1M298.2 638.4l6.9 -15.4l14 1.1l7 16.6l14.1 1.2l7.1 -15.6l14.3 1.1l7.2 16.8l14.5 1.2l7.3 -15.8l14.7 1.2l7.4 17.1l14.9 1.2l7.5 -16.1l15.1 1.2l7.7 17.4l15.3 1.2l7.7 -16.2l15.6 1.2l7.8 17.6l15.8 1.3l7.9 -16.5l16 1.2l8.1 17.9l16.3 1.3l8.1 -16.7l16.5 1.3l8.3 18.2l16.7 1.3l8.4 -16.9l17 1.3l8.6 18.4M298.2 638.4l7 16.6l13.9 1.2l7 -15.5l14.1 1.2l7.1 16.8l14.3 1.2l7.2 -15.7l14.5 1.2l7.3 17l14.7 1.3l7.4 -15.8l14.9 1.2l7.5 17.2l15.2 1.4l7.6 -16.1l15.3 1.2l7.7 17.5l15.6 1.4l7.8 -16.3l15.8 1.3l8 17.8l16 1.4l8 -16.6l16.3 1.3l8.2 18.1l16.4 1.4l8.3 -16.7l16.7 1.3l8.5 18.4l17 1.4l8.5 -17M298.2 670.3l7 -15.3l13.9 1.2l7 16.7l14.1 1.3l7.1 -15.5l14.3 1.2l7.2 16.9l14.5 1.4l7.3 -15.8l14.7 1.3l7.4 17.2l14.9 1.4l7.5 -16l15.2 1.4l7.6 17.4l15.3 1.4l7.7 -16.2l15.6 1.4l7.8 17.7l15.8 1.4l8 -16.3l16 1.4l8 17.9l16.3 1.5l8.2 -16.6l16.4 1.4l8.4 18.3l16.7 1.5l8.4 -16.8l17 1.4l8.5 18.6M298.2 670.3l7 16.6l13.9 1.4l7 -15.4l14.1 1.3l7.1 16.9l14.3 1.4l7.2 -15.7l14.5 1.4l7.3 17.1l14.7 1.4l7.4 -15.8l14.9 1.4l7.6 17.3l15.1 1.5l7.6 -16l15.3 1.4l7.8 17.6l15.5 1.5l7.8 -16.2l15.8 1.4l8 17.9l16 1.6l8 -16.5l16.3 1.5l8.2 18.2l16.5 1.6l8.3 -16.7l16.7 1.5l8.4 18.4l17 1.7l8.5 -16.9M298.2 702.2l7 -15.3l13.9 1.4l7 16.8l14.1 1.4l7.1 -15.4l14.3 1.4l7.2 17l14.5 1.5l7.3 -15.7l14.7 1.4l7.5 17.3l14.9 1.5l7.5 -15.9l15.1 1.5l7.6 17.5l15.4 1.6l7.7 -16.1l15.5 1.5l7.9 17.8l15.8 1.6l7.9 -16.3l16 1.6l8.1 18l16.2 1.7l8.2 -16.5l16.5 1.6l8.3 18.3l16.7 1.7l8.4 -16.8l17 1.7l8.6 18.6M298.2 702.2l7 16.7l13.9 1.5l7 -15.3l14.1 1.4l7.1 16.9l14.3 1.6l7.2 -15.5l14.5 1.5l7.3 17.1l14.8 1.6l7.4 -15.7l14.9 1.5l7.5 17.4l15.1 1.7l7.6 -16l15.4 1.6l7.7 17.7l15.6 1.7l7.8 -16.2l15.8 1.6l7.9 18l16 1.7l8.1 -16.4l16.2 1.7l8.2 18.2l16.5 1.8l8.3 -16.6l16.7 1.7l8.5 18.5l17 1.9l8.5 -16.9M298.2 734.1l7 -15.2l13.9 1.5l7 16.8l14.1 1.6l7.1 -15.4l14.3 1.6l7.2 17.1l14.6 1.6l7.2 -15.6l14.8 1.6l7.4 17.4l14.9 1.6l7.5 -15.8l15.1 1.7l7.6 17.6l15.4 1.7l7.7 -16l15.6 1.7l7.8 17.8l15.8 1.8l7.9 -16.2l16 1.7l8.1 18.1l16.3 1.9l8.1 -16.5l16.5 1.8l8.3 18.4l16.8 1.9l8.4 -16.7l17 1.9l8.5 18.7M298.2 734.1l7 16.8l13.9 1.6l7 -15.3l14.1 1.6l7.1 17.1l14.3 1.6l7.2 -15.4l14.6 1.6l7.3 17.3l14.7 1.7l7.4 -15.6l14.9 1.6l7.5 17.6l15.1 1.7l7.6 -15.8l15.4 1.7l7.7 17.8l15.6 1.8l7.8 -16.1l15.8 1.8l8 18.1l16 1.9l8 -16.4l16.3 1.9l8.2 18.3l16.5 2l8.2 -16.6l16.8 1.9l8.4 18.6l17 2l8.5 -16.7M298.3 766l6.9 -15.1l13.9 1.6l7 16.9l14.1 1.8l7.1 -15.3l14.3 1.6l7.3 17.2l14.5 1.8l7.3 -15.5l14.7 1.7l7.4 17.4l14.9 1.9l7.5 -15.7l15.1 1.7l7.7 17.7l15.3 1.9l7.7 -15.9l15.6 1.8l7.8 18l15.8 1.9l8 -16.1l16 1.9l8.1 18.2l16.2 2l8.2 -16.4l16.5 2l8.3 18.5M618.2 805.5l8.4 -16.6l17 2l8.6 18.8M298.3 766l6.9 16.8l13.9 1.8l7 -15.2l14.1 1.8l7.1 17.1l14.4 1.8l7.2 -15.4l14.5 1.8l7.3 17.3l14.7 1.9l7.4 -15.6l14.9 1.9l7.5 17.6M450.4 801.5l7.6 -15.8l15.3 1.9l7.7 17.9M496.6 807.5l7.8 -16l15.8 1.9l8 18.1M544.2 813.6l8.1 -16.2l16.2 2M298.3 797.9l6.9 -15.1l13.9 1.8l7 17M340.2 803.5l7.1 -15.2l14.4 1.8l7.2 17.3M383.4 809.3l7.3 -15.5l14.7 1.9l7.4 17.5M298.3 797.9l6.9 16.9"/><path id="hp2" d="M668.2 -43.5l8.7 16.7l17.4 -2l8.8 -19M651 -6l17.2 -2l8.7 -18.8l17.4 -2l8.8 16.9l17.7 -2.1l8.9 -19.1M747.7 -35.2l9.1 17.2l18.3 -2.1l9.1 -19.4M802.8 -41.7l9.4 17.4l18.8 -2.2l9.5 -19.7M651 -6l17.2 -2l8.7 16.9l17.5 -1.9l8.7 -18.9l17.7 -2.1l9 17.1l18 -1.9l9 -19.2l18.3 -2.1l9.2 17.3l18.5 -2l9.4 -19.5l18.8 -2.2l9.5 17.6l19.2 -2.1l9.6 -19.8M888.7 -33.1l9.9 17.9l19.7 -2.2l9.9 -20.1M948.3 -39.8l10.2 18.1l20.4 -2.2l10.2 -20.6M651.1 29.3l17.2 -1.7l8.6 -18.7l17.5 -1.9l8.8 17l17.7 -1.9l8.9 -19l18 -1.9l9.1 17.2l18.2 -1.9l9.2 -19.3l18.5 -2l9.4 17.5l18.9 -2l9.4 -19.6l19.2 -2.1l9.7 17.8l19.4 -2l9.8 -20l19.7 -2.2l10 18.1l20.1 -2.1l10.1 -20.3l20.4 -2.2l10.3 18.3l20.8 -2.2M651.1 29.3l17.2 -1.7l8.7 16.9l17.4 -1.7l8.8 -18.8l17.7 -1.9l8.9 17.2l18 -1.8l9.1 -19.1l18.2 -1.9l9.3 17.4l18.5 -1.8l9.3 -19.4l18.9 -2l9.5 17.7l19.1 -1.9l9.7 -19.7l19.4 -2l9.8 17.9l19.8 -1.9l9.9 -20.1l20.1 -2.1l10.2 18.2l20.4 -2l10.2 -20.4l20.8 -2.2M651.1 64.7l17.2 -1.6l8.7 -18.6l17.4 -1.7l8.8 17.1l17.8 -1.7l8.8 -18.9l18 -1.8l9.1 17.4l18.3 -1.7l9.2 -19.3l18.5 -1.8l9.4 17.6l18.8 -1.7l9.5 -19.6l19.1 -1.9l9.7 17.9l19.5 -1.8l9.7 -19.9l19.8 -1.9l10 18.1l20.1 -1.9l10.1 -20.2l20.4 -2l10.3 18.4l20.8 -1.9M651.1 64.7l17.2 -1.6l8.7 17l17.5 -1.5l8.7 -18.7l17.8 -1.7l8.9 17.3l18 -1.6l9 -19l18.3 -1.7l9.2 17.5l18.6 -1.6l9.3 -19.4l18.8 -1.7l9.6 17.7l19.1 -1.6l9.6 -19.7l19.5 -1.8l9.8 18l19.8 -1.7l9.9 -20l20.1 -1.9l10.2 18.4l20.4 -1.8l10.2 -20.4l20.8 -1.9M651.2 100.1l17.2 -1.4l8.6 -18.6l17.5 -1.5l8.8 17.2l17.7 -1.5l8.9 -18.8l18 -1.6l9.1 17.5l18.3 -1.6l9.1 -19.1l18.6 -1.6l9.4 17.7l18.8 -1.6l9.5 -19.5l19.1 -1.6l9.7 17.9l19.5 -1.6l9.7 -19.8l19.8 -1.7l10 18.2l20.1 -1.6l10.1 -20.1l20.4 -1.8l10.3 18.5l20.8 -1.7M651.2 100.1l17.2 -1.4l8.7 17.1l17.4 -1.4l8.8 -18.6l17.7 -1.5l9 17.4l18 -1.4l9 -18.9l18.3 -1.6l9.2 17.7l18.6 -1.5l9.3 -19.2l18.8 -1.6l9.6 17.9l19.1 -1.5l9.6 -19.6l19.5 -1.6l9.8 18.2l19.8 -1.6l9.9 -19.9l20.1 -1.6l10.2 18.4l20.4 -1.6l10.2 -20.2l20.8 -1.7M651.2 135.5l17.2 -1.2l8.7 -18.5l17.4 -1.4l8.8 17.3l17.8 -1.3l8.9 -18.7l18 -1.4l9.1 17.5l18.2 -1.3l9.2 -19l18.6 -1.5l9.3 17.8l18.9 -1.4l9.5 -19.3l19.1 -1.5l9.7 18.1l19.5 -1.4l9.7 -19.7l19.8 -1.6l10 18.4l20.1 -1.5l10.1 -20l20.4 -1.6l10.3 18.7l20.8 -1.5M651.2 135.5l17.2 -1.2l8.7 17.2l17.5 -1.2l8.7 -18.6l17.8 -1.3l8.9 17.5l18 -1.2l9.1 -18.9l18.2 -1.3l9.3 17.7l18.5 -1.2l9.3 -19.2l18.9 -1.4l9.5 18l19.2 -1.3l9.6 -19.4l19.5 -1.4l9.8 18.2l19.8 -1.3l9.9 -19.8l20.1 -1.5l10.2 18.6l20.4 -1.4l10.2 -20.1l20.8 -1.5M651.3 170.9l17.2 -1.1l8.6 -18.3l17.5 -1.2l8.8 17.4l17.7 -1.1l8.9 -18.7l18 -1.2l9.1 17.6l18.3 -1.1l9.2 -19l18.5 -1.2l9.4 17.9l18.9 -1.2l9.4 -19.3l19.2 -1.3l9.7 18.2l19.4 -1.2l9.8 -19.6l19.8 -1.3l10 18.5l20.1 -1.3l10.1 -19.9l20.4 -1.4l10.3 18.8l20.8 -1.3M651.3 170.9l17.2 -1.1l8.7 17.3l17.4 -0.9l8.8 -18.5l17.7 -1.1l9 17.5l18 -1l9 -18.8l18.3 -1.1l9.2 17.8l18.6 -1l9.3 -19.1l18.9 -1.2l9.5 18.1l19.2 -1.1l9.6 -19.4l19.4 -1.2l9.9 18.4l19.8 -1.1l9.9 -19.7l20.1 -1.3l10.1 18.7l20.5 -1.2l10.2 -20l20.8 -1.3M651.3 206.3l17.2 -0.9l8.7 -18.3l17.4 -0.9l8.9 17.4l17.7 -0.9l8.9 -18.6l18 -1l9.1 17.7l18.3 -0.9l9.1 -18.9l18.6 -1l9.4 18l18.9 -1l9.4 -19.2l19.2 -1.1l9.7 18.3l19.4 -1l9.8 -19.5l19.8 -1.1l10 18.5l20.1 -1l10 -19.8l20.5 -1.2l10.3 18.9M651.3 206.3l17.2 -0.9l8.7 17.4l17.5 -0.8l8.8 -18.4l17.7 -0.9l9 17.7l18 -0.9l9 -18.7l18.3 -0.9l9.2 17.9l18.6 -0.9l9.3 -18.9l18.9 -1l9.5 18.2l19.1 -0.9l9.7 -19.3l19.4 -1l9.9 18.5l19.7 -1l10 -19.6l20.1 -1l10.1 18.7l20.5 -0.9l10.2 -19.9M651.4 241.8l17.2 -0.8l8.6 -18.2l17.5 -0.8l8.8 17.6l17.7 -0.8l9 -18.4l18 -0.9l9.1 17.8l18.2 -0.7l9.2 -18.8l18.6 -0.9l9.4 18.1l18.8 -0.7l9.5 -19.1l19.1 -0.9l9.7 18.4l19.5 -0.9l9.8 -19.3l19.7 -1l10.1 18.7l20.1 -0.8l10 -19.8l20.5 -0.9l10.3 19M651.4 241.8l17.2 -0.8l8.7 17.5l17.5 -0.6l8.7 -18.3l17.7 -0.8l9 17.8l18 -0.7l9.1 -18.6l18.2 -0.7l9.3 18l18.5 -0.7l9.4 -18.9l18.8 -0.7l9.6 18.3l19.1 -0.7l9.6 -19.2l19.5 -0.9l9.9 18.6l19.7 -0.7l10 -19.5l20.1 -0.8l10.1 18.8l20.5 -0.7l10.2 -19.8M651.4 277.2l17.2 -0.6l8.7 -18.1l17.5 -0.6l8.8 17.7l17.7 -0.6l8.9 -18.4l18 -0.7l9.1 18l18.3 -0.6l9.2 -18.7l18.5 -0.7l9.4 18.2l18.9 -0.6l9.5 -18.9l19.1 -0.7l9.7 18.4l19.5 -0.6l9.8 -19.3l19.7 -0.7l10.1 18.8l20.1 -0.6l10 -19.7l20.5 -0.7l10.3 19.1M651.4 277.2l17.2 -0.6l8.7 17.6l17.5 -0.4l8.8 -18.2l17.7 -0.6l9 17.8l18 -0.4l9 -18.5l18.3 -0.6l9.2 18.1l18.6 -0.5l9.3 -18.8l18.9 -0.6l9.5 18.4l19.2 -0.5l9.6 -19.1l19.5 -0.6l9.8 18.7l19.8 -0.5l10 -19.4l20.1 -0.6l10.1 18.9l20.5 -0.5l10.2 -19.7M651.5 312.6l17.2 -0.3l8.6 -18.1l17.5 -0.4l8.8 17.7l17.8 -0.3l8.9 -18.4l18 -0.4l9.1 18l18.3 -0.4l9.1 -18.6l18.6 -0.5l9.4 18.3l18.9 -0.4l9.4 -18.9l19.2 -0.5l9.7 18.6l19.5 -0.4l9.7 -19.2l19.8 -0.5l10 18.9l20.1 -0.4l10.1 -19.6l20.5 -0.5l10.3 19.2M651.5 312.6l17.2 -0.3l8.7 17.6l17.5 -0.2l8.7 -18.2l17.8 -0.3l8.9 17.9l18 -0.3l9.1 -18.4l18.3 -0.4l9.2 18.2l18.6 -0.3l9.3 -18.7l18.9 -0.4l9.5 18.5l19.2 -0.3l9.6 -19l19.5 -0.4l9.8 18.8l19.8 -0.3l9.9 -19.3l20.1 -0.4l10.2 19.1l20.5 -0.4l10.2 -19.6M651.5 348.1l17.3 -0.2l8.6 -18l17.5 -0.2l8.8 17.8l17.7 -0.2l8.9 -18.2l18 -0.3l9.1 18.1l18.3 -0.2l9.2 -18.5l18.6 -0.3l9.4 18.4l18.9 -0.2l9.4 -18.8l19.2 -0.3l9.7 18.7l19.5 -0.2l9.7 -19.1l19.8 -0.3l10 19l20.1 -0.2l10.1 -19.4l20.5 -0.4l10.3 19.4M651.5 348.1l17.3 -0.2l8.6 17.8l17.5 -0.1l8.8 -18.1l17.7 -0.2l9 18.1l18 -0.1l9 -18.4l18.3 -0.2l9.3 18.4l18.6 -0.1l9.3 -18.7l18.9 -0.2l9.5 18.7l19.2 -0.2l9.6 -18.9l19.5 -0.2l9.8 18.9l19.8 -0.1l9.9 -19.2l20.1 -0.2l10.2 19.2l20.5 -0.1l10.2 -19.5M651.6 383.5l17.2 0l8.6 -17.8l17.5 -0.1l8.8 17.9l17.8 0l8.9 -18.1l18 -0.1l9.1 18.2l18.3 0l9.2 -18.4l18.6 -0.1l9.4 18.5l18.8 0l9.5 -18.7l19.2 -0.2l9.7 18.8l19.4 0l9.8 -19l19.8 -0.1l10 19.1l20.1 0l10.1 -19.3l20.5 -0.1l10.3 19.4M651.6 383.5l17.2 0l8.7 17.9l17.5 0.1l8.7 -18l17.8 0l9 18.1l18 0.1l9 -18.2l18.3 0l9.3 18.4l18.5 0.1l9.4 -18.5l18.8 0l9.6 18.7l19.1 0.1l9.7 -18.9l19.4 0l9.9 19l19.8 0.1l9.9 -19.1l20.1 0l10.2 19.3l20.5 0.1l10.2 -19.4M651.6 419l17.3 0.2l8.6 -17.8l17.5 0.1l8.8 18l17.7 0.2l9 -18.1l18 0.1l9.1 18.4l18.3 0.1l9.2 -18.3l18.5 0.1l9.4 18.6l18.9 0.2l9.5 -18.6l19.1 0.1l9.8 18.9l19.4 0.2l9.8 -19l19.8 0.1l10 19.3l20.1 0.2l10.1 -19.3l20.5 0.1l10.3 19.6M651.6 419l17.3 0.2l8.7 17.9l17.4 0.3l8.8 -17.9l17.7 0.2l9 18.2l18 0.3l9.1 -18.1l18.3 0.1l9.2 18.6l18.6 0.2l9.3 -18.4l18.9 0.2l9.6 18.8l19.1 0.3l9.7 -18.7l19.4 0.2l9.9 19.1l19.8 0.3l9.9 -19l20.1 0.2l10.2 19.4l20.5 0.3l10.2 -19.3M651.7 454.5l17.2 0.3l8.7 -17.7l17.4 0.3l8.9 18.1l17.7 0.4l8.9 -18l18 0.3l9.1 18.4l18.3 0.4l9.2 -18.2l18.6 0.2l9.4 18.7l18.9 0.4l9.5 -18.5l19.1 0.3l9.7 19l19.5 0.4l9.8 -18.8l19.8 0.3l10 19.3l20.1 0.4l10.1 -19.1l20.5 0.3l10.3 19.6M651.7 454.5l17.2 0.3l8.7 18.1l17.5 0.4l8.8 -17.8l17.7 0.4l9 18.3l18 0.5l9 -18.1l18.3 0.4l9.3 18.6l18.6 0.5l9.3 -18.4l18.9 0.4l9.5 18.9l19.2 0.5l9.6 -18.6l19.5 0.4l9.9 19.2l19.8 0.5l9.9 -18.9l20.1 0.4l10.2 19.5l20.5 0.6l10.2 -19.3M651.7 490l17.3 0.5l8.6 -17.6l17.5 0.4l8.8 18.3l17.8 0.5l8.9 -17.9l18 0.5l9.1 18.5l18.3 0.6l9.2 -18.2l18.6 0.5l9.4 18.8l18.9 0.6l9.4 -18.5l19.2 0.5l9.7 19.1l19.5 0.6l9.8 -18.7l19.8 0.5l10 19.5l20.1 0.6l10.1 -19.1l20.5 0.6l10.3 19.7M651.7 490l17.3 0.5l8.7 18.1l17.4 0.7l8.8 -17.7l17.8 0.5l8.9 18.4l18.1 0.7l9 -18l18.3 0.6l9.3 18.7l18.5 0.6l9.4 -18.2l18.9 0.6l9.5 19l19.2 0.7l9.6 -18.6l19.5 0.6l9.9 19.4l19.8 0.7l9.9 -18.8l20.1 0.6l10.2 19.6l20.5 0.7l10.2 -19.1M651.8 525.5l17.2 0.7l8.7 -17.6l17.4 0.7l8.9 18.3l17.7 0.7l8.9 -17.8l18.1 0.7l9.1 18.6l18.3 0.7l9.2 -18l18.5 0.6l9.5 19l18.8 0.7l9.5 -18.3l19.2 0.7l9.7 19.2l19.5 0.8l9.8 -18.6l19.8 0.7l10 19.5l20.1 0.8l10.1 -18.9l20.5 0.7l10.3 19.9M651.8 525.5l17.2 0.7l8.7 18.2l17.5 0.8l8.8 -17.6l17.7 0.7l9 18.5l18 0.9l9.1 -17.9l18.3 0.7l9.2 18.9l18.6 0.8l9.4 -18.1l18.8 0.7l9.6 19.1l19.2 0.9l9.6 -18.4l19.5 0.8l9.8 19.4l19.9 0.9l9.9 -18.7l20.1 0.8l10.2 19.8l20.5 0.9l10.2 -19M651.8 561l17.3 0.8l8.6 -17.4l17.5 0.8l8.8 18.4l17.8 0.9l8.9 -17.7l18 0.9l9.1 18.7l18.3 0.9l9.2 -17.9l18.6 0.8l9.4 19l18.9 1l9.5 -18.3l19.2 0.9l9.7 19.4l19.5 1l9.7 -18.6l19.9 0.9l10 19.7l20.1 1l10.1 -18.8l20.5 0.9l10.3 20M651.8 561l17.3 0.8l8.7 18.4l17.5 1l8.7 -17.6l17.8 0.9l9 18.7l18 1l9 -17.8l18.3 0.9l9.3 18.9l18.6 1.1l9.3 -18.1l18.9 1l9.6 19.2l19.1 1.1l9.7 -18.3l19.5 1l9.8 19.5l19.8 1.1l10 -18.6l20.1 1l10.2 19.9l20.5 1.1l10.2 -18.9M651.9 596.5l17.2 1l8.7 -17.3l17.5 1l8.8 18.5l17.7 1.1l9 -17.6l18 1l9.1 18.8l18.3 1.1l9.2 -17.9l18.6 1.1l9.4 19.1l18.9 1.2l9.5 -18.2l19.1 1.1l9.8 19.4l19.5 1.2l9.7 -18.4l19.8 1.1l10.1 19.8l20.1 1.2l10.1 -18.7l20.5 1.1l10.3 20.1M651.9 596.5l17.2 1l8.7 18.5l17.5 1.1l8.8 -17.4l17.7 1.1l9 18.7l18.1 1.2l9 -17.7l18.3 1.1l9.3 19l18.6 1.3l9.3 -18l18.9 1.2l9.5 19.3l19.2 1.3l9.7 -18.3l19.5 1.2l9.8 19.7l19.8 1.3l10 -18.5l20.1 1.2l10.2 20l20.5 1.3l10.2 -18.8M651.9 632l17.3 1.2l8.6 -17.2l17.5 1.1l8.8 18.6l17.8 1.3l8.9 -17.5l18.1 1.2l9.1 18.9l18.3 1.3l9.2 -17.8l18.6 1.3l9.4 19.2l18.9 1.4l9.4 -18.1l19.2 1.3l9.7 19.5l19.5 1.4l9.8 -18.3l19.8 1.3l10.1 19.9l20.1 1.4l10.1 -18.6l20.5 1.3l10.3 20.3M651.9 632l17.3 1.2l8.7 18.5l17.5 1.4l8.7 -17.4l17.8 1.3l9 18.8l18 1.4l9.1 -17.6l18.3 1.3l9.2 19.1l18.6 1.5l9.4 -17.9l18.9 1.4l9.5 19.4l19.2 1.5l9.6 -18.2l19.5 1.4l9.9 19.8l19.8 1.5l10 -18.4l20.1 1.4l10.2 20.1l20.5 1.6l10.2 -18.7M652 667.5l17.2 1.4l8.7 -17.2l17.5 1.4l8.8 18.7l17.8 1.5l8.9 -17.5l18 1.4l9.1 19l18.3 1.5l9.2 -17.7l18.6 1.5l9.4 19.3l18.9 1.6l9.5 -18l19.2 1.5l9.7 19.6l19.5 1.6l9.8 -18.2l19.8 1.5l10.1 20l20.1 1.6l10.1 -18.5l20.5 1.6l10.3 20.3M652 667.5l17.2 1.4l8.7 18.6l17.5 1.6l8.8 -17.3l17.8 1.5l8.9 18.9l18.1 1.6l9 -17.6l18.3 1.5l9.3 19.3l18.6 1.6l9.3 -17.8l18.9 1.6l9.6 19.5l19.2 1.7l9.6 -18.1l19.5 1.6l9.9 19.9l19.8 1.7l10 -18.3l20.1 1.6l10.2 20.2l20.5 1.8l10.2 -18.6M652 703.1l17.3 1.6l8.6 -17.2l17.5 1.6l8.9 18.8l17.7 1.6l8.9 -17.3l18.1 1.6l9.1 19.1l18.3 1.7l9.2 -17.6l18.6 1.6l9.4 19.4l18.9 1.8l9.5 -17.9l19.2 1.7l9.7 19.7l19.5 1.8l9.8 -18.1l19.8 1.7l10 20.1l20.2 1.8l10.1 -18.4l20.5 1.8l10.3 20.4M652 703.1l17.3 1.6l8.7 18.7l17.5 1.7l8.8 -17.2l17.7 1.6l9 19l18 1.8l9.1 -17.4l18.3 1.7l9.3 19.3l18.6 1.8l9.3 -17.7l18.9 1.8l9.6 19.6l19.2 1.9l9.6 -18l19.5 1.8l9.9 20l19.8 1.9l9.9 -18.2l20.2 1.8l10.2 20.4l20.5 2l10.2 -18.6M652.1 738.6l17.2 1.8l8.7 -17l17.5 1.7l8.8 18.9l17.8 1.8l8.9 -17.3l18 1.8l9.2 19.2l18.3 1.9l9.2 -17.5l18.6 1.8l9.4 19.5l18.9 2l9.5 -17.8l19.2 1.9l9.7 19.8l19.5 2l9.8 -18l19.8 1.9l10 20.2l20.2 2.1l10.1 -18.3l20.5 2l10.3 20.5M652.1 738.6l17.2 1.8l8.7 18.8l17.5 1.9l8.8 -17.1l17.8 1.8l9 19.1l18 2l9.1 -17.4l18.3 1.9l9.2 19.4l18.7 2l9.3 -17.6l18.9 2l9.6 19.7l19.2 2.1l9.6 -17.9l19.5 2l9.9 20.1l19.8 2.1l9.9 -18.1l20.2 2.1l10.2 20.4l20.5 2.2l10.2 -18.4M652.1 774.2l17.3 1.9l8.6 -16.9l17.5 1.9l8.9 19l17.7 2l9 -17.2l18 2l9.1 19.3l18.3 2l9.2 -17.4l18.7 2l9.4 19.7l18.9 2.1l9.5 -17.7l19.2 2.1l9.7 19.9M890.6 801.1l9.8 -17.9l19.8 2.1l10 20.3M950.4 807.9l10.1 -18.2l20.5 2.2l10.3 20.7M652.1 774.2l17.3 1.9l8.7 18.9l17.5 2.1l8.8 -17l17.7 2l9 19.2M749.2 803.4l9 -17.2l18.3 2l9.3 19.6M804.4 810l9.4 -17.5l18.9 2.1l9.5 19.8M669.4 811.9l8.7 -16.9l17.5 2.1l8.8 19.1"/><path id="hp3" d="M1009.9 -46.8l10.5 18.4l21.1 -2.3M1010 -7.8l10.4 -20.6l21.1 -2.3l10.6 18.6l21.5 -2.3l10.7 -21M1106.1 -37.8l11.1 18.9l22.2 -2.3l11.1 -21.4M1173.1 -45l11.4 19.2l23 -2.4l11.5 -21.8M1010 -7.8l10.5 18.5l21.1 -2l10.5 -20.8l21.5 -2.3l10.9 18.8l21.8 -2.1l10.9 -21.2l22.2 -2.3l11.2 19.1l22.6 -2.2l11.3 -21.5l23 -2.4l11.6 19.4l23.4 -2.3l11.7 -21.9M1277.9 -35.5l12.1 19.7l24.2 -2.3l12.1 -22.4M1351 -43l12.5 20l25 -2.4l12.6 -22.8M1010.1 31.3l10.4 -20.6l21.1 -2l10.7 18.7l21.4 -2l10.8 -21l21.8 -2.1l11 19l22.2 -2.1l11.1 -21.3l22.6 -2.2l11.4 19.3l23 -2.1l11.5 -21.7l23.4 -2.3l11.8 19.6l23.8 -2.2l11.9 -22.1l24.2 -2.3l12.3 19.9l24.6 -2.3l12.4 -22.5l25 -2.4l12.8 20.3M1010.1 31.3l10.5 18.6l21.1 -1.8l10.6 -20.7l21.4 -2l10.9 18.9l21.8 -1.9l10.9 -21.1l22.2 -2.1l11.3 19.3l22.5 -2l11.3 -21.5l23 -2.1l11.7 19.5l23.3 -2l11.7 -21.9l23.8 -2.2l12.1 19.9l24.2 -2.1l12.1 -22.3l24.6 -2.3l12.5 20.2l25.1 -2.2l12.6 -22.6M1010.2 70.4l10.4 -20.5l21.1 -1.8l10.7 18.8l21.4 -1.8l10.8 -20.8l21.8 -1.9l11 19.1l22.2 -1.9l11.2 -21.1l22.5 -2l11.5 19.4l22.9 -1.9l11.6 -21.6l23.3 -2l11.9 19.7l23.7 -1.9l12 -22l24.2 -2.1l12.3 20.1l24.6 -2.1l12.3 -22.4l25.1 -2.2l12.8 20.5M1010.2 70.4l10.5 18.7l21.1 -1.6l10.6 -20.6l21.4 -1.8l10.9 19l21.8 -1.7l10.9 -20.9l22.2 -1.9l11.3 19.4l22.6 -1.8l11.3 -21.3l22.9 -1.9l11.7 19.7l23.4 -1.9l11.7 -21.7l23.7 -1.9l12.1 20l24.2 -1.9l12.2 -22.1l24.6 -2.1l12.5 20.3l25.1 -1.9l12.6 -22.5M1010.3 109.5l10.4 -20.4l21.1 -1.6l10.7 18.9l21.4 -1.6l10.8 -20.7l21.8 -1.7l11.1 19.3l22.2 -1.6l11.1 -21.1l22.6 -1.8l11.4 19.6l23 -1.7l11.5 -21.4l23.4 -1.9l11.8 19.9l23.8 -1.7l11.9 -21.8l24.2 -1.9l12.3 20.2l24.7 -1.8l12.3 -22.3l25.1 -1.9l12.7 20.6M1010.3 109.5l10.5 18.8l21.1 -1.4l10.6 -20.5l21.4 -1.6l10.9 19.2l21.8 -1.5l11 -20.8l22.2 -1.6l11.2 19.4l22.6 -1.5l11.3 -21.2l23 -1.7l11.6 19.8l23.4 -1.6l11.7 -21.6l23.8 -1.7l12.1 20.1l24.2 -1.6l12.1 -22l24.7 -1.8l12.5 20.5l25.1 -1.7l12.5 -22.4M1010.4 148.6l10.4 -20.3l21.1 -1.4l10.7 19l21.4 -1.3l10.8 -20.6l21.8 -1.5l11.1 19.4l22.2 -1.4l11.1 -21l22.6 -1.5l11.4 19.7l23 -1.4l11.5 -21.4l23.4 -1.6l11.9 20.1l23.7 -1.5l12 -21.8l24.2 -1.6l12.3 20.4l24.6 -1.6l12.4 -22.1l25.1 -1.7l12.7 20.7M1010.4 148.6l10.5 18.9l21.1 -1.2l10.6 -20.4l21.4 -1.3l10.9 19.3l21.8 -1.3l11 -20.7l22.2 -1.4l11.2 19.6l22.6 -1.3l11.3 -21.1l23 -1.4l11.7 19.9l23.3 -1.4l11.8 -21.4l23.7 -1.5l12.1 20.2l24.2 -1.4l12.2 -21.8l24.6 -1.6l12.5 20.6l25.1 -1.4l12.6 -22.3M989.7 188.8l20.8 -1.1l10.4 -20.2l21.1 -1.2l10.7 19.2l21.5 -1.1l10.7 -20.5l21.8 -1.3l11.1 19.5l22.2 -1.2l11.1 -20.8l22.6 -1.3l11.5 19.8l23 -1.2l11.5 -21.2l23.3 -1.4l11.9 20.2l23.8 -1.3l11.9 -21.6l24.2 -1.4l12.3 20.5l24.7 -1.3l12.3 -22l25.1 -1.4l12.8 20.8M989.7 188.8l20.8 -1.1l10.5 19l21.1 -0.9l10.6 -20.3l21.5 -1.1l10.8 19.3l21.9 -1l10.9 -20.6l22.2 -1.2l11.3 19.7l22.6 -1l11.3 -21l23 -1.2l11.6 20l23.4 -1.1l11.7 -21.3l23.8 -1.3l12.1 20.4l24.2 -1.1l12.1 -21.8l24.7 -1.3l12.5 20.8l25.1 -1.2l12.6 -22.2M989.8 227.7l20.8 -0.9l10.4 -20.1l21.1 -0.9l10.7 19.2l21.5 -0.9l10.7 -20.4l21.9 -1l11 19.6l22.2 -0.9l11.2 -20.8l22.6 -1l11.4 19.9l23 -0.9l11.5 -21.2l23.4 -1.1l11.9 20.3l23.8 -1l11.9 -21.5l24.2 -1.1l12.3 20.6l24.6 -1l12.4 -21.9l25.1 -1.2l12.8 21M989.8 227.7l20.8 -0.9l10.5 19.2l21.1 -0.8l10.6 -20.2l21.5 -0.9l10.9 19.5l21.8 -0.8l10.9 -20.5l22.2 -0.9l11.3 19.8l22.6 -0.8l11.3 -20.9l23 -0.9l11.7 20.1l23.3 -0.8l11.8 -21.3l23.8 -1l12 20.5l24.3 -0.8l12.1 -21.7l24.6 -1l12.6 20.9l25.1 -1l12.6 -22M989.9 266.6l20.8 -0.7l10.4 -19.9l21.1 -0.8l10.7 19.4l21.5 -0.7l10.8 -20.3l21.8 -0.8l11.1 19.8l22.2 -0.7l11.1 -20.7l22.6 -0.8l11.4 20.1l23 -0.8l11.6 -21l23.3 -0.8l11.9 20.4l23.8 -0.8l11.9 -21.4l24.3 -0.8l12.3 20.7l24.6 -0.8l12.4 -21.7l25.1 -1l12.7 21.2M989.9 266.6l20.8 -0.7l10.5 19.3l21.1 -0.5l10.6 -20.1l21.5 -0.7l10.9 19.6l21.8 -0.5l11 -20.4l22.2 -0.7l11.2 19.9l22.6 -0.6l11.3 -20.7l23 -0.8l11.7 20.3l23.4 -0.6l11.7 -21.1l23.8 -0.8l12.1 20.7l24.2 -0.7l12.2 -21.5l24.6 -0.8l12.5 21l25.1 -0.6l12.6 -21.9M990 305.5l20.8 -0.4l10.4 -19.9l21.1 -0.5l10.7 19.5l21.5 -0.5l10.8 -20.2l21.8 -0.5l11.1 19.8l22.2 -0.5l11.1 -20.5l22.6 -0.6l11.5 20.2l23 -0.5l11.5 -20.9l23.4 -0.6l11.8 20.5l23.9 -0.5l11.9 -21.2l24.2 -0.7l12.3 20.9l24.7 -0.5l12.3 -21.7l25.1 -0.6l12.8 21.2M990 305.5l20.8 -0.4l10.5 19.4l21.1 -0.4l10.6 -19.9l21.5 -0.5l10.9 19.8l21.8 -0.4l11 -20.3l22.2 -0.5l11.3 20.1l22.6 -0.3l11.3 -20.7l23 -0.5l11.6 20.4l23.4 -0.3l11.7 -21.1l23.9 -0.5l12 20.8l24.3 -0.4l12.1 -21.4l24.7 -0.5l12.5 21.1l25.1 -0.4l12.6 -21.8M990.1 344.5l20.8 -0.3l10.4 -19.7l21.1 -0.4l10.7 19.7l21.5 -0.3l10.8 -20l21.8 -0.4l11.1 20l22.2 -0.3l11.2 -20.4l22.6 -0.3l11.4 20.3l23 -0.3l11.5 -20.8l23.4 -0.3l11.9 20.6l23.8 -0.2l11.9 -21.2l24.3 -0.4l12.3 21l24.6 -0.2l12.4 -21.6l25.1 -0.4l12.8 21.4M990.1 344.5l20.8 -0.3l10.5 19.6l21.1 -0.2l10.6 -19.8l21.5 -0.3l10.9 19.9l21.9 -0.1l10.9 -20.2l22.2 -0.3l11.3 20.2l22.6 -0.1l11.3 -20.5l23 -0.3l11.7 20.5l23.4 -0.1l11.7 -20.9l23.8 -0.2l12.1 20.8l24.2 -0.1l12.2 -21.3l24.6 -0.2l12.6 21.2l25.1 -0.1l12.6 -21.7M990.2 383.4l20.8 0l10.4 -19.6l21.1 -0.2l10.8 19.8l21.4 0l10.8 -20l21.9 -0.1l11 20l22.2 0l11.2 -20.3l22.6 -0.1l11.4 20.4l23 0l11.6 -20.7l23.4 -0.1l11.8 20.8l23.9 0l11.9 -21.1l24.2 -0.1l12.3 21.2l24.7 0l12.4 -21.5l25.1 -0.1l12.8 21.5M990.2 383.4l20.8 0l10.5 19.6l21.2 0.1l10.6 -19.7l21.4 0l10.9 19.9l21.9 0.1l10.9 -20.1l22.2 0l11.3 20.3l22.6 0.2l11.3 -20.5l23 0l11.7 20.7l23.4 0.1l11.7 -20.8l23.9 0l12 21l24.3 0.1l12.1 -21.1l24.7 0l12.5 21.4l25.2 0.1l12.6 -21.6M990.3 422.4l20.8 0.2l10.4 -19.6l21.2 0.1l10.7 19.9l21.4 0.2l10.8 -19.9l21.9 0.1l11 20.2l22.3 0.3l11.1 -20.3l22.6 0.2l11.5 20.5l23 0.2l11.5 -20.5l23.4 0.1l11.9 20.9l23.8 0.2l11.9 -20.9l24.3 0.1l12.3 21.3l24.7 0.3l12.3 -21.3l25.2 0.1l12.7 21.7M990.3 422.4l20.8 0.2l10.5 19.7l21.2 0.3l10.6 -19.6l21.4 0.2l10.9 20.1l21.9 0.3l10.9 -20l22.3 0.3l11.2 20.4l22.6 0.3l11.4 -20.3l23 0.2l11.7 20.8l23.4 0.4l11.7 -20.7l23.8 0.2l12.1 21.2l24.2 0.4l12.2 -21.1l24.7 0.3l12.5 21.5l25.1 0.4l12.6 -21.4M990.4 461.3l20.8 0.5l10.4 -19.5l21.2 0.3l10.7 20l21.5 0.4l10.7 -19.7l21.9 0.3l11.1 20.3l22.2 0.5l11.1 -20.1l22.6 0.3l11.5 20.7l23 0.5l11.6 -20.5l23.4 0.4l11.8 21l23.9 0.5l11.9 -20.8l24.2 0.4l12.4 21.4l24.6 0.5l12.4 -21.2l25.1 0.4l12.8 21.8M990.4 461.3l20.8 0.5l10.5 19.8l21.2 0.6l10.6 -19.6l21.5 0.4l10.9 20.2l21.8 0.6l11 -19.9l22.2 0.5l11.3 20.5l22.6 0.6l11.3 -20.2l23 0.5l11.7 20.9l23.4 0.6l11.7 -20.6l23.9 0.5l12 21.3l24.3 0.6l12.2 -20.9l24.6 0.5l12.6 21.6l25.1 0.7l12.6 -21.3M990.5 500.3l20.8 0.7l10.4 -19.4l21.2 0.6l10.7 20l21.5 0.7l10.8 -19.7l21.8 0.6l11.1 20.4l22.2 0.7l11.2 -20l22.6 0.6l11.5 20.8l23 0.7l11.5 -20.3l23.4 0.6l11.9 21.1l23.8 0.8l11.9 -20.7l24.3 0.6l12.3 21.5l24.7 0.8l12.4 -21.1l25.1 0.7l12.8 21.9M990.5 500.3l20.8 0.7l10.5 19.9l21.2 0.8l10.6 -19.5l21.5 0.7l10.9 20.3l21.8 0.8l11 -19.8l22.2 0.7l11.3 20.7l22.6 0.8l11.4 -20.1l23 0.7l11.6 21l23.4 0.9l11.8 -20.5l23.8 0.8l12.1 21.4l24.3 0.8l12.1 -20.8l24.7 0.8l12.5 21.8l25.2 0.9l12.6 -21.2M990.6 539.3l20.8 0.9l10.4 -19.3l21.2 0.8l10.7 20.2l21.5 0.9l10.8 -19.6l21.8 0.8l11.1 20.6l22.2 0.9l11.2 -19.9l22.6 0.8l11.5 20.9l23 1l11.5 -20.3l23.4 0.9l11.9 21.3l23.9 0.9l11.9 -20.5l24.3 0.8l12.3 21.7l24.7 1l12.3 -20.9l25.2 0.9l12.7 22.1M990.6 539.3l20.8 0.9l10.6 20l21.1 1l10.6 -19.3l21.5 0.9l10.9 20.4l21.9 1l10.9 -19.6l22.2 0.9l11.3 20.8l22.6 1l11.4 -20l23 1l11.7 21.1l23.4 1.1l11.7 -20.3l23.9 0.9l12.1 21.6l24.2 1.1l12.2 -20.7l24.7 1l12.5 22l25.1 1.1l12.6 -21M990.7 578.3l20.8 1.1l10.5 -19.2l21.1 1l10.7 20.3l21.5 1.1l10.8 -19.4l21.9 1l11 20.7l22.3 1.1l11.1 -19.7l22.6 1l11.5 21l23 1.2l11.6 -20.1l23.4 1.1l11.9 21.4l23.8 1.2l12 -20.4l24.2 1.1l12.3 21.8l24.7 1.3l12.4 -20.8l25.1 1.1l12.8 22.3M990.7 578.3l20.8 1.1l10.6 20.2l21.1 1.2l10.6 -19.3l21.5 1.1l10.9 20.6l21.9 1.2l10.9 -19.5l22.3 1.1l11.3 20.9l22.6 1.3l11.3 -19.9l23 1.2l11.7 21.3l23.4 1.3l11.8 -20.2l23.8 1.2l12.1 21.7l24.3 1.4l12.1 -20.6l24.7 1.3l12.6 22.1l25.1 1.4l12.6 -20.9M990.8 617.3l20.8 1.3l10.5 -19l21.1 1.2l10.7 20.4l21.5 1.3l10.8 -19.3l21.9 1.2l11.1 20.8l22.2 1.4l11.2 -19.7l22.6 1.3l11.5 21.2l23 1.4l11.5 -20l23.4 1.3l11.9 21.6l23.9 1.4l11.9 -20.3l24.3 1.4l12.3 21.9l24.7 1.5l12.4 -20.6l25.1 1.4l12.8 22.3M990.8 617.3l20.8 1.3l10.6 20.3l21.1 1.4l10.6 -19.1l21.5 1.3l10.9 20.7l21.9 1.5l11 -19.5l22.2 1.4l11.3 21l22.6 1.5l11.4 -19.7l23 1.4l11.7 21.4l23.4 1.6l11.7 -20.1l23.9 1.4l12.1 21.9l24.2 1.6l12.2 -20.5l24.7 1.5l12.5 22.3l25.2 1.6l12.6 -20.8M990.9 656.4l20.8 1.4l10.5 -18.9l21.1 1.4l10.7 20.6l21.5 1.5l10.8 -19.2l21.9 1.5l11.1 20.9l22.2 1.6l11.2 -19.6l22.6 1.5l11.5 21.3l23 1.7l11.6 -19.9l23.4 1.6l11.9 21.6l23.8 1.8l12 -20.2l24.2 1.6l12.4 22l24.7 1.8l12.3 -20.5l25.2 1.6l12.8 22.5M990.9 656.4l20.8 1.4l10.6 20.5l21.1 1.6l10.6 -19l21.5 1.5l10.9 20.8l21.9 1.7l11 -19.3l22.2 1.6l11.3 21.1l22.6 1.8l11.4 -19.7l23 1.7l11.7 21.5l23.4 1.8l11.8 -20l23.8 1.8l12.1 21.9l24.3 1.9l12.2 -20.4l24.7 1.8l12.5 22.4l25.2 1.9l12.6 -20.7M991 695.4l20.8 1.7l10.5 -18.8l21.1 1.6l10.7 20.7l21.6 1.7l10.7 -19.1l21.9 1.7l11.1 21l22.3 1.9l11.1 -19.5l22.6 1.8l11.5 21.4l23 1.9l11.6 -19.8l23.4 1.8l11.9 21.8l23.9 2l11.9 -20.1l24.3 1.9l12.3 22.2l24.7 2l12.4 -20.4l25.2 1.9l12.7 22.7M991 695.4l20.8 1.7l10.6 20.5l21.1 1.9l10.6 -18.9l21.6 1.7l10.9 20.9l21.8 2l11 -19.3l22.3 1.9l11.2 21.2l22.7 2l11.3 -19.5l23 1.9l11.7 21.6l23.5 2.1l11.7 -19.9l23.9 2l12.1 22.1l24.2 2.1l12.2 -20.2l24.7 2l12.6 22.5l25.1 2.2l12.6 -20.5M991.1 734.4l20.8 2l10.5 -18.8l21.1 1.9l10.8 20.8l21.5 2l10.8 -19.1l21.8 2l11.1 21.1l22.3 2.1l11.1 -19.4l22.7 2l11.5 21.6l23 2.1l11.5 -19.7l23.5 2.1l11.9 21.9l23.8 2.2l12 -19.9l24.2 2.1l12.4 22.3l24.7 2.3l12.4 -20.3l25.1 2.2l12.8 22.8M991.1 734.4l20.8 2l10.6 20.6l21.1 2.1l10.7 -18.8l21.5 2l10.9 21l21.9 2.1l10.9 -19.1l22.3 2.1l11.3 21.4l22.6 2.2l11.4 -19.4l23 2.1l11.7 21.8l23.4 2.3l11.8 -19.8l23.8 2.2l12.1 22.2l24.3 2.4l12.2 -20.1l24.7 2.3l12.5 22.6l25.2 2.5l12.6 -20.4M991.2 773.5l20.8 2.1l10.5 -18.6l21.1 2.1l10.8 20.9l21.5 2.2l10.8 -18.9l21.9 2.1l11.1 21.3l22.2 2.3l11.2 -19.2l22.6 2.2l11.5 21.6l23 2.4l11.6 -19.5l23.4 2.3l11.9 22M1281 803.3l11.9 -19.9l24.3 2.4l12.3 22.5M1354.3 810.8l12.3 -20.2l25.2 2.5l12.8 22.9M991.2 773.5l20.8 2.1l10.6 20.8l21.2 2.3l10.6 -18.7l21.5 2.2l10.9 21.1M1108.7 805.7l11 -19l22.2 2.3l11.3 21.5M1175.8 813l11.4 -19.4l23 2.4l11.7 21.9M1012.1 814.9l10.5 -18.5l21.2 2.3"/><filter id="blr" x="-5%" y="-5%" width="110%" height="110%"><feGaussianBlur stdDeviation="1.1"/></filter><filter id="bl1" x="-5%" y="-5%" width="110%" height="110%"><feGaussianBlur stdDeviation="0.9"/><feComponentTransfer><feFuncA type="linear" slope="1.7"/></feComponentTransfer></filter><mask id="lm" maskUnits="userSpaceOnUse" x="0" y="0" width="1366" height="768"><rect width="1366" height="768" fill="#000"/><g fill="none" stroke="#fff" stroke-linejoin="round" filter="url(#bl1)"><use href="#hp0" stroke-width="1"/><use href="#hp1" stroke-width="1.05"/><use href="#hp2" stroke-width="1.4"/><use href="#hp3" stroke-width="1.55"/></g></mask><mask id="im" maskUnits="userSpaceOnUse" x="0" y="0" width="1366" height="768"><rect width="1366" height="768" fill="#000"/><path fill="#fff" filter="url(#blr)" d="M0.6 -5l-3.2 9.6l-6.5 0.9l-3.3 -8.7l3.3 -9.6l6.5 -1zM0.6 23.6l-3.3 9.6l-6.5 0.8l-3.2 -8.7l3.3 -9.6l6.5 -0.8zM0.6 52.3l-3.3 9.6l-6.5 0.7l-3.2 -8.8l3.2 -9.5l6.5 -0.8zM0.5 81l-3.2 9.5l-6.5 0.7l-3.2 -8.8l3.2 -9.5l6.5 -0.7zM0.5 109.7l-3.2 9.5l-6.5 0.6l-3.3 -8.9l3.3 -9.4l6.5 -0.7zM0.5 138.4l-3.3 9.4l-6.5 0.6l-3.2 -8.9l3.3 -9.4l6.4 -0.6zM0.5 167.1l-3.3 9.4l-6.5 0.5l-3.2 -8.9l3.2 -9.4l6.5 -0.6zM0.4 195.8l-3.2 9.4l-6.5 0.4l-3.2 -9l3.2 -9.3l6.5 -0.5zM0.4 224.5l-3.2 9.3l-6.5 0.4l-3.3 -9l3.3 -9.3l6.5 -0.4zM0.4 253.2l-3.3 9.3l-6.5 0.3l-3.2 -9l3.3 -9.3l6.4 -0.3zM0.4 281.9l-3.3 9.3l-6.5 0.2l-3.2 -9l3.2 -9.3l6.5 -0.3zM0.3 310.6l-3.2 9.3l-6.5 0.1l-3.2 -9l3.2 -9.3l6.5 -0.2zM0.3 339.4l-3.2 9.2l-6.5 0.1l-3.3 -9.1l3.3 -9.2l6.5 -0.2zM0.3 368.1l-3.3 9.2l-6.5 0l-3.2 -9.1l3.3 -9.2l6.4 -0.1zM0.3 396.8l-3.3 9.2l-6.5 0l-3.2 -9.2l3.2 -9.2l6.5 0zM0.2 425.6l-3.2 9.1l-6.5 -0.1l-3.2 -9.2l3.2 -9.1l6.5 0.1zM0.2 454.3l-3.2 9.2l-6.5 -0.2l-3.3 -9.3l3.3 -9.1l6.5 0.2zM0.2 483.1l-3.3 9.1l-6.5 -0.3l-3.2 -9.2l3.2 -9.1l6.5 0.2zM0.2 511.9l-3.3 9l-6.5 -0.3l-3.2 -9.3l3.2 -9l6.5 0.2zM0.1 540.6l-3.2 9.1l-6.5 -0.4l-3.2 -9.4l3.2 -9l6.5 0.4zM0.1 569.4l-3.2 9l-6.5 -0.4l-3.3 -9.4l3.3 -9l6.5 0.4zM0.1 598.2l-3.3 9l-6.5 -0.6l-3.2 -9.4l3.2 -8.9l6.5 0.5zM0.1 627l-3.3 8.9l-6.5 -0.6l-3.2 -9.4l3.2 -8.9l6.5 0.5zM0 655.8l-3.2 8.9l-6.5 -0.7l-3.3 -9.5l3.3 -8.8l6.5 0.6zM0 684.6l-3.2 8.9l-6.5 -0.8l-3.3 -9.5l3.3 -8.8l6.5 0.6zM17.6 7l-3.3 9.7l-6.6 0.8l-3.3 -8.7l3.3 -9.7l6.6 -0.9zM17.5 35.8l-3.3 9.7l-6.5 0.8l-3.3 -8.8l3.3 -9.6l6.6 -0.9zM17.5 64.7l-3.3 9.6l-6.5 0.7l-3.3 -8.8l3.3 -9.6l6.5 -0.7zM17.5 93.6l-3.3 9.5l-6.6 0.7l-3.2 -8.9l3.2 -9.5l6.6 -0.7zM17.5 122.4l-3.3 9.6l-6.6 0.5l-3.3 -8.8l3.3 -9.6l6.6 -0.6zM17.5 151.3l-3.4 9.5l-6.5 0.5l-3.3 -8.9l3.3 -9.5l6.6 -0.6zM17.4 180.2l-3.3 9.4l-6.5 0.5l-3.3 -9l3.3 -9.4l6.5 -0.5zM17 729.9l-3.3 8.9l-6.6 -0.9l-3.3 -9.6l3.3 -8.9l6.6 0.8zM17 758.9l-3.4 8.8l-6.5 -0.9l-3.3 -9.7l3.3 -8.8l6.6 0.9zM34.7 -9.8l-3.3 9.7l-6.6 0.9l-3.3 -8.8l3.3 -9.7l6.6 -0.9zM34.7 19.2l-3.3 9.7l-6.7 0.8l-3.3 -8.8l3.4 -9.7l6.6 -0.8zM34.7 48.2l-3.3 9.7l-6.7 0.8l-3.3 -8.9l3.3 -9.6l6.7 -0.9zM34.7 77.3l-3.4 9.6l-6.6 0.7l-3.3 -8.9l3.3 -9.6l6.7 -0.8zM34.7 106.3l-3.4 9.6l-6.6 0.6l-3.3 -8.9l3.3 -9.6l6.6 -0.7zM34.6 135.3l-3.3 9.6l-6.7 0.6l-3.3 -9l3.4 -9.5l6.6 -0.7zM34.6 164.4l-3.3 9.5l-6.7 0.5l-3.3 -9l3.3 -9.5l6.7 -0.5zM34.6 193.4l-3.3 9.6l-6.7 0.4l-3.3 -9.1l3.3 -9.4l6.7 -0.5zM34.2 717.4l-3.3 9l-6.7 -0.8l-3.3 -9.7l3.3 -8.9l6.7 0.7zM34.2 746.6l-3.4 8.9l-6.6 -0.9l-3.3 -9.7l3.3 -8.9l6.6 0.9zM34.2 775.8l-3.4 8.8l-6.7 -0.9l-3.3 -9.8l3.4 -8.8l6.6 0.9zM52.1 2.3l-3.4 9.8l-6.7 0.9l-3.3 -8.8l3.3 -9.8l6.7 -0.9zM52.1 31.5l-3.4 9.8l-6.7 0.8l-3.4 -8.9l3.4 -9.7l6.7 -0.9zM52.1 60.8l-3.4 9.7l-6.7 0.7l-3.4 -8.9l3.4 -9.7l6.7 -0.8zM52.1 90l-3.4 9.7l-6.8 0.6l-3.3 -8.9l3.4 -9.7l6.7 -0.7zM52 119.2l-3.3 9.6l-6.8 0.6l-3.3 -9l3.3 -9.6l6.8 -0.6zM52 148.4l-3.4 9.6l-6.7 0.6l-3.3 -9.1l3.3 -9.6l6.7 -0.5zM52 177.6l-3.4 9.6l-6.7 0.5l-3.4 -9.1l3.4 -9.5l6.7 -0.6zM51.6 734.2l-3.4 8.9l-6.7 -0.8l-3.4 -9.8l3.4 -8.9l6.7 0.8zM51.6 763.5l-3.4 8.9l-6.7 -0.9l-3.4 -9.8l3.4 -8.9l6.7 0.9zM69.7 14.7l-3.4 9.8l-6.8 0.9l-3.4 -9l3.4 -9.8l6.8 -0.9zM69.7 44l-3.4 9.9l-6.9 0.7l-3.3 -8.9l3.4 -9.8l6.8 -0.8zM69.7 73.4l-3.5 9.8l-6.8 0.7l-3.4 -9l3.4 -9.7l6.9 -0.8zM69.6 102.8l-3.4 9.8l-6.8 0.6l-3.4 -9l3.4 -9.7l6.8 -0.7zM69.6 132.2l-3.4 9.7l-6.8 0.6l-3.4 -9.1l3.4 -9.6l6.8 -0.7zM69.6 161.6l-3.4 9.7l-6.8 0.5l-3.4 -9.1l3.4 -9.6l6.8 -0.6zM69.6 191.1l-3.4 9.6l-6.9 0.4l-3.3 -9.1l3.4 -9.6l6.8 -0.5zM69.3 721.6l-3.5 9l-6.8 -0.8l-3.4 -9.8l3.4 -9.1l6.8 0.8zM69.2 751.1l-3.4 9l-6.8 -0.9l-3.4 -9.9l3.4 -8.9l6.8 0.8zM87.5 -2.4l-3.4 9.9l-6.9 0.9l-3.5 -9l3.5 -9.9l6.9 -0.9zM87.5 27.1l-3.5 9.9l-6.9 0.9l-3.4 -9l3.5 -9.9l6.9 -0.9zM87.5 56.7l-3.5 9.9l-6.9 0.7l-3.4 -9l3.4 -9.8l6.9 -0.8zM87.5 86.3l-3.5 9.8l-6.9 0.7l-3.4 -9.1l3.4 -9.8l6.9 -0.7zM87.5 115.9l-3.5 9.7l-6.9 0.7l-3.4 -9.1l3.4 -9.8l6.9 -0.7zM87.4 145.5l-3.4 9.7l-6.9 0.6l-3.5 -9.2l3.5 -9.7l6.9 -0.6zM87.4 175.1l-3.4 9.7l-6.9 0.4l-3.5 -9.1l3.5 -9.7l6.9 -0.6zM87.1 738.5l-3.5 9.1l-6.9 -0.9l-3.4 -9.9l3.4 -9l6.9 0.8zM87.1 768.3l-3.5 9l-6.9 -1l-3.4 -9.9l3.4 -9l6.9 0.9zM105.6 10l-3.6 10l-6.9 0.9l-3.5 -9.1l3.5 -9.9l7 -0.9zM105.5 39.8l-3.5 9.9l-7 0.8l-3.4 -9.1l3.5 -9.9l6.9 -0.8zM105.5 69.5l-3.5 9.9l-7 0.8l-3.4 -9.1l3.4 -9.9l7 -0.8zM105.5 99.3l-3.5 9.9l-7 0.6l-3.5 -9.1l3.5 -9.9l7 -0.7zM105.5 129.1l-3.5 9.8l-7 0.6l-3.5 -9.2l3.5 -9.8l7 -0.6zM105.5 158.8l-3.5 9.8l-7 0.6l-3.5 -9.3l3.5 -9.7l7 -0.6zM105.5 188.6l-3.5 9.8l-7 0.4l-3.5 -9.2l3.5 -9.8l7 -0.5zM105.2 725.8l-3.5 9.1l-7 -0.8l-3.5 -9.9l3.5 -9.2l7 0.8zM105.2 755.7l-3.5 9.1l-7 -0.9l-3.5 -10l3.5 -9.1l7 0.9zM123.8 -7.3l-3.5 10l-7.1 1l-3.5 -9.1l3.5 -10l7.1 -1zM123.8 22.6l-3.5 10l-7.1 0.9l-3.5 -9.1l3.5 -10l7.1 -0.9zM123.8 52.6l-3.6 9.9l-7 0.8l-3.5 -9.1l3.5 -10l7.1 -0.8zM123.8 82.5l-3.6 10l-7 0.7l-3.6 -9.2l3.6 -9.9l7 -0.8zM123.8 112.5l-3.6 9.9l-7.1 0.6l-3.5 -9.2l3.6 -9.9l7 -0.7zM123.8 142.4l-3.6 9.9l-7.1 0.6l-3.5 -9.3l3.5 -9.8l7.1 -0.6zM123.7 172.4l-3.5 9.8l-7.1 0.5l-3.5 -9.3l3.5 -9.8l7.1 -0.5zM123.5 743l-3.6 9.2l-7.1 -0.9l-3.5 -10l3.6 -9.2l7 0.9zM123.5 773.1l-3.6 9.2l-7.1 -1l-3.5 -10.1l3.5 -9.1l7.1 0.9zM142.3 5.2l-3.6 10.1l-7.1 1l-3.6 -9.2l3.6 -10.1l7.1 -0.9zM142.3 35.4l-3.6 10l-7.2 0.9l-3.5 -9.2l3.6 -10l7.1 -0.9zM142.3 65.5l-3.6 10l-7.2 0.8l-3.5 -9.2l3.5 -10l7.2 -0.8zM142.3 95.7l-3.6 10l-7.2 0.6l-3.5 -9.2l3.5 -10l7.2 -0.7zM142.3 125.8l-3.6 10l-7.2 0.6l-3.6 -9.3l3.6 -9.9l7.2 -0.7zM142.3 156l-3.6 9.9l-7.2 0.5l-3.6 -9.3l3.6 -9.9l7.2 -0.6zM142.3 186.1l-3.7 9.9l-7.1 0.5l-3.6 -9.4l3.6 -9.9l7.2 -0.5zM142 730.2l-3.6 9.2l-7.1 -0.9l-3.6 -10l3.6 -9.3l7.1 0.9zM142 760.4l-3.6 9.3l-7.2 -1l-3.5 -10.1l3.6 -9.2l7.1 0.9zM161 18l-3.6 10.1l-7.3 0.9l-3.6 -9.2l3.7 -10.1l7.2 -1zM161 48.3l-3.6 10.1l-7.3 0.8l-3.6 -9.2l3.6 -10.1l7.3 -0.9zM161 78.6l-3.6 10.1l-7.3 0.7l-3.6 -9.2l3.6 -10.1l7.3 -0.8zM161 109l-3.6 10l-7.3 0.7l-3.6 -9.4l3.6 -10l7.3 -0.7zM161 139.3l-3.6 10l-7.3 0.6l-3.6 -9.4l3.6 -9.9l7.3 -0.7zM161 169.7l-3.6 9.9l-7.3 0.6l-3.6 -9.5l3.6 -9.9l7.3 -0.6zM160.8 717.1l-3.6 9.4l-7.3 -0.9l-3.6 -10.1l3.6 -9.3l7.3 0.8zM160.8 747.6l-3.6 9.3l-7.3 -0.9l-3.6 -10.2l3.6 -9.3l7.3 0.9zM160.8 778.1l-3.6 9.2l-7.3 -1l-3.6 -10.2l3.6 -9.2l7.3 1zM180 0.4l-3.7 10.2l-7.3 0.9l-3.7 -9.2l3.7 -10.2l7.3 -1zM180 30.9l-3.7 10.2l-7.3 0.8l-3.7 -9.3l3.7 -10.1l7.3 -0.9zM180 61.4l-3.7 10.2l-7.3 0.7l-3.7 -9.3l3.7 -10.1l7.3 -0.8zM180 91.9l-3.7 10.2l-7.3 0.7l-3.7 -9.4l3.7 -10.1l7.3 -0.8zM180 122.5l-3.7 10.1l-7.3 0.6l-3.7 -9.4l3.7 -10.1l7.3 -0.7zM180 153l-3.7 10.1l-7.4 0.5l-3.6 -9.4l3.7 -10.1l7.3 -0.6zM180 183.6l-3.7 10l-7.4 0.5l-3.6 -9.5l3.6 -10l7.4 -0.5zM179.9 734.6l-3.7 9.4l-7.4 -0.9l-3.7 -10.2l3.7 -9.4l7.4 0.9zM179.8 765.3l-3.7 9.3l-7.3 -1l-3.7 -10.2l3.7 -9.3l7.3 0.9zM199.2 13.2l-3.7 10.3l-7.4 0.9l-3.7 -9.3l3.7 -10.3l7.4 -0.9zM199.2 43.9l-3.7 10.3l-7.4 0.8l-3.7 -9.4l3.7 -10.2l7.4 -0.8zM199.2 74.7l-3.7 10.2l-7.4 0.7l-3.8 -9.4l3.8 -10.2l7.4 -0.8zM199.2 105.4l-3.7 10.2l-7.5 0.7l-3.7 -9.5l3.8 -10.1l7.4 -0.8zM199.2 136.1l-3.7 10.2l-7.5 0.6l-3.7 -9.5l3.7 -10.1l7.5 -0.7zM199.2 166.9l-3.7 10.1l-7.5 0.5l-3.7 -9.5l3.7 -10.1l7.5 -0.6zM199.2 197.6l-3.7 10.1l-7.5 0.4l-3.7 -9.5l3.7 -10.1l7.5 -0.5zM199.1 721.4l-3.7 9.5l-7.5 -0.9l-3.7 -10.2l3.7 -9.5l7.5 0.9zM199.1 752.3l-3.7 9.4l-7.5 -0.9l-3.7 -10.3l3.7 -9.4l7.5 0.9zM218.7 -4.7l-3.8 10.4l-7.5 1l-3.8 -9.4l3.8 -10.3l7.5 -1zM218.7 26.3l-3.8 10.3l-7.5 0.9l-3.8 -9.4l3.8 -10.3l7.5 -1zM218.7 57.2l-3.8 10.3l-7.5 0.8l-3.8 -9.5l3.8 -10.2l7.5 -0.9zM218.7 88.1l-3.8 10.3l-7.5 0.7l-3.8 -9.5l3.8 -10.2l7.5 -0.8zM218.7 119l-3.8 10.3l-7.5 0.6l-3.8 -9.5l3.8 -10.2l7.5 -0.7zM218.7 150l-3.8 10.2l-7.5 0.5l-3.8 -9.5l3.8 -10.2l7.5 -0.6zM218.7 180.9l-3.8 10.2l-7.5 0.5l-3.8 -9.6l3.8 -10.2l7.5 -0.5zM218.6 739.2l-3.8 9.5l-7.5 -0.9l-3.8 -10.4l3.8 -9.5l7.6 0.9zM218.6 770.3l-3.8 9.4l-7.5 -1l-3.8 -10.4l3.8 -9.4l7.5 0.9zM238.5 8.3l-3.9 10.5l-7.6 0.9l-3.8 -9.5l3.8 -10.3l7.6 -1zM238.5 39.5l-3.9 10.4l-7.6 0.8l-3.8 -9.5l3.8 -10.3l7.6 -0.9zM238.4 70.6l-3.8 10.3l-7.6 0.8l-3.8 -9.5l3.8 -10.3l7.6 -0.9zM238.4 101.7l-3.8 10.3l-7.6 0.7l-3.8 -9.5l3.8 -10.3l7.6 -0.8zM238.4 132.9l-3.8 10.2l-7.6 0.7l-3.8 -9.7l3.8 -10.2l7.6 -0.7zM238.4 164l-3.8 10.3l-7.6 0.5l-3.8 -9.7l3.8 -10.2l7.6 -0.6zM238.4 195.2l-3.8 10.2l-7.6 0.4l-3.8 -9.7l3.8 -10.1l7.6 -0.5zM238.4 725.9l-3.8 9.5l-7.7 -0.8l-3.8 -10.4l3.8 -9.6l7.7 0.8zM238.4 757.2l-3.8 9.5l-7.7 -1l-3.8 -10.4l3.8 -9.5l7.7 0.9zM258.4 -9.8l-3.8 10.5l-7.8 1l-3.8 -9.5l3.8 -10.5l7.8 -1zM258.4 21.5l-3.8 10.5l-7.8 0.9l-3.8 -9.5l3.8 -10.5l7.8 -0.9zM258.4 52.9l-3.8 10.4l-7.8 0.8l-3.8 -9.6l3.8 -10.4l7.8 -0.8zM258.4 84.2l-3.8 10.4l-7.8 0.7l-3.8 -9.6l3.8 -10.4l7.8 -0.7zM258.4 115.5l-3.8 10.4l-7.8 0.7l-3.8 -9.7l3.8 -10.3l7.8 -0.7zM258.4 146.9l-3.8 10.3l-7.8 0.6l-3.8 -9.7l3.8 -10.3l7.8 -0.6zM258.4 178.2l-3.8 10.3l-7.8 0.5l-3.8 -9.7l3.8 -10.3l7.8 -0.5zM258.5 743.9l-3.9 9.6l-7.8 -1l-3.9 -10.5l3.9 -9.5l7.8 0.9zM258.5 775.4l-3.9 9.5l-7.8 -1l-3.9 -10.5l3.9 -9.6l7.8 1zM278.7 3.3l-3.9 10.6l-7.9 1l-3.9 -9.6l3.9 -10.6l7.9 -1zM278.7 34.9l-3.9 10.5l-7.9 0.9l-3.9 -9.6l3.9 -10.5l7.9 -1zM278.7 66.4l-3.9 10.5l-7.9 0.8l-3.9 -9.7l3.9 -10.4l7.9 -0.9zM278.7 98l-3.9 10.4l-7.9 0.7l-3.9 -9.7l3.9 -10.4l7.9 -0.8zM278.7 129.5l-3.9 10.4l-7.9 0.7l-3.9 -9.8l3.9 -10.4l7.9 -0.6zM278.7 161.1l-3.9 10.4l-7.9 0.5l-3.9 -9.8l3.9 -10.3l7.9 -0.6zM278.7 192.7l-3.9 10.3l-7.9 0.5l-3.9 -9.9l3.9 -10.3l7.9 -0.5zM278.8 730.4l-4 9.7l-7.8 -0.9l-4 -10.5l4 -9.7l7.8 0.9zM278.8 762.1l-4 9.7l-7.8 -1l-4 -10.6l4 -9.6l7.8 0.9zM299.2 16.7l-4 10.6l-7.9 0.9l-4 -9.7l4 -10.5l7.9 -1zM299.2 48.4l-4 10.6l-7.9 0.8l-4 -9.7l4 -10.5l7.9 -0.9zM299.2 80.2l-3.9 10.5l-8 0.8l-4 -9.8l4 -10.5l7.9 -0.8zM299.2 111.9l-3.9 10.5l-8 0.7l-4 -9.8l4 -10.4l8 -0.8zM299.3 143.7l-4 10.5l-8 0.6l-4 -9.9l4 -10.4l8 -0.6zM299.3 175.5l-4 10.4l-8 0.5l-4 -9.8l4 -10.4l8 -0.6zM299.4 716.8l-4 9.8l-8 -0.9l-4 -10.6l4 -9.8l7.9 0.9zM299.4 748.7l-4 9.7l-8 -0.9l-4 -10.7l4 -9.7l8 0.9zM320 -1.8l-4 10.7l-8.1 1l-4 -9.7l4 -10.7l8.1 -1zM320 30.1l-4 10.7l-8.1 0.9l-4 -9.7l4 -10.7l8.1 -0.9zM320 62.1l-4 10.7l-8.1 0.8l-4 -9.8l4 -10.6l8.1 -0.9zM320.1 94.1l-4.1 10.6l-8 0.7l-4.1 -9.8l4 -10.6l8.1 -0.7zM320.1 126.1l-4.1 10.5l-8 0.7l-4.1 -9.9l4.1 -10.5l8 -0.7zM320.1 158.1l-4.1 10.5l-8 0.5l-4.1 -9.9l4.1 -10.4l8 -0.7zM320.1 190.1l-4.1 10.4l-8 0.5l-4 -9.9l4 -10.5l8 -0.5zM320.2 735.1l-4 9.8l-8.1 -0.9l-4 -10.7l4 -9.8l8.1 0.9zM320.2 767.2l-4 9.8l-8.1 -1l-4 -10.8l4 -9.7l8.1 1zM341.1 11.7l-4.1 10.7l-8.1 1l-4.1 -9.8l4.1 -10.7l8.1 -1zM341.1 43.8l-4.1 10.8l-8.1 0.8l-4.1 -9.8l4.1 -10.7l8.1 -0.9zM341.1 76l-4.1 10.7l-8.1 0.8l-4.1 -9.9l4.1 -10.6l8.1 -0.9zM341.2 108.2l-4.1 10.7l-8.2 0.7l-4.1 -9.9l4.1 -10.7l8.2 -0.7zM341.2 140.4l-4.1 10.6l-8.2 0.6l-4.1 -9.9l4.1 -10.6l8.2 -0.7zM341.2 172.6l-4.1 10.6l-8.2 0.5l-4.1 -10l4.1 -10.5l8.2 -0.6zM341.4 721.3l-4.2 9.9l-8.1 -0.9l-4.1 -10.8l4.1 -9.8l8.1 0.8zM341.4 753.7l-4.1 9.8l-8.2 -1l-4.1 -10.8l4.1 -9.8l8.1 0.9zM362.5 -7.1l-4.2 10.9l-8.2 1l-4.2 -9.8l4.2 -10.9l8.2 -1zM362.5 25.3l-4.1 10.8l-8.3 0.9l-4.2 -9.8l4.2 -10.8l8.2 -1zM362.5 57.7l-4.1 10.8l-8.3 0.8l-4.1 -9.9l4.1 -10.7l8.3 -0.9zM362.5 90.1l-4.1 10.8l-8.3 0.7l-4.1 -9.9l4.1 -10.8l8.3 -0.8zM362.5 122.5l-4.1 10.7l-8.3 0.7l-4.1 -10l4.1 -10.7l8.3 -0.7zM362.6 155l-4.2 10.6l-8.3 0.6l-4.1 -10l4.1 -10.7l8.3 -0.6zM362.6 187.4l-4.2 10.6l-8.3 0.5l-4.1 -10.1l4.1 -10.6l8.3 -0.5zM362.8 739.9l-4.2 9.9l-8.3 -0.9l-4.1 -10.9l4.1 -9.9l8.3 0.9zM362.8 772.5l-4.2 9.9l-8.3 -1.1l-4.1 -10.9l4.1 -9.9l8.3 1zM384.2 6.5l-4.2 10.9l-8.4 1l-4.2 -9.9l4.2 -10.9l8.4 -1zM384.2 39.1l-4.2 10.9l-8.4 0.9l-4.2 -9.9l4.2 -10.9l8.4 -0.9zM384.2 71.8l-4.2 10.8l-8.4 0.8l-4.2 -10l4.2 -10.8l8.4 -0.8zM384.2 104.4l-4.2 10.8l-8.4 0.7l-4.2 -10l4.2 -10.8l8.4 -0.8zM384.2 137.1l-4.2 10.7l-8.4 0.6l-4.2 -10l4.2 -10.8l8.4 -0.7zM384.2 169.7l-4.2 10.7l-8.4 0.6l-4.1 -10.2l4.1 -10.6l8.4 -0.6zM384.5 726l-4.2 10l-8.4 -1l-4.2 -10.9l4.2 -10l8.4 0.9zM384.5 758.7l-4.2 10l-8.4 -1l-4.2 -10.9l4.2 -10l8.4 1zM406.2 20.3l-4.3 11l-8.5 0.9l-4.3 -9.9l4.3 -11l8.5 -1zM406.2 53.2l-4.3 10.9l-8.5 0.9l-4.3 -10.1l4.3 -10.9l8.5 -0.9zM406.2 86l-4.3 10.9l-8.5 0.8l-4.2 -10.1l4.2 -10.8l8.5 -0.9zM406.2 118.9l-4.3 10.9l-8.5 0.6l-4.2 -10.1l4.2 -10.8l8.5 -0.8zM406.2 151.8l-4.2 10.8l-8.6 0.6l-4.2 -10.2l4.2 -10.8l8.5 -0.6zM406.2 184.7l-4.2 10.7l-8.5 0.5l-4.3 -10.2l4.2 -10.7l8.6 -0.6zM406.3 217.5l-4.3 10.8l-8.5 0.4l-4.3 -10.3l4.3 -10.7l8.5 -0.4zM406.3 250.4l-4.3 10.7l-8.5 0.4l-4.3 -10.3l4.3 -10.7l8.5 -0.4zM406.3 283.4l-4.3 10.6l-8.5 0.2l-4.2 -10.3l4.2 -10.6l8.5 -0.3zM406.3 316.3l-4.3 10.6l-8.5 0.1l-4.2 -10.4l4.2 -10.6l8.5 -0.2zM406.3 349.2l-4.2 10.6l-8.6 0l-4.2 -10.4l4.2 -10.6l8.5 -0.1zM406.3 382.1l-4.2 10.5l-8.5 0l-4.3 -10.5l4.2 -10.5l8.6 0zM406.4 415l-4.3 10.5l-8.5 -0.1l-4.3 -10.5l4.3 -10.5l8.5 0.1zM406.4 448l-4.3 10.4l-8.5 -0.2l-4.3 -10.5l4.3 -10.5l8.5 0.2zM406.4 480.9l-4.3 10.4l-8.5 -0.2l-4.2 -10.7l4.2 -10.3l8.5 0.2zM406.4 513.9l-4.3 10.4l-8.5 -0.4l-4.2 -10.7l4.2 -10.3l8.5 0.3zM406.4 546.9l-4.2 10.3l-8.6 -0.5l-4.2 -10.7l4.2 -10.3l8.6 0.4zM406.5 579.8l-4.3 10.3l-8.5 -0.5l-4.3 -10.8l4.2 -10.2l8.6 0.4zM406.5 612.8l-4.3 10.3l-8.5 -0.7l-4.3 -10.8l4.3 -10.2l8.5 0.6zM406.5 645.8l-4.3 10.2l-8.5 -0.7l-4.3 -10.9l4.3 -10.1l8.5 0.6zM406.5 678.8l-4.3 10.2l-8.5 -0.8l-4.2 -11l4.2 -10.1l8.5 0.8zM406.5 711.8l-4.2 10.1l-8.6 -0.9l-4.2 -10.9l4.2 -10.1l8.5 0.8zM406.5 744.8l-4.2 10.1l-8.6 -1l-4.2 -11l4.2 -10l8.6 0.9zM406.6 777.8l-4.3 10.1l-8.5 -1.1l-4.3 -11.1l4.2 -10l8.6 1.1zM428.4 1.2l-4.3 11.1l-8.6 1l-4.3 -10l4.3 -11.1l8.6 -1zM428.4 34.3l-4.3 11.1l-8.6 0.9l-4.3 -10.1l4.3 -11l8.6 -1zM428.5 67.4l-4.4 11l-8.6 0.8l-4.3 -10.1l4.3 -11l8.6 -0.9zM428.5 100.5l-4.3 10.9l-8.7 0.8l-4.3 -10.2l4.3 -10.9l8.6 -0.8zM428.5 133.6l-4.3 10.9l-8.7 0.7l-4.3 -10.3l4.3 -10.8l8.7 -0.7zM428.5 166.7l-4.3 10.9l-8.6 0.5l-4.3 -10.2l4.3 -10.9l8.6 -0.6zM428.5 199.8l-4.3 10.9l-8.6 0.4l-4.3 -10.3l4.3 -10.8l8.6 -0.5zM428.6 232.9l-4.4 10.8l-8.6 0.4l-4.3 -10.3l4.3 -10.8l8.6 -0.4zM428.6 266.1l-4.3 10.7l-8.7 0.3l-4.3 -10.4l4.3 -10.7l8.6 -0.4zM428.6 299.2l-4.3 10.7l-8.7 0.2l-4.3 -10.4l4.3 -10.7l8.7 -0.3zM428.6 332.4l-4.3 10.6l-8.6 0.1l-4.3 -10.5l4.2 -10.6l8.7 -0.2zM428.6 365.5l-4.3 10.6l-8.6 0.1l-4.3 -10.6l4.3 -10.6l8.6 -0.1zM428.7 398.7l-4.4 10.6l-8.6 -0.1l-4.3 -10.6l4.3 -10.5l8.6 0zM428.7 431.8l-4.3 10.6l-8.7 -0.2l-4.3 -10.6l4.3 -10.5l8.6 0.1zM428.7 465l-4.3 10.5l-8.7 -0.2l-4.3 -10.7l4.3 -10.5l8.7 0.2zM428.7 498.2l-4.3 10.5l-8.6 -0.4l-4.4 -10.7l4.3 -10.4l8.7 0.3zM428.8 531.4l-4.4 10.4l-8.6 -0.4l-4.3 -10.8l4.3 -10.4l8.6 0.4zM428.8 564.6l-4.4 10.4l-8.6 -0.5l-4.3 -10.9l4.3 -10.3l8.6 0.5zM428.8 597.8l-4.3 10.3l-8.7 -0.6l-4.3 -10.8l4.3 -10.3l8.6 0.5zM428.8 631l-4.3 10.3l-8.7 -0.7l-4.3 -10.9l4.3 -10.3l8.7 0.7zM428.8 664.3l-4.3 10.2l-8.6 -0.8l-4.4 -10.9l4.3 -10.3l8.7 0.8zM428.9 697.5l-4.4 10.2l-8.6 -0.9l-4.3 -11l4.3 -10.2l8.6 0.8zM428.9 730.7l-4.4 10.2l-8.6 -1l-4.3 -11l4.3 -10.2l8.6 0.9zM428.9 764l-4.3 10.1l-8.7 -1.1l-4.3 -11.1l4.3 -10.1l8.6 1zM451 15.2l-4.4 11.1l-8.7 1l-4.4 -10.1l4.4 -11.1l8.7 -1.1zM451 48.5l-4.3 11.1l-8.8 0.9l-4.4 -10.2l4.4 -11l8.7 -1zM451.1 81.8l-4.4 11.1l-8.8 0.8l-4.3 -10.2l4.3 -11.1l8.8 -0.8zM451.1 115.2l-4.4 11l-8.7 0.7l-4.4 -10.3l4.3 -11l8.8 -0.7zM451.1 148.5l-4.4 11l-8.7 0.6l-4.4 -10.3l4.4 -11l8.7 -0.6zM451.1 181.8l-4.3 11l-8.8 0.5l-4.4 -10.4l4.4 -10.9l8.7 -0.5zM451.2 215.2l-4.4 10.9l-8.8 0.4l-4.3 -10.4l4.3 -10.8l8.8 -0.5zM451.2 248.6l-4.4 10.8l-8.8 0.3l-4.3 -10.4l4.3 -10.8l8.8 -0.4zM451.2 281.9l-4.4 10.8l-8.7 0.3l-4.4 -10.5l4.3 -10.8l8.8 -0.3zM451.2 315.3l-4.4 10.8l-8.7 0.1l-4.4 -10.5l4.4 -10.8l8.7 -0.2zM451.3 348.7l-4.4 10.7l-8.8 0.1l-4.4 -10.6l4.4 -10.7l8.8 -0.1zM451.3 382.1l-4.4 10.7l-8.8 -0.1l-4.3 -10.6l4.3 -10.7l8.8 0zM451.3 415.5l-4.4 10.6l-8.7 -0.1l-4.4 -10.7l4.3 -10.6l8.8 0.1zM451.3 448.9l-4.4 10.6l-8.7 -0.2l-4.4 -10.8l4.4 -10.5l8.7 0.1zM451.4 482.3l-4.4 10.5l-8.8 -0.2l-4.4 -10.8l4.4 -10.5l8.7 0.2zM451.4 515.7l-4.4 10.5l-8.8 -0.4l-4.4 -10.8l4.4 -10.5l8.8 0.4zM451.4 549.2l-4.4 10.4l-8.8 -0.5l-4.3 -10.8l4.3 -10.5l8.8 0.4zM451.4 582.6l-4.4 10.4l-8.7 -0.6l-4.4 -10.9l4.3 -10.4l8.8 0.5zM451.4 616l-4.3 10.4l-8.8 -0.6l-4.4 -11l4.4 -10.4l8.7 0.6zM451.5 649.5l-4.4 10.3l-8.8 -0.7l-4.4 -11l4.4 -10.3l8.8 0.6zM451.5 683l-4.4 10.2l-8.8 -0.8l-4.3 -11.1l4.3 -10.2l8.8 0.8zM451.5 716.4l-4.4 10.3l-8.8 -1l-4.3 -11.1l4.3 -10.2l8.8 0.9zM451.5 749.9l-4.4 10.2l-8.7 -1l-4.4 -11.2l4.4 -10.2l8.7 1zM473.9 -4.2l-4.4 11.3l-8.9 1l-4.4 -10.2l4.4 -11.2l8.9 -1.1zM473.9 29.3l-4.4 11.3l-8.9 0.9l-4.4 -10.2l4.4 -11.2l8.9 -1zM474 62.9l-4.5 11.2l-8.8 0.8l-4.5 -10.2l4.4 -11.2l8.9 -0.9zM474 96.5l-4.4 11.1l-8.9 0.7l-4.5 -10.3l4.5 -11.1l8.8 -0.8zM474 130l-4.4 11.1l-8.9 0.7l-4.4 -10.4l4.4 -11l8.9 -0.7zM474.1 163.6l-4.5 11l-8.9 0.6l-4.4 -10.4l4.4 -11l8.9 -0.6zM474.1 197.2l-4.5 11l-8.8 0.5l-4.5 -10.5l4.4 -10.9l8.9 -0.6zM474.1 230.8l-4.4 10.9l-8.9 0.4l-4.5 -10.5l4.5 -10.9l8.8 -0.4zM474.1 264.4l-4.4 10.9l-8.9 0.3l-4.4 -10.6l4.4 -10.8l8.9 -0.4zM474.2 298l-4.5 10.9l-8.9 0.2l-4.4 -10.6l4.4 -10.9l8.9 -0.2zM474.2 331.6l-4.5 10.8l-8.9 0.1l-4.4 -10.6l4.4 -10.8l8.9 -0.2zM474.2 365.2l-4.4 10.8l-8.9 0l-4.5 -10.7l4.5 -10.7l8.8 -0.1zM474.2 398.9l-4.4 10.7l-8.9 -0.1l-4.4 -10.7l4.4 -10.7l8.9 0zM474.3 432.5l-4.5 10.7l-8.9 -0.2l-4.4 -10.7l4.4 -10.7l8.9 0.1zM474.3 466.2l-4.5 10.6l-8.9 -0.2l-4.4 -10.9l4.4 -10.6l8.9 0.2zM474.3 499.8l-4.4 10.6l-8.9 -0.3l-4.5 -10.9l4.5 -10.6l8.8 0.3zM474.3 533.5l-4.4 10.5l-8.9 -0.4l-4.4 -10.9l4.4 -10.6l8.9 0.4zM474.4 567.2l-4.5 10.5l-8.9 -0.6l-4.4 -10.9l4.4 -10.5l8.9 0.4zM474.4 600.8l-4.5 10.5l-8.9 -0.6l-4.4 -11l4.4 -10.5l8.9 0.6zM474.4 634.5l-4.4 10.4l-8.9 -0.7l-4.5 -11l4.5 -10.4l8.9 0.6zM474.5 668.2l-4.5 10.4l-8.9 -0.8l-4.4 -11.1l4.4 -10.4l8.9 0.8zM474.5 701.9l-4.5 10.4l-8.9 -0.9l-4.4 -11.2l4.4 -10.3l8.9 0.8zM474.5 735.6l-4.5 10.3l-8.9 -1l-4.4 -11.2l4.4 -10.2l8.9 0.9zM474.5 769.4l-4.4 10.2l-8.9 -1.1l-4.5 -11.2l4.5 -10.3l8.9 1zM497.2 9.9l-4.5 11.3l-9 1l-4.5 -10.2l4.4 -11.3l9 -1.1zM497.2 43.7l-4.5 11.3l-9 0.9l-4.5 -10.3l4.5 -11.3l9 -0.9zM497.2 77.5l-4.5 11.2l-9 0.8l-4.5 -10.3l4.5 -11.2l9 -0.9zM497.3 111.3l-4.5 11.2l-9.1 0.7l-4.4 -10.4l4.4 -11.1l9 -0.8zM497.3 145.1l-4.5 11.2l-9 0.6l-4.5 -10.5l4.5 -11.1l9 -0.7zM497.3 178.9l-4.5 11.1l-9 0.6l-4.5 -10.5l4.5 -11.1l9 -0.6zM497.4 212.8l-4.6 11l-9 0.5l-4.5 -10.6l4.5 -11l9 -0.5zM497.4 246.6l-4.5 11l-9 0.4l-4.5 -10.6l4.4 -11l9 -0.4zM497.4 280.5l-4.5 10.9l-9 0.3l-4.5 -10.7l4.5 -10.9l9 -0.3zM497.4 314.3l-4.5 10.9l-9 0.2l-4.5 -10.7l4.5 -10.9l9 -0.2zM497.5 348.2l-4.5 10.8l-9.1 0.1l-4.5 -10.7l4.5 -10.9l9 -0.1zM497.5 382l-4.5 10.9l-9 -0.1l-4.5 -10.8l4.5 -10.7l9 -0.1zM497.5 415.9l-4.5 10.8l-9 -0.1l-4.5 -10.9l4.5 -10.7l9 0zM497.6 449.8l-4.6 10.7l-9 -0.2l-4.5 -10.9l4.5 -10.7l9 0.2zM497.6 483.7l-4.5 10.7l-9 -0.3l-4.5 -11l4.4 -10.6l9 0.2zM497.6 517.6l-4.5 10.6l-9 -0.4l-4.5 -10.9l4.5 -10.7l9 0.4zM497.6 551.5l-4.5 10.6l-9 -0.5l-4.5 -11l4.5 -10.6l9 0.4zM497.7 585.4l-4.5 10.6l-9.1 -0.6l-4.5 -11.1l4.5 -10.5l9 0.5zM497.7 619.3l-4.5 10.6l-9 -0.7l-4.5 -11.1l4.4 -10.5l9.1 0.6zM497.7 653.3l-4.5 10.4l-9 -0.7l-4.5 -11.2l4.5 -10.5l9 0.8zM497.8 687.2l-4.6 10.4l-9 -0.8l-4.5 -11.2l4.5 -10.5l9 0.8zM497.8 721.2l-4.5 10.3l-9.1 -0.9l-4.5 -11.3l4.5 -10.3l9.1 0.8zM497.8 755.1l-4.5 10.4l-9 -1.1l-4.5 -11.3l4.5 -10.3l9 1zM520.7 -9.8l-4.5 11.4l-9.2 1.1l-4.5 -10.3l4.5 -11.4l9.1 -1.1zM520.8 24.2l-4.6 11.4l-9.1 1l-4.6 -10.4l4.5 -11.3l9.2 -1zM520.8 58.3l-4.6 11.3l-9.1 0.9l-4.6 -10.4l4.6 -11.3l9.1 -0.9zM520.8 92.3l-4.5 11.3l-9.2 0.8l-4.5 -10.5l4.5 -11.2l9.1 -0.9zM520.9 126.4l-4.6 11.2l-9.1 0.7l-4.6 -10.5l4.5 -11.2l9.2 -0.8zM520.9 160.4l-4.6 11.2l-9.1 0.6l-4.6 -10.5l4.6 -11.2l9.1 -0.6zM520.9 194.5l-4.6 11.1l-9.1 0.5l-4.5 -10.6l4.5 -11.1l9.1 -0.5zM521 228.6l-4.6 11.1l-9.2 0.4l-4.5 -10.7l4.5 -11l9.2 -0.5zM521 262.7l-4.6 11l-9.1 0.3l-4.6 -10.7l4.6 -11l9.1 -0.4zM521 296.7l-4.6 11.1l-9.1 0.2l-4.6 -10.8l4.6 -11l9.1 -0.2zM521.1 330.8l-4.6 11l-9.2 0.1l-4.5 -10.8l4.5 -10.9l9.2 -0.2zM521.1 365l-4.6 10.9l-9.1 0l-4.6 -10.8l4.5 -10.9l9.2 -0.1zM521.1 399.1l-4.6 10.9l-9.1 -0.1l-4.6 -10.9l4.6 -10.9l9.1 0zM521.2 433.2l-4.6 10.8l-9.2 -0.1l-4.5 -11l4.5 -10.8l9.1 0.1zM521.2 467.3l-4.6 10.8l-9.1 -0.2l-4.6 -11l4.5 -10.8l9.2 0.2zM521.2 501.5l-4.6 10.7l-9.1 -0.3l-4.6 -11.1l4.6 -10.7l9.1 0.3zM521.2 535.6l-4.5 10.7l-9.2 -0.4l-4.5 -11.1l4.5 -10.7l9.1 0.4zM521.3 569.8l-4.6 10.6l-9.2 -0.5l-4.5 -11.1l4.5 -10.7l9.2 0.5zM521.3 603.9l-4.6 10.7l-9.1 -0.7l-4.6 -11.2l4.6 -10.6l9.1 0.6zM521.3 638.1l-4.5 10.6l-9.2 -0.7l-4.6 -11.3l4.6 -10.5l9.1 0.6zM521.4 672.3l-4.6 10.5l-9.2 -0.8l-4.5 -11.3l4.5 -10.5l9.2 0.8zM521.4 706.5l-4.6 10.5l-9.1 -1l-4.6 -11.3l4.6 -10.4l9.1 0.8zM521.4 740.7l-4.5 10.4l-9.2 -1l-4.6 -11.4l4.6 -10.4l9.1 1zM521.5 774.9l-4.6 10.4l-9.2 -1.1l-4.5 -11.5l4.5 -10.3l9.2 1zM544.7 4.5l-4.7 11.5l-9.2 1l-4.7 -10.4l4.6 -11.4l9.3 -1.1zM544.7 38.8l-4.6 11.4l-9.3 0.9l-4.6 -10.4l4.6 -11.4l9.2 -1zM544.7 73.1l-4.6 11.3l-9.3 0.9l-4.6 -10.5l4.6 -11.4l9.3 -0.9zM544.8 107.4l-4.7 11.3l-9.2 0.7l-4.7 -10.5l4.6 -11.3l9.3 -0.8zM544.8 141.7l-4.6 11.3l-9.3 0.6l-4.6 -10.6l4.6 -11.3l9.2 -0.7zM544.8 176l-4.6 11.2l-9.3 0.6l-4.6 -10.7l4.6 -11.2l9.3 -0.6zM544.9 210.3l-4.7 11.2l-9.2 0.4l-4.7 -10.6l4.6 -11.2l9.3 -0.5zM544.9 244.6l-4.6 11.2l-9.3 0.3l-4.6 -10.7l4.6 -11.1l9.2 -0.5zM544.9 278.9l-4.6 11.2l-9.3 0.2l-4.6 -10.8l4.6 -11.1l9.3 -0.3zM545 313.3l-4.7 11.1l-9.2 0.1l-4.7 -10.8l4.6 -11.1l9.3 -0.2zM545 347.6l-4.6 11.1l-9.3 0l-4.6 -10.9l4.6 -11l9.2 -0.1zM545.1 382l-4.7 11l-9.3 0l-4.6 -11l4.6 -10.9l9.3 -0.1zM545.1 416.4l-4.7 10.9l-9.2 -0.1l-4.7 -11l4.6 -10.9l9.3 0zM545.1 450.7l-4.6 10.9l-9.3 -0.2l-4.6 -11l4.6 -10.9l9.3 0.2zM545.2 485.1l-4.7 10.9l-9.3 -0.3l-4.6 -11.1l4.6 -10.9l9.3 0.3zM545.2 519.5l-4.7 10.8l-9.2 -0.4l-4.7 -11.1l4.6 -10.8l9.3 0.3zM545.2 553.9l-4.6 10.8l-9.3 -0.5l-4.6 -11.2l4.6 -10.8l9.3 0.5zM545.3 588.3l-4.7 10.7l-9.3 -0.6l-4.6 -11.2l4.6 -10.7l9.3 0.5zM545.3 622.7l-4.7 10.7l-9.2 -0.7l-4.7 -11.3l4.6 -10.6l9.3 0.6zM545.3 657.2l-4.6 10.6l-9.3 -0.8l-4.6 -11.4l4.6 -10.5l9.3 0.7zM545.4 691.6l-4.7 10.6l-9.3 -0.9l-4.6 -11.4l4.6 -10.6l9.3 0.9zM545.4 726l-4.6 10.6l-9.3 -1l-4.7 -11.5l4.6 -10.5l9.3 1zM545.4 760.5l-4.6 10.5l-9.3 -1.1l-4.6 -11.5l4.6 -10.5l9.3 1.1zM568.9 19l-4.7 11.5l-9.4 1l-4.7 -10.5l4.7 -11.5l9.4 -1zM569 53.5l-4.7 11.5l-9.4 0.9l-4.7 -10.5l4.7 -11.5l9.3 -1zM569 88.1l-4.7 11.4l-9.4 0.8l-4.7 -10.6l4.7 -11.4l9.4 -0.9zM569.1 122.6l-4.8 11.4l-9.4 0.7l-4.6 -10.6l4.6 -11.4l9.4 -0.8zM569.1 157.2l-4.7 11.3l-9.4 0.6l-4.7 -10.7l4.7 -11.3l9.4 -0.7zM569.1 191.7l-4.7 11.3l-9.4 0.5l-4.7 -10.7l4.7 -11.3l9.4 -0.6zM569.2 226.3l-4.7 11.3l-9.4 0.4l-4.7 -10.8l4.6 -11.3l9.4 -0.4zM569.2 260.9l-4.7 11.2l-9.4 0.3l-4.7 -10.8l4.7 -11.2l9.4 -0.4zM569.3 295.5l-4.8 11.1l-9.4 0.3l-4.7 -10.9l4.7 -11.2l9.4 -0.3zM569.3 330.1l-4.7 11.1l-9.4 0.1l-4.7 -10.9l4.6 -11.1l9.5 -0.2zM569.3 364.7l-4.7 11.1l-9.4 0l-4.7 -11l4.7 -11.1l9.4 -0.1zM569.4 399.3l-4.7 11l-9.5 -0.1l-4.7 -11l4.7 -11l9.4 0zM569.4 433.9l-4.7 11l-9.4 -0.2l-4.7 -11.1l4.7 -10.9l9.4 0.1zM569.4 468.5l-4.7 11l-9.4 -0.3l-4.7 -11.1l4.7 -11l9.4 0.2zM569.5 503.2l-4.7 10.9l-9.4 -0.4l-4.7 -11.2l4.6 -10.9l9.4 0.3zM569.5 537.8l-4.7 10.9l-9.4 -0.5l-4.7 -11.2l4.7 -10.9l9.4 0.4zM569.6 572.5l-4.8 10.8l-9.4 -0.6l-4.7 -11.3l4.7 -10.8l9.4 0.5zM569.6 607.1l-4.7 10.8l-9.4 -0.7l-4.7 -11.3l4.6 -10.7l9.5 0.5zM569.6 641.8l-4.7 10.7l-9.4 -0.7l-4.7 -11.4l4.7 -10.7l9.4 0.7zM569.7 676.5l-4.7 10.7l-9.5 -0.9l-4.7 -11.4l4.7 -10.7l9.4 0.8zM569.7 711.2l-4.7 10.6l-9.4 -0.9l-4.7 -11.6l4.6 -10.6l9.5 0.9zM569.8 745.9l-4.8 10.6l-9.4 -1.1l-4.7 -11.5l4.7 -10.6l9.4 1zM569.8 780.6l-4.7 10.5l-9.5 -1.1l-4.7 -11.6l4.7 -10.5l9.4 1zM593.5 -1.1l-4.7 11.7l-9.6 1l-4.7 -10.5l4.7 -11.6l9.5 -1.2zM593.6 33.7l-4.8 11.6l-9.5 1l-4.8 -10.6l4.7 -11.6l9.6 -1zM593.6 68.5l-4.8 11.5l-9.5 0.9l-4.8 -10.6l4.8 -11.6l9.5 -0.9zM593.7 103.3l-4.8 11.5l-9.5 0.8l-4.8 -10.7l4.7 -11.5l9.6 -0.8zM593.7 138.1l-4.8 11.5l-9.5 0.6l-4.8 -10.7l4.8 -11.5l9.5 -0.7zM593.7 172.9l-4.7 11.4l-9.6 0.6l-4.7 -10.8l4.7 -11.4l9.5 -0.6zM593.8 207.7l-4.8 11.4l-9.5 0.5l-4.8 -10.9l4.7 -11.3l9.6 -0.6zM593.8 242.5l-4.7 11.4l-9.6 0.3l-4.8 -10.9l4.8 -11.3l9.5 -0.4zM593.9 277.4l-4.8 11.3l-9.5 0.2l-4.8 -10.9l4.7 -11.3l9.6 -0.3zM593.9 312.2l-4.8 11.3l-9.5 0.1l-4.8 -11l4.8 -11.2l9.5 -0.2zM594 347.1l-4.8 11.2l-9.6 0.1l-4.7 -11.1l4.7 -11.2l9.6 -0.1zM594 381.9l-4.8 11.2l-9.5 0l-4.8 -11.1l4.7 -11.1l9.6 -0.1zM594 416.8l-4.7 11.1l-9.6 -0.1l-4.8 -11.2l4.8 -11l9.5 0zM594.1 451.7l-4.8 11.1l-9.5 -0.3l-4.8 -11.2l4.7 -11l9.6 0.2zM594.1 486.6l-4.8 11l-9.5 -0.3l-4.8 -11.3l4.8 -11l9.5 0.3zM594.2 521.5l-4.8 10.9l-9.6 -0.4l-4.7 -11.3l4.7 -10.9l9.6 0.3zM594.2 556.4l-4.8 10.9l-9.5 -0.5l-4.8 -11.4l4.7 -10.9l9.6 0.5zM594.3 591.3l-4.8 10.9l-9.6 -0.6l-4.8 -11.5l4.8 -10.8l9.5 0.6zM594.3 626.2l-4.8 10.9l-9.5 -0.8l-4.8 -11.4l4.7 -10.8l9.6 0.6zM594.3 661.2l-4.7 10.7l-9.6 -0.8l-4.8 -11.5l4.8 -10.7l9.5 0.7zM594.4 696.1l-4.8 10.7l-9.6 -0.9l-4.7 -11.6l4.7 -10.6l9.6 0.8zM594.4 731.1l-4.8 10.6l-9.5 -1l-4.8 -11.6l4.7 -10.7l9.6 1zM594.5 766l-4.8 10.6l-9.6 -1.1l-4.8 -11.6l4.8 -10.6l9.5 1zM618.5 13.6l-4.8 11.7l-9.7 1l-4.8 -10.6l4.8 -11.7l9.7 -1.1zM618.6 48.6l-4.9 11.7l-9.6 0.9l-4.9 -10.7l4.8 -11.6l9.7 -1zM618.6 83.7l-4.8 11.6l-9.7 0.8l-4.8 -10.7l4.8 -11.6l9.7 -0.9zM618.7 118.7l-4.9 11.6l-9.6 0.7l-4.9 -10.8l4.8 -11.5l9.7 -0.8zM618.7 153.8l-4.8 11.5l-9.7 0.7l-4.8 -10.9l4.8 -11.5l9.6 -0.7zM618.8 188.9l-4.9 11.5l-9.7 0.5l-4.8 -10.9l4.8 -11.5l9.7 -0.6zM618.8 223.9l-4.8 11.5l-9.7 0.4l-4.9 -10.9l4.9 -11.4l9.6 -0.5zM618.9 259l-4.9 11.4l-9.7 0.4l-4.8 -11l4.8 -11.4l9.7 -0.4zM618.9 294.1l-4.8 11.4l-9.7 0.2l-4.9 -11l4.8 -11.4l9.7 -0.2zM619 329.2l-4.9 11.3l-9.7 0.2l-4.8 -11.1l4.8 -11.3l9.7 -0.2zM619 364.4l-4.9 11.2l-9.6 0l-4.9 -11.1l4.8 -11.2l9.7 -0.1zM619 399.5l-4.8 11.2l-9.7 -0.1l-4.8 -11.2l4.8 -11.2l9.7 0zM619.1 434.6l-4.9 11.2l-9.7 -0.2l-4.8 -11.3l4.8 -11.1l9.7 0.1zM619.1 469.8l-4.8 11.1l-9.7 -0.3l-4.9 -11.3l4.9 -11.1l9.7 0.2zM619.2 504.9l-4.9 11.1l-9.7 -0.4l-4.8 -11.4l4.8 -11l9.7 0.3zM619.2 540.1l-4.8 11l-9.7 -0.5l-4.9 -11.4l4.8 -11l9.7 0.4zM619.3 575.3l-4.9 10.9l-9.7 -0.6l-4.8 -11.4l4.8 -11l9.7 0.5zM619.3 610.4l-4.8 10.9l-9.7 -0.6l-4.9 -11.6l4.8 -10.8l9.7 0.6zM619.4 645.6l-4.9 10.9l-9.7 -0.8l-4.8 -11.6l4.8 -10.8l9.7 0.7zM619.4 680.8l-4.9 10.8l-9.7 -0.8l-4.8 -11.7l4.8 -10.8l9.7 0.8zM619.5 716l-4.9 10.8l-9.7 -1l-4.9 -11.7l4.9 -10.7l9.7 0.9zM619.5 751.2l-4.9 10.8l-9.7 -1.1l-4.8 -11.8l4.8 -10.7l9.7 1.1zM643.9 -6.8l-4.9 11.8l-9.9 1.1l-4.9 -10.7l4.9 -11.8l9.8 -1.1zM643.9 28.5l-4.9 11.8l-9.8 0.9l-4.9 -10.7l4.9 -11.8l9.8 -1zM644 63.8l-4.9 11.7l-9.9 0.9l-4.9 -10.8l4.9 -11.7l9.8 -1zM644 99.1l-4.9 11.7l-9.8 0.8l-4.9 -10.9l4.9 -11.6l9.8 -0.9zM644.1 134.4l-4.9 11.7l-9.9 0.6l-4.9 -10.9l4.9 -11.6l9.8 -0.7zM644.1 169.7l-4.9 11.6l-9.8 0.6l-4.9 -10.9l4.8 -11.6l9.9 -0.6zM644.2 205.1l-5 11.5l-9.8 0.5l-4.9 -11l4.9 -11.5l9.8 -0.6zM644.2 240.4l-4.9 11.5l-9.8 0.4l-4.9 -11l4.8 -11.5l9.9 -0.5zM644.3 275.8l-5 11.4l-9.8 0.3l-4.9 -11.1l4.9 -11.4l9.8 -0.4zM644.3 311.1l-4.9 11.5l-9.8 0.1l-4.9 -11.1l4.8 -11.4l9.9 -0.2zM644.4 346.5l-5 11.4l-9.8 0.1l-4.9 -11.3l4.9 -11.3l9.8 -0.1zM644.4 381.9l-4.9 11.3l-9.8 0l-5 -11.3l4.9 -11.3l9.9 0zM644.5 417.3l-5 11.3l-9.8 -0.2l-4.9 -11.3l4.9 -11.2l9.8 0zM644.5 452.7l-4.9 11.2l-9.9 -0.2l-4.9 -11.4l4.9 -11.2l9.9 0.2zM644.6 488.1l-5 11.2l-9.8 -0.4l-4.9 -11.4l4.9 -11.1l9.8 0.2zM644.6 523.5l-4.9 11.1l-9.9 -0.4l-4.9 -11.5l4.9 -11.1l9.9 0.4zM644.7 559l-5 11l-9.8 -0.5l-4.9 -11.5l4.9 -11.1l9.8 0.5zM644.7 594.4l-4.9 11l-9.9 -0.6l-4.9 -11.6l4.9 -11l9.8 0.6zM644.8 629.8l-5 11l-9.8 -0.7l-4.9 -11.7l4.9 -10.9l9.8 0.7zM644.8 665.3l-4.9 10.9l-9.9 -0.8l-4.9 -11.7l4.9 -10.9l9.8 0.8zM644.9 700.8l-5 10.8l-9.8 -0.9l-4.9 -11.8l4.8 -10.8l9.9 0.9zM644.9 736.2l-4.9 10.9l-9.9 -1.1l-4.9 -11.8l4.9 -10.8l9.8 1zM644.9 771.7l-4.9 10.8l-9.8 -1.2l-4.9 -11.8l4.8 -10.8l9.9 1.1zM669.6 8l-5 11.9l-9.9 1.1l-5 -10.8l4.9 -11.9l10 -1.1zM669.7 43.6l-5 11.8l-10 1l-5 -10.9l5 -11.8l10 -1zM669.7 79.1l-4.9 11.9l-10 0.8l-5 -10.9l4.9 -11.8l10 -0.9zM669.8 114.7l-5 11.8l-10 0.7l-5 -10.9l5 -11.7l10 -0.9zM669.8 150.3l-4.9 11.7l-10 0.7l-5 -11l4.9 -11.7l10 -0.7zM669.9 185.9l-5 11.7l-10 0.5l-5 -11l5 -11.7l10 -0.6zM670 221.5l-5 11.6l-10 0.5l-5 -11.1l4.9 -11.6l10 -0.5zM670 257.1l-5 11.6l-10 0.4l-5 -11.2l5 -11.5l10 -0.4zM670.1 292.8l-5 11.5l-10 0.2l-5 -11.2l4.9 -11.5l10 -0.3zM670.1 328.4l-5 11.5l-10 0.1l-5 -11.3l5 -11.4l10 -0.2zM670.2 364.1l-5 11.4l-10 0l-5 -11.3l4.9 -11.4l10 -0.1zM670.2 399.7l-5 11.4l-10 -0.1l-5 -11.4l5 -11.3l10 0zM670.3 435.4l-5 11.3l-10 -0.2l-5 -11.4l4.9 -11.3l10 0.1zM670.3 471l-5 11.3l-10 -0.3l-5 -11.5l5 -11.2l10 0.2zM670.4 506.7l-5 11.3l-10 -0.4l-5 -11.6l5 -11.2l9.9 0.3zM670.4 542.4l-5 11.2l-10 -0.5l-5 -11.6l5 -11.1l10 0.4zM670.5 578.1l-5 11.1l-10 -0.5l-5 -11.7l5 -11.1l9.9 0.5zM670.5 613.8l-5 11.1l-10 -0.7l-5 -11.7l5 -11.1l10 0.7zM670.6 649.5l-5 11.1l-10 -0.8l-5 -11.8l5 -11l9.9 0.7zM670.6 685.3l-5 10.9l-10 -0.9l-5 -11.8l5 -10.9l10 0.8zM670.7 721l-5 10.9l-10 -1l-5 -11.8l5 -10.9l9.9 0.9zM670.7 756.7l-5 10.9l-10 -1.1l-5 -11.9l5 -10.9l10 1.1zM695.7 -12.8l-5 12.1l-10.1 1.1l-5.1 -10.8l5 -12l10.1 -1.2zM695.8 23.1l-5.1 11.9l-10.1 1.1l-5 -10.9l5 -12l10.1 -1.1zM695.8 58.9l-5 11.9l-10.1 1l-5.1 -11l5 -11.9l10.1 -1zM695.9 94.8l-5.1 11.8l-10.1 0.8l-5 -11l5 -11.8l10.1 -0.9zM696 130.6l-5.1 11.8l-10.1 0.7l-5.1 -11l5 -11.8l10.2 -0.8zM696 166.5l-5.1 11.8l-10.1 0.6l-5 -11.2l5 -11.7l10.1 -0.7zM696.1 202.4l-5.1 11.7l-10.1 0.5l-5.1 -11.2l5 -11.7l10.2 -0.5zM696.1 238.2l-5 11.7l-10.2 0.4l-5 -11.2l5 -11.7l10.1 -0.4zM696.2 274.1l-5.1 11.7l-10.1 0.2l-5.1 -11.2l5 -11.6l10.2 -0.4zM696.2 310l-5 11.6l-10.2 0.2l-5 -11.3l5 -11.6l10.1 -0.2zM696.3 345.9l-5.1 11.6l-10.1 0.1l-5.1 -11.4l5.1 -11.5l10.1 -0.2zM696.3 381.9l-5 11.4l-10.2 0l-5 -11.4l5 -11.5l10.1 0zM696.4 417.8l-5.1 11.4l-10.1 -0.1l-5.1 -11.5l5.1 -11.4l10.1 0.1zM696.5 453.7l-5.1 11.4l-10.1 -0.2l-5.1 -11.6l5 -11.3l10.2 0.1zM696.5 489.7l-5.1 11.3l-10.1 -0.3l-5.1 -11.6l5.1 -11.3l10.1 0.2zM696.6 525.6l-5.1 11.3l-10.1 -0.4l-5.1 -11.7l5 -11.2l10.2 0.3zM696.6 561.6l-5 11.2l-10.2 -0.5l-5.1 -11.7l5.1 -11.2l10.1 0.4zM696.7 597.6l-5.1 11.2l-10.1 -0.7l-5.1 -11.8l5 -11.1l10.2 0.6zM696.7 633.5l-5 11.2l-10.2 -0.8l-5 -11.8l5 -11.1l10.1 0.7zM696.8 669.5l-5.1 11.1l-10.1 -0.8l-5.1 -11.9l5 -11.1l10.2 0.8zM696.9 705.5l-5.1 11.1l-10.2 -1l-5 -11.9l5 -11l10.1 0.9zM696.9 741.5l-5.1 11l-10.1 -1l-5.1 -12l5 -11l10.2 1zM697 777.6l-5.1 10.9l-10.2 -1.2l-5 -12l5 -10.9l10.2 1.1zM722.3 2.3l-5.2 12.1l-10.2 1l-5.2 -10.9l5.1 -12.1l10.3 -1.1zM722.3 38.4l-5.1 12l-10.3 1l-5.1 -11l5.1 -12l10.3 -1.1zM722.4 74.5l-5.1 12l-10.3 0.9l-5.1 -11.1l5 -12l10.3 -0.9zM722.5 110.6l-5.2 12l-10.3 0.7l-5.1 -11.1l5.1 -11.9l10.3 -0.8zM722.5 146.7l-5.1 11.9l-10.3 0.7l-5.1 -11.2l5.1 -11.8l10.2 -0.8zM722.6 182.9l-5.2 11.8l-10.2 0.6l-5.2 -11.2l5.1 -11.8l10.3 -0.7zM722.6 219l-5.1 11.8l-10.3 0.5l-5.1 -11.3l5.1 -11.8l10.3 -0.5zM722.7 255.2l-5.1 11.7l-10.3 0.4l-5.2 -11.3l5.1 -11.8l10.3 -0.4zM722.8 291.4l-5.2 11.7l-10.3 0.2l-5.1 -11.4l5.1 -11.6l10.3 -0.4zM722.8 327.5l-5.1 11.7l-10.3 0.1l-5.2 -11.4l5.2 -11.6l10.2 -0.2zM722.9 363.7l-5.2 11.6l-10.3 0.1l-5.1 -11.5l5.1 -11.6l10.3 -0.1zM722.9 399.9l-5.1 11.6l-10.3 -0.1l-5.1 -11.6l5.1 -11.5l10.3 0zM723 436.1l-5.1 11.5l-10.3 -0.1l-5.2 -11.7l5.1 -11.4l10.3 0.1zM723.1 472.4l-5.2 11.4l-10.3 -0.3l-5.1 -11.7l5.1 -11.4l10.3 0.3zM723.1 508.6l-5.1 11.4l-10.3 -0.4l-5.2 -11.7l5.1 -11.4l10.3 0.3zM723.2 544.8l-5.2 11.4l-10.3 -0.5l-5.1 -11.8l5.1 -11.3l10.3 0.4zM723.2 581.1l-5.1 11.3l-10.3 -0.7l-5.2 -11.8l5.2 -11.2l10.3 0.5zM723.3 617.3l-5.2 11.3l-10.2 -0.8l-5.2 -11.8l5.1 -11.3l10.3 0.7zM723.4 653.6l-5.2 11.2l-10.3 -0.9l-5.1 -11.9l5.1 -11.2l10.3 0.8zM723.4 689.8l-5.1 11.2l-10.3 -0.9l-5.2 -12l5.1 -11.2l10.3 0.9zM723.5 726.1l-5.2 11.1l-10.3 -1l-5.1 -12.1l5.1 -11l10.3 0.9zM723.5 762.4l-5.1 11.1l-10.3 -1.2l-5.2 -12.1l5.1 -11l10.3 1.1zM749.2 17.5l-5.2 12.2l-10.4 1l-5.2 -11l5.2 -12.1l10.4 -1.2zM749.3 53.9l-5.2 12.1l-10.4 1l-5.3 -11.1l5.2 -12.1l10.5 -1zM749.4 90.3l-5.2 12.1l-10.5 0.8l-5.2 -11.2l5.2 -12l10.4 -0.9zM749.4 126.7l-5.2 12l-10.4 0.8l-5.2 -11.3l5.1 -11.9l10.5 -0.8zM749.5 163.1l-5.2 12l-10.5 0.6l-5.2 -11.3l5.2 -11.9l10.4 -0.7zM749.6 199.5l-5.3 12l-10.4 0.5l-5.2 -11.4l5.2 -11.8l10.4 -0.6zM749.6 236l-5.2 11.8l-10.4 0.5l-5.3 -11.4l5.2 -11.9l10.5 -0.4zM749.7 272.4l-5.2 11.8l-10.5 0.3l-5.2 -11.4l5.2 -11.8l10.4 -0.4zM749.8 308.9l-5.3 11.7l-10.4 0.2l-5.2 -11.5l5.1 -11.7l10.5 -0.3zM749.8 345.3l-5.2 11.8l-10.5 0l-5.2 -11.5l5.2 -11.7l10.5 -0.2zM749.9 381.8l-5.2 11.7l-10.5 -0.1l-5.2 -11.6l5.2 -11.6l10.4 0zM749.9 418.3l-5.2 11.6l-10.4 -0.1l-5.2 -11.7l5.1 -11.6l10.5 0.1zM750 454.8l-5.2 11.5l-10.5 -0.2l-5.2 -11.7l5.2 -11.6l10.4 0.2zM750.1 491.3l-5.3 11.5l-10.4 -0.4l-5.2 -11.7l5.2 -11.5l10.4 0.3zM750.1 527.8l-5.2 11.4l-10.4 -0.4l-5.3 -11.9l5.2 -11.4l10.5 0.4zM750.2 564.3l-5.2 11.4l-10.5 -0.6l-5.2 -11.9l5.2 -11.3l10.4 0.5zM750.3 600.8l-5.3 11.4l-10.4 -0.7l-5.2 -11.9l5.1 -11.4l10.5 0.6zM750.3 637.4l-5.2 11.3l-10.5 -0.8l-5.2 -12l5.2 -11.3l10.5 0.7zM750.4 673.9l-5.2 11.3l-10.5 -0.9l-5.2 -12.1l5.2 -11.2l10.4 0.8zM750.5 710.5l-5.3 11.2l-10.4 -1l-5.3 -12.2l5.2 -11.1l10.5 0.9zM750.5 747l-5.2 11.2l-10.5 -1.1l-5.2 -12.2l5.2 -11.1l10.4 1zM776.6 -3.7l-5.3 12.3l-10.6 1.2l-5.3 -11.1l5.2 -12.3l10.6 -1.2zM776.6 33l-5.3 12.2l-10.6 1.1l-5.3 -11.2l5.3 -12.2l10.6 -1.1zM776.7 69.7l-5.3 12.2l-10.6 0.9l-5.3 -11.2l5.3 -12.2l10.6 -1zM776.8 106.4l-5.3 12.1l-10.6 0.8l-5.3 -11.3l5.2 -12.1l10.6 -0.8zM776.8 143.1l-5.3 12l-10.6 0.7l-5.3 -11.3l5.3 -12.1l10.6 -0.7zM776.9 179.8l-5.3 12l-10.6 0.6l-5.3 -11.4l5.3 -12l10.6 -0.7zM777 216.5l-5.3 12l-10.6 0.4l-5.3 -11.4l5.2 -12l10.6 -0.5zM777 253.2l-5.3 11.9l-10.6 0.4l-5.3 -11.5l5.3 -11.9l10.6 -0.4zM777.1 289.9l-5.3 11.9l-10.6 0.2l-5.3 -11.5l5.3 -11.9l10.6 -0.3zM777.2 326.7l-5.3 11.8l-10.6 0.1l-5.3 -11.6l5.2 -11.8l10.6 -0.2zM777.2 363.4l-5.3 11.8l-10.6 0l-5.3 -11.7l5.3 -11.7l10.6 -0.1zM777.3 400.2l-5.3 11.7l-10.6 -0.1l-5.3 -11.7l5.2 -11.7l10.7 0zM777.4 436.9l-5.3 11.7l-10.6 -0.2l-5.3 -11.8l5.2 -11.6l10.6 0.1zM777.4 473.7l-5.3 11.6l-10.6 -0.3l-5.3 -11.8l5.3 -11.6l10.6 0.2zM777.5 510.5l-5.3 11.6l-10.6 -0.4l-5.3 -11.9l5.2 -11.6l10.7 0.4zM777.6 547.3l-5.3 11.5l-10.6 -0.5l-5.4 -12l5.3 -11.5l10.6 0.5zM777.6 584.1l-5.3 11.5l-10.6 -0.7l-5.3 -12l5.3 -11.4l10.6 0.5zM777.7 620.9l-5.3 11.4l-10.6 -0.7l-5.3 -12.1l5.2 -11.4l10.7 0.7zM777.8 657.7l-5.3 11.4l-10.7 -0.8l-5.3 -12.2l5.3 -11.3l10.6 0.8zM777.8 694.6l-5.3 11.3l-10.6 -1l-5.3 -12.2l5.3 -11.2l10.6 0.8zM777.9 731.4l-5.3 11.3l-10.6 -1.1l-5.3 -12.2l5.2 -11.3l10.7 1zM778 768.3l-5.3 11.2l-10.7 -1.2l-5.3 -12.3l5.3 -11.2l10.6 1.1zM804.4 11.8l-5.4 12.4l-10.8 1l-5.3 -11.2l5.3 -12.3l10.7 -1.2zM804.4 48.7l-5.3 12.4l-10.8 0.9l-5.4 -11.2l5.4 -12.3l10.7 -1.1zM804.5 85.7l-5.4 12.3l-10.7 0.8l-5.4 -11.3l5.3 -12.2l10.8 -1zM804.6 122.7l-5.4 12.2l-10.8 0.7l-5.3 -11.3l5.3 -12.2l10.8 -0.8zM804.7 159.7l-5.4 12.1l-10.8 0.7l-5.4 -11.5l5.4 -12.1l10.7 -0.7zM804.7 196.7l-5.4 12.1l-10.7 0.5l-5.4 -11.5l5.3 -12.1l10.8 -0.6zM804.8 233.7l-5.4 12l-10.8 0.4l-5.3 -11.5l5.3 -12l10.8 -0.5zM804.9 270.7l-5.4 12l-10.8 0.3l-5.4 -11.6l5.4 -12l10.7 -0.4zM804.9 307.7l-5.3 11.9l-10.8 0.2l-5.4 -11.6l5.3 -12l10.8 -0.2zM805 344.7l-5.4 11.9l-10.7 0.1l-5.4 -11.7l5.3 -11.9l10.8 -0.1zM805.1 381.8l-5.4 11.8l-10.8 0l-5.4 -11.8l5.4 -11.8l10.8 -0.1zM805.2 418.8l-5.4 11.8l-10.8 -0.1l-5.4 -11.9l5.4 -11.7l10.7 0zM805.2 455.9l-5.4 11.7l-10.7 -0.2l-5.4 -12l5.3 -11.7l10.8 0.2zM805.3 492.9l-5.4 11.7l-10.8 -0.3l-5.4 -12l5.4 -11.7l10.8 0.3zM805.4 530l-5.4 11.7l-10.8 -0.5l-5.4 -12l5.4 -11.6l10.7 0.4zM805.4 567.1l-5.3 11.6l-10.8 -0.6l-5.4 -12.1l5.3 -11.5l10.8 0.5zM805.5 604.2l-5.4 11.5l-10.8 -0.7l-5.3 -12.1l5.3 -11.5l10.8 0.6zM805.6 641.3l-5.4 11.5l-10.8 -0.8l-5.4 -12.2l5.4 -11.5l10.8 0.8zM805.7 678.4l-5.4 11.5l-10.8 -1l-5.4 -12.2l5.3 -11.4l10.8 0.8zM805.7 715.6l-5.4 11.3l-10.7 -1l-5.4 -12.3l5.3 -11.4l10.8 1zM805.8 752.7l-5.4 11.3l-10.8 -1.1l-5.4 -12.4l5.4 -11.3l10.8 1.1zM832.5 -9.8l-5.4 12.5l-10.9 1.2l-5.5 -11.3l5.4 -12.4l10.9 -1.3zM832.6 27.5l-5.4 12.4l-11 1.1l-5.4 -11.4l5.4 -12.4l10.9 -1.1zM832.7 64.7l-5.5 12.4l-10.9 0.9l-5.5 -11.3l5.5 -12.4l10.9 -1zM832.8 102l-5.5 12.3l-10.9 0.8l-5.5 -11.4l5.4 -12.3l11 -0.9zM832.8 139.3l-5.4 12.2l-11 0.7l-5.4 -11.5l5.4 -12.2l10.9 -0.8zM832.9 176.5l-5.4 12.3l-11 0.6l-5.4 -11.6l5.4 -12.2l10.9 -0.7zM833 213.8l-5.5 12.2l-10.9 0.5l-5.5 -11.6l5.4 -12.2l11 -0.5zM833.1 251.1l-5.5 12.1l-10.9 0.4l-5.5 -11.7l5.4 -12.1l11 -0.4zM833.2 288.4l-5.5 12.1l-11 0.3l-5.4 -11.8l5.4 -12l10.9 -0.3zM833.2 325.7l-5.4 12.1l-11 0.1l-5.5 -11.8l5.5 -12l10.9 -0.2zM833.3 363.1l-5.5 11.9l-10.9 0.1l-5.5 -11.9l5.4 -11.9l11 -0.1zM833.4 400.4l-5.5 11.9l-10.9 -0.1l-5.5 -11.9l5.4 -11.9l11 0.1zM833.5 437.8l-5.5 11.8l-11 -0.2l-5.4 -12l5.4 -11.8l10.9 0.1zM833.5 475.1l-5.4 11.8l-11 -0.3l-5.5 -12l5.5 -11.8l10.9 0.2zM833.6 512.5l-5.5 11.7l-10.9 -0.4l-5.5 -12.1l5.4 -11.7l11 0.3zM833.7 549.9l-5.5 11.6l-10.9 -0.5l-5.5 -12.1l5.4 -11.7l11 0.5zM833.8 587.2l-5.5 11.7l-11 -0.7l-5.4 -12.2l5.4 -11.6l10.9 0.6zM833.8 624.6l-5.4 11.6l-11 -0.7l-5.5 -12.3l5.5 -11.6l10.9 0.7zM833.9 662l-5.5 11.6l-10.9 -0.9l-5.5 -12.3l5.4 -11.5l11 0.8zM834 699.5l-5.5 11.4l-10.9 -1l-5.5 -12.3l5.4 -11.5l11 0.9zM834.1 736.9l-5.5 11.4l-11 -1.1l-5.5 -12.5l5.5 -11.3l10.9 1zM834.1 774.3l-5.4 11.4l-11 -1.2l-5.5 -12.5l5.5 -11.4l10.9 1.2zM861.2 5.9l-5.5 12.5l-11.1 1.2l-5.6 -11.4l5.5 -12.5l11.1 -1.2zM861.3 43.4l-5.5 12.5l-11.1 1l-5.6 -11.4l5.5 -12.5l11.1 -1.1zM861.4 81l-5.5 12.4l-11.2 0.9l-5.5 -11.5l5.5 -12.4l11.1 -1zM861.5 118.5l-5.6 12.4l-11.1 0.8l-5.5 -11.6l5.5 -12.3l11.1 -0.9zM861.6 156.1l-5.6 12.3l-11.1 0.7l-5.6 -11.6l5.6 -12.3l11.1 -0.8zM861.6 193.7l-5.5 12.3l-11.1 0.5l-5.6 -11.7l5.5 -12.2l11.1 -0.6zM861.7 231.3l-5.5 12.2l-11.1 0.4l-5.6 -11.7l5.5 -12.2l11.1 -0.5zM861.8 268.9l-5.6 12.2l-11.1 0.3l-5.5 -11.8l5.5 -12.2l11.1 -0.4zM861.9 306.5l-5.6 12.1l-11.1 0.2l-5.5 -11.9l5.5 -12.1l11.1 -0.2zM862 344.1l-5.6 12.1l-11.1 0.1l-5.6 -12l5.5 -12l11.2 -0.2zM862 381.7l-5.5 12l-11.1 0l-5.6 -12l5.5 -12l11.1 0zM862.1 419.4l-5.5 11.9l-11.2 -0.1l-5.5 -12.1l5.5 -11.9l11.1 0.1zM862.2 457l-5.6 11.9l-11.1 -0.2l-5.5 -12.1l5.5 -11.9l11.1 0.2zM862.3 494.7l-5.6 11.8l-11.1 -0.3l-5.6 -12.2l5.6 -11.8l11.1 0.3zM862.4 532.3l-5.6 11.8l-11.1 -0.4l-5.6 -12.3l5.5 -11.7l11.2 0.4zM862.4 570l-5.5 11.8l-11.1 -0.6l-5.6 -12.3l5.5 -11.7l11.1 0.5zM862.5 607.7l-5.5 11.7l-11.2 -0.7l-5.5 -12.4l5.5 -11.6l11.1 0.6zM862.6 645.4l-5.6 11.6l-11.1 -0.8l-5.5 -12.4l5.5 -11.6l11.1 0.7zM862.7 683.1l-5.6 11.6l-11.1 -1l-5.6 -12.4l5.5 -11.6l11.2 0.9zM862.8 720.8l-5.6 11.6l-11.1 -1.1l-5.6 -12.5l5.5 -11.5l11.2 0.9zM862.9 758.5l-5.6 11.5l-11.2 -1.2l-5.5 -12.5l5.5 -11.5l11.1 1.1zM890.4 21.8l-5.6 12.6l-11.3 1.1l-5.7 -11.5l5.6 -12.6l11.3 -1.2zM890.5 59.6l-5.7 12.6l-11.2 1l-5.7 -11.6l5.6 -12.5l11.3 -1.1zM890.6 97.5l-5.7 12.5l-11.3 0.9l-5.6 -11.7l5.6 -12.5l11.3 -0.9zM890.7 135.3l-5.7 12.5l-11.3 0.7l-5.6 -11.6l5.6 -12.5l11.3 -0.8zM890.7 173.2l-5.6 12.4l-11.3 0.6l-5.6 -11.7l5.6 -12.4l11.2 -0.7zM890.8 211.1l-5.6 12.4l-11.3 0.5l-5.7 -11.8l5.6 -12.4l11.3 -0.5zM890.9 249l-5.6 12.3l-11.3 0.4l-5.7 -11.9l5.6 -12.3l11.3 -0.4zM891 286.9l-5.6 12.2l-11.3 0.3l-5.7 -11.9l5.6 -12.2l11.3 -0.4zM891.1 324.8l-5.7 12.2l-11.3 0.2l-5.6 -12l5.6 -12.2l11.3 -0.2zM891.2 362.7l-5.7 12.2l-11.3 0l-5.6 -12l5.6 -12.2l11.3 -0.1zM891.3 400.7l-5.7 12.1l-11.3 -0.1l-5.6 -12.1l5.6 -12.1l11.2 0zM891.3 438.6l-5.6 12l-11.3 -0.2l-5.7 -12.1l5.6 -12l11.3 0.1zM891.4 476.6l-5.6 11.9l-11.3 -0.3l-5.7 -12.2l5.6 -12l11.3 0.3zM891.5 514.5l-5.6 12l-11.3 -0.5l-5.7 -12.3l5.6 -11.9l11.3 0.4zM891.6 552.5l-5.7 11.9l-11.3 -0.6l-5.6 -12.3l5.6 -11.9l11.3 0.5zM891.7 590.5l-5.7 11.8l-11.3 -0.7l-5.6 -12.4l5.6 -11.8l11.3 0.6zM891.8 628.5l-5.7 11.7l-11.3 -0.7l-5.7 -12.5l5.6 -11.8l11.4 0.8zM891.8 666.5l-5.6 11.7l-11.3 -0.9l-5.7 -12.6l5.6 -11.6l11.3 0.8zM891.9 704.5l-5.6 11.6l-11.3 -1l-5.7 -12.6l5.6 -11.6l11.3 0.9zM892 742.5l-5.6 11.6l-11.4 -1.1l-5.6 -12.7l5.6 -11.6l11.3 1.1zM892.1 780.5l-5.7 11.6l-11.3 -1.3l-5.6 -12.7l5.6 -11.5l11.3 1.2zM919.9 -0.2l-5.7 12.8l-11.4 1.1l-5.8 -11.5l5.7 -12.8l11.5 -1.2zM920 37.9l-5.7 12.7l-11.5 1.1l-5.7 -11.6l5.7 -12.7l11.4 -1.1zM920.1 76.1l-5.7 12.6l-11.5 1l-5.7 -11.7l5.7 -12.6l11.4 -1zM920.2 114.2l-5.7 12.7l-11.5 0.8l-5.7 -11.8l5.7 -12.6l11.4 -0.8zM920.3 152.4l-5.7 12.6l-11.5 0.7l-5.7 -11.9l5.6 -12.5l11.5 -0.7zM920.4 190.6l-5.7 12.5l-11.5 0.6l-5.7 -11.9l5.6 -12.5l11.5 -0.6zM920.5 228.8l-5.8 12.4l-11.4 0.5l-5.8 -11.9l5.7 -12.5l11.5 -0.5zM920.6 267l-5.8 12.4l-11.4 0.3l-5.8 -12l5.7 -12.3l11.5 -0.4zM920.7 305.2l-5.8 12.3l-11.5 0.2l-5.7 -12l5.7 -12.3l11.5 -0.3zM920.7 343.4l-5.7 12.3l-11.5 0.1l-5.7 -12.1l5.7 -12.3l11.5 -0.1zM920.8 381.7l-5.7 12.2l-11.5 0l-5.7 -12.2l5.7 -12.2l11.4 0zM920.9 419.9l-5.7 12.2l-11.5 -0.2l-5.7 -12.2l5.7 -12.1l11.4 0zM921 458.2l-5.7 12.1l-11.5 -0.3l-5.7 -12.3l5.6 -12.1l11.5 0.2zM921.1 496.4l-5.7 12.1l-11.5 -0.4l-5.8 -12.4l5.7 -12l11.5 0.3zM921.2 534.7l-5.7 12l-11.5 -0.5l-5.8 -12.4l5.7 -12l11.5 0.4zM921.3 573l-5.8 11.9l-11.4 -0.6l-5.8 -12.5l5.7 -11.9l11.5 0.6zM921.4 611.3l-5.8 11.9l-11.5 -0.8l-5.7 -12.5l5.7 -11.9l11.5 0.7zM921.5 649.6l-5.8 11.8l-11.5 -0.8l-5.7 -12.7l5.7 -11.7l11.5 0.7zM921.6 687.9l-5.8 11.8l-11.5 -1l-5.7 -12.7l5.7 -11.7l11.5 0.9zM921.6 726.2l-5.7 11.7l-11.5 -1l-5.7 -12.8l5.7 -11.7l11.4 1.1zM921.7 764.6l-5.7 11.6l-11.5 -1.2l-5.8 -12.8l5.7 -11.6l11.5 1.1zM950.1 15.9l-5.9 12.8l-11.6 1.2l-5.8 -11.7l5.7 -12.8l11.7 -1.2zM950.1 54.3l-5.8 12.8l-11.6 1l-5.8 -11.7l5.7 -12.8l11.7 -1zM950.2 92.8l-5.8 12.8l-11.6 0.8l-5.9 -11.8l5.8 -12.7l11.7 -0.9zM950.3 131.3l-5.8 12.7l-11.6 0.7l-5.9 -11.8l5.8 -12.7l11.7 -0.8zM950.4 169.8l-5.8 12.6l-11.6 0.6l-5.9 -11.9l5.8 -12.6l11.6 -0.7zM950.5 208.3l-5.8 12.5l-11.7 0.6l-5.8 -12l5.8 -12.6l11.6 -0.6zM950.6 246.8l-5.8 12.5l-11.7 0.4l-5.8 -12.1l5.8 -12.4l11.6 -0.5zM950.7 285.3l-5.8 12.5l-11.7 0.2l-5.8 -12.1l5.8 -12.4l11.6 -0.4zM950.8 323.8l-5.8 12.4l-11.7 0.2l-5.8 -12.2l5.8 -12.4l11.6 -0.2zM950.9 362.4l-5.8 12.3l-11.7 0l-5.8 -12.2l5.8 -12.3l11.6 -0.1zM951 400.9l-5.8 12.3l-11.7 -0.1l-5.8 -12.3l5.7 -12.2l11.7 0zM951.1 439.5l-5.8 12.2l-11.7 -0.2l-5.8 -12.4l5.7 -12.2l11.7 0.2zM951.2 478l-5.8 12.2l-11.7 -0.3l-5.9 -12.4l5.8 -12.2l11.7 0.3zM951.3 516.6l-5.9 12.1l-11.6 -0.4l-5.9 -12.5l5.8 -12.1l11.7 0.4zM951.4 555.2l-5.9 12.1l-11.6 -0.6l-5.9 -12.5l5.8 -12.1l11.7 0.5zM951.5 593.8l-5.9 12l-11.6 -0.7l-5.9 -12.6l5.8 -12l11.7 0.7zM951.6 632.4l-5.9 12l-11.6 -0.8l-5.9 -12.7l5.8 -11.9l11.7 0.7zM951.7 671.1l-5.9 11.8l-11.7 -0.9l-5.8 -12.7l5.8 -11.9l11.7 0.9zM951.8 709.7l-5.9 11.8l-11.7 -1l-5.8 -12.8l5.8 -11.8l11.7 0.9zM951.8 748.3l-5.8 11.8l-11.7 -1.2l-5.8 -12.8l5.8 -11.8l11.7 1.1zM980.6 -6.5l-5.9 13l-11.9 1.2l-5.9 -11.8l5.9 -12.9l11.8 -1.3zM980.7 32.2l-6 13l-11.8 1.1l-5.9 -11.8l5.8 -12.9l11.9 -1.2zM980.8 71l-6 12.9l-11.8 1l-5.9 -11.9l5.8 -12.8l11.9 -1.1zM980.9 109.8l-6 12.8l-11.8 0.9l-5.9 -12l5.8 -12.7l11.9 -1zM981 148.6l-6 12.8l-11.8 0.7l-5.9 -12l5.8 -12.7l11.9 -0.8zM981.1 187.4l-6 12.7l-11.8 0.6l-5.9 -12l5.8 -12.7l11.9 -0.7zM981.2 226.2l-6 12.7l-11.8 0.4l-5.9 -12.1l5.8 -12.6l11.9 -0.5zM981.3 265.1l-6 12.6l-11.8 0.3l-5.9 -12.2l5.8 -12.5l11.9 -0.5zM981.4 303.9l-6 12.5l-11.8 0.3l-5.9 -12.3l5.8 -12.5l11.9 -0.3zM981.5 342.7l-6 12.5l-11.8 0.1l-6 -12.3l5.9 -12.4l11.9 -0.2zM981.6 381.6l-6 12.4l-11.8 0l-6 -12.4l5.9 -12.4l11.9 0zM981.7 420.5l-6 12.3l-11.8 -0.1l-6 -12.4l5.9 -12.4l11.9 0.1zM981.8 459.4l-6 12.3l-11.8 -0.3l-6 -12.5l5.9 -12.3l11.9 0.2zM981.9 498.3l-6 12.2l-11.8 -0.4l-6 -12.6l5.9 -12.2l11.9 0.3zM982 537.2l-6 12.1l-11.8 -0.5l-6 -12.6l5.9 -12.2l11.9 0.5zM982.1 576.1l-6 12.1l-11.8 -0.6l-6 -12.7l5.9 -12.1l11.9 0.5zM982.2 615l-6 12.1l-11.8 -0.8l-6 -12.8l5.9 -12l11.9 0.7zM982.3 653.9l-6 12l-11.8 -0.8l-6 -12.9l5.9 -11.9l11.9 0.8zM982.4 692.9l-6 11.9l-11.9 -1l-5.9 -12.9l5.9 -11.9l11.9 0.9zM982.5 731.8l-6 11.9l-11.9 -1.1l-5.9 -13l5.9 -11.8l11.9 1zM982.6 770.8l-6 11.8l-11.9 -1.2l-5.9 -13l5.9 -11.8l11.9 1.1zM1011.7 9.8l-6 13.1l-12.1 1.1l-6 -11.8l6 -13.1l12 -1.2zM1011.8 48.9l-6 13l-12.1 1l-6 -11.9l6 -13l12 -1.1zM1011.9 88l-6 12.9l-12.1 1l-6 -12l6 -13l12 -0.9zM1012 127.1l-6 12.9l-12.1 0.8l-6 -12.1l6 -12.8l12 -0.9zM1012.1 166.2l-6 12.9l-12.1 0.6l-6 -12.1l6 -12.8l12 -0.7zM1012.2 205.3l-6 12.8l-12.1 0.6l-6 -12.2l6 -12.8l12 -0.6zM1012.3 244.5l-6 12.7l-12.1 0.4l-6 -12.2l6 -12.7l12 -0.5zM1012.4 283.6l-6 12.7l-12.1 0.3l-6 -12.3l6 -12.6l12 -0.4zM1012.5 322.8l-6 12.6l-12.1 0.2l-6 -12.4l6 -12.6l12 -0.2zM1012.6 362l-6 12.5l-12.1 0.1l-6 -12.5l6 -12.5l12 -0.1zM1012.7 401.2l-6 12.5l-12.1 -0.1l-6 -12.5l6 -12.5l12 0zM1012.8 440.4l-6 12.4l-12.1 -0.2l-6 -12.6l6 -12.4l12 0.2zM1012.9 479.6l-6 12.4l-12.1 -0.4l-6 -12.6l6 -12.4l12 0.3zM1013 518.8l-6 12.3l-12.1 -0.4l-6 -12.7l6 -12.3l12 0.4zM1013.1 558l-6 12.3l-12 -0.6l-6.1 -12.8l6 -12.2l12 0.5zM1013.2 597.3l-6 12.2l-12 -0.7l-6.1 -12.9l6 -12.1l12.1 0.6zM1013.3 636.5l-6 12.2l-12 -0.9l-6.1 -12.9l6 -12.1l12.1 0.8zM1013.5 675.8l-6.1 12.1l-12 -1l-6.1 -13l6 -12l12.1 0.9zM1013.6 715.1l-6.1 12l-12 -1.1l-6.1 -13l6 -12l12.1 1zM1013.7 754.3l-6.1 12l-12 -1.2l-6.1 -13.1l6 -11.9l12.1 1.1zM1043.2 -13l-6.1 13.2l-12.2 1.2l-6.2 -11.9l6.1 -13.2l12.2 -1.3zM1043.3 26.4l-6.1 13.1l-12.2 1.2l-6.2 -12l6.1 -13.2l12.2 -1.1zM1043.4 65.8l-6.1 13.1l-12.2 1l-6.2 -12.1l6.1 -13l12.2 -1.1zM1043.5 105.2l-6.1 13.1l-12.2 0.8l-6.1 -12.1l6 -13l12.2 -0.9zM1043.6 144.7l-6.1 13l-12.2 0.7l-6.1 -12.2l6 -12.9l12.3 -0.8zM1043.8 184.1l-6.2 13l-12.2 0.6l-6.1 -12.3l6 -12.9l12.3 -0.7zM1043.9 223.6l-6.2 12.9l-12.2 0.4l-6.1 -12.3l6 -12.8l12.3 -0.6zM1044 263.1l-6.1 12.8l-12.3 0.3l-6.1 -12.4l6 -12.7l12.3 -0.5zM1044.1 302.5l-6.1 12.8l-12.3 0.2l-6.1 -12.4l6 -12.7l12.3 -0.3zM1044.2 342l-6.1 12.7l-12.3 0.1l-6.1 -12.5l6 -12.6l12.3 -0.2zM1044.3 381.6l-6.1 12.6l-12.3 0l-6.1 -12.6l6.1 -12.6l12.2 -0.1zM1044.4 421.1l-6.1 12.5l-12.3 -0.1l-6.1 -12.7l6.1 -12.5l12.2 0.1zM1044.5 460.6l-6.1 12.5l-12.3 -0.3l-6.1 -12.7l6.1 -12.5l12.2 0.2zM1044.6 500.1l-6.1 12.5l-12.3 -0.4l-6.1 -12.8l6.1 -12.4l12.2 0.3zM1044.7 539.7l-6.1 12.4l-12.2 -0.6l-6.2 -12.8l6.1 -12.3l12.2 0.4zM1044.8 579.3l-6.1 12.3l-12.2 -0.7l-6.2 -12.9l6.1 -12.3l12.3 0.6zM1045 618.8l-6.2 12.3l-12.2 -0.8l-6.2 -13l6.1 -12.2l12.3 0.7zM1045.1 658.4l-6.2 12.2l-12.2 -0.9l-6.2 -13l6.1 -12.2l12.3 0.8zM1045.2 698l-6.2 12.2l-12.2 -1.1l-6.2 -13.1l6.1 -12.1l12.3 1zM1045.3 737.6l-6.1 12.1l-12.3 -1.2l-6.2 -13.1l6.1 -12.1l12.3 1.1zM1045.4 777.2l-6.1 12.1l-12.3 -1.3l-6.2 -13.3l6.1 -12l12.3 1.2zM1075.4 3.5l-6.2 13.3l-12.5 1.2l-6.2 -12l6.1 -13.3l12.5 -1.3zM1075.5 43.2l-6.2 13.3l-12.5 1.1l-6.2 -12.2l6.2 -13.2l12.4 -1.1zM1075.6 83l-6.2 13.2l-12.5 0.9l-6.2 -12.2l6.2 -13.1l12.4 -1zM1075.7 122.8l-6.2 13.1l-12.5 0.8l-6.2 -12.2l6.2 -13.1l12.4 -0.9zM1075.8 162.5l-6.2 13.1l-12.4 0.7l-6.3 -12.3l6.2 -13l12.4 -0.8zM1075.9 202.3l-6.2 13l-12.4 0.6l-6.3 -12.4l6.2 -13l12.4 -0.6zM1076.1 242.1l-6.3 13l-12.4 0.4l-6.2 -12.4l6.1 -12.9l12.5 -0.5zM1076.2 281.9l-6.2 12.9l-12.5 0.3l-6.2 -12.5l6.1 -12.8l12.5 -0.4zM1076.3 321.8l-6.2 12.8l-12.5 0.2l-6.2 -12.6l6.1 -12.8l12.5 -0.3zM1076.4 361.6l-6.2 12.8l-12.5 0l-6.2 -12.6l6.1 -12.8l12.5 -0.1zM1076.5 401.4l-6.2 12.8l-12.5 -0.1l-6.2 -12.8l6.2 -12.6l12.4 0zM1076.6 441.3l-6.2 12.6l-12.5 -0.2l-6.2 -12.8l6.2 -12.6l12.4 0.2zM1076.7 481.2l-6.2 12.6l-12.4 -0.4l-6.3 -12.8l6.2 -12.6l12.4 0.3zM1076.9 521.1l-6.3 12.5l-12.4 -0.5l-6.3 -12.9l6.2 -12.5l12.5 0.4zM1077 560.9l-6.3 12.5l-12.4 -0.6l-6.3 -13l6.2 -12.4l12.5 0.5zM1077.1 600.8l-6.2 12.4l-12.5 -0.7l-6.2 -13.1l6.1 -12.3l12.5 0.6zM1077.2 640.8l-6.2 12.3l-12.5 -0.9l-6.2 -13.1l6.1 -12.3l12.5 0.8zM1077.3 680.7l-6.2 12.3l-12.5 -1l-6.2 -13.2l6.1 -12.3l12.5 0.9zM1077.4 720.6l-6.2 12.2l-12.5 -1.1l-6.2 -13.3l6.2 -12.1l12.4 1zM1077.6 760.6l-6.3 12.1l-12.5 -1.2l-6.2 -13.4l6.2 -12.1l12.4 1.2zM1108.1 20.3l-6.3 13.4l-12.7 1.2l-6.3 -12.2l6.2 -13.4l12.7 -1.2zM1108.2 60.4l-6.3 13.3l-12.7 1.1l-6.3 -12.3l6.3 -13.3l12.6 -1.1zM1108.3 100.5l-6.3 13.3l-12.7 0.9l-6.3 -12.4l6.3 -13.2l12.6 -0.9zM1108.4 140.6l-6.3 13.2l-12.6 0.8l-6.4 -12.4l6.3 -13.2l12.6 -0.8zM1108.6 180.7l-6.4 13.2l-12.6 0.6l-6.4 -12.4l6.3 -13.2l12.7 -0.7zM1108.7 220.9l-6.3 13l-12.7 0.5l-6.3 -12.5l6.2 -13l12.7 -0.6zM1108.8 261l-6.3 13l-12.7 0.4l-6.3 -12.6l6.2 -13l12.7 -0.4zM1108.9 301.2l-6.3 12.9l-12.7 0.3l-6.3 -12.7l6.3 -12.9l12.6 -0.3zM1109 341.3l-6.3 12.9l-12.7 0.1l-6.3 -12.7l6.3 -12.9l12.6 -0.1zM1109.2 381.5l-6.4 12.8l-12.6 0l-6.4 -12.8l6.3 -12.8l12.7 0zM1109.3 421.7l-6.3 12.8l-12.7 -0.2l-6.4 -12.9l6.3 -12.7l12.7 0.1zM1109.4 461.9l-6.3 12.7l-12.7 -0.3l-6.3 -12.9l6.2 -12.7l12.7 0.2zM1109.5 502.1l-6.3 12.7l-12.7 -0.5l-6.3 -13l6.2 -12.6l12.7 0.4zM1109.6 542.3l-6.3 12.6l-12.7 -0.5l-6.3 -13.1l6.3 -12.6l12.6 0.5zM1109.8 582.5l-6.4 12.6l-12.6 -0.7l-6.4 -13.1l6.3 -12.5l12.7 0.6zM1109.9 622.8l-6.3 12.5l-12.7 -0.9l-6.4 -13.2l6.3 -12.4l12.7 0.7zM1110 663l-6.3 12.5l-12.7 -1l-6.4 -13.3l6.3 -12.3l12.7 0.8zM1110.1 703.3l-6.3 12.4l-12.7 -1.1l-6.3 -13.4l6.2 -12.3l12.7 1zM1110.3 743.6l-6.4 12.3l-12.7 -1.2l-6.3 -13.4l6.2 -12.3l12.7 1.1zM1141.2 -3l-6.4 13.5l-12.9 1.3l-6.4 -12.3l6.4 -13.5l12.8 -1.3zM1141.4 37.4l-6.5 13.5l-12.8 1.1l-6.5 -12.3l6.4 -13.4l12.8 -1.2zM1141.5 77.9l-6.4 13.4l-12.9 0.9l-6.5 -12.3l6.4 -13.4l12.9 -1.1zM1141.6 118.3l-6.4 13.4l-12.9 0.8l-6.4 -12.5l6.3 -13.3l12.9 -0.9zM1141.7 158.8l-6.4 13.3l-12.9 0.7l-6.4 -12.6l6.4 -13.2l12.8 -0.8zM1141.9 199.2l-6.5 13.3l-12.8 0.5l-6.5 -12.6l6.4 -13.2l12.8 -0.6zM1142 239.7l-6.4 13.2l-12.9 0.4l-6.5 -12.6l6.4 -13.2l12.9 -0.5zM1142.1 280.2l-6.4 13.1l-12.9 0.3l-6.5 -12.7l6.4 -13.1l12.9 -0.4zM1142.2 320.7l-6.4 13l-12.9 0.2l-6.4 -12.8l6.3 -13l12.9 -0.2zM1142.4 361.2l-6.5 13l-12.9 0l-6.4 -12.8l6.4 -13l12.8 -0.1zM1142.5 401.7l-6.4 13l-12.9 -0.1l-6.5 -13l6.4 -12.9l12.9 0.1zM1142.6 442.3l-6.4 12.8l-12.9 -0.2l-6.5 -13l6.4 -12.8l12.9 0.1zM1142.7 482.8l-6.4 12.8l-12.9 -0.4l-6.4 -13l6.3 -12.8l12.9 0.3zM1142.9 523.4l-6.5 12.7l-12.9 -0.5l-6.4 -13.1l6.4 -12.7l12.9 0.4zM1143 563.9l-6.4 12.7l-12.9 -0.6l-6.5 -13.2l6.4 -12.7l12.9 0.6zM1143.1 604.5l-6.4 12.6l-12.9 -0.7l-6.5 -13.3l6.4 -12.6l12.9 0.7zM1143.2 645.1l-6.4 12.6l-12.9 -0.9l-6.5 -13.4l6.4 -12.5l12.9 0.8zM1143.4 685.7l-6.5 12.5l-12.9 -1l-6.4 -13.4l6.3 -12.5l13 1zM1143.5 726.3l-6.4 12.5l-12.9 -1.2l-6.5 -13.5l6.4 -12.4l12.9 1.1zM1143.6 767l-6.4 12.3l-12.9 -1.3l-6.5 -13.5l6.4 -12.3l12.9 1.2zM1175.1 14l-6.6 13.7l-13 1.2l-6.6 -12.4l6.5 -13.6l13.1 -1.3zM1175.2 54.8l-6.5 13.6l-13.1 1l-6.6 -12.4l6.5 -13.5l13.1 -1.2zM1175.3 95.6l-6.5 13.5l-13.1 0.9l-6.5 -12.5l6.4 -13.4l13.1 -1zM1175.5 136.4l-6.6 13.5l-13.1 0.7l-6.5 -12.6l6.5 -13.4l13 -0.8zM1175.6 177.2l-6.5 13.4l-13.1 0.6l-6.6 -12.6l6.5 -13.4l13.1 -0.7zM1175.7 218l-6.5 13.4l-13.1 0.5l-6.6 -12.8l6.5 -13.2l13.1 -0.6zM1175.9 258.9l-6.6 13.2l-13.1 0.4l-6.5 -12.8l6.4 -13.2l13.1 -0.5zM1176 299.7l-6.5 13.2l-13.1 0.2l-6.6 -12.8l6.5 -13.2l13.1 -0.3zM1176.1 340.6l-6.5 13.1l-13.1 0.1l-6.6 -12.9l6.5 -13.1l13.1 -0.2zM1176.3 381.4l-6.6 13.1l-13.1 0l-6.6 -13l6.5 -13.1l13.1 0zM1176.4 422.3l-6.5 13l-13.2 -0.1l-6.5 -13.1l6.5 -13l13.1 0.1zM1176.5 463.2l-6.5 12.9l-13.1 -0.3l-6.6 -13.1l6.5 -12.9l13.1 0.2zM1176.7 504.1l-6.6 12.9l-13.1 -0.5l-6.6 -13.2l6.5 -12.8l13.1 0.3zM1176.8 545l-6.6 12.8l-13.1 -0.5l-6.5 -13.3l6.4 -12.8l13.2 0.5zM1176.9 586l-6.5 12.7l-13.1 -0.7l-6.6 -13.4l6.5 -12.7l13.1 0.6zM1177.1 626.9l-6.6 12.7l-13.1 -0.9l-6.6 -13.4l6.5 -12.6l13.1 0.7zM1177.2 667.8l-6.6 12.7l-13.1 -1l-6.6 -13.5l6.5 -12.6l13.2 0.9zM1177.3 708.8l-6.5 12.6l-13.2 -1.2l-6.5 -13.5l6.5 -12.5l13.1 1zM1177.5 749.8l-6.6 12.5l-13.1 -1.3l-6.6 -13.6l6.5 -12.5l13.1 1.2zM1209.4 -9.7l-6.7 13.8l-13.3 1.2l-6.7 -12.4l6.6 -13.8l13.3 -1.3zM1209.5 31.4l-6.6 13.7l-13.4 1.2l-6.6 -12.6l6.6 -13.6l13.3 -1.3zM1209.7 72.5l-6.7 13.7l-13.3 1l-6.7 -12.6l6.6 -13.6l13.3 -1.1zM1209.8 113.7l-6.7 13.6l-13.3 0.8l-6.7 -12.6l6.6 -13.6l13.4 -0.9zM1209.9 154.8l-6.6 13.6l-13.3 0.7l-6.7 -12.7l6.6 -13.5l13.3 -0.8zM1210.1 196l-6.7 13.5l-13.3 0.6l-6.7 -12.8l6.6 -13.5l13.3 -0.6zM1210.2 237.2l-6.6 13.4l-13.4 0.4l-6.7 -12.8l6.6 -13.4l13.4 -0.5zM1210.3 278.4l-6.6 13.3l-13.3 0.3l-6.7 -12.9l6.6 -13.3l13.3 -0.4zM1210.5 319.6l-6.7 13.3l-13.3 0.1l-6.7 -13l6.6 -13.2l13.3 -0.3zM1210.6 360.8l-6.6 13.2l-13.4 0l-6.7 -13l6.6 -13.2l13.4 -0.1zM1210.8 402l-6.7 13.2l-13.3 -0.1l-6.7 -13.2l6.6 -13.1l13.3 0zM1210.9 443.3l-6.7 13l-13.3 -0.2l-6.7 -13.2l6.6 -13.1l13.3 0.2zM1211 484.5l-6.6 13l-13.4 -0.3l-6.7 -13.3l6.6 -13l13.4 0.3zM1211.2 525.8l-6.7 12.9l-13.3 -0.5l-6.7 -13.4l6.6 -12.9l13.3 0.5zM1211.3 567.1l-6.7 12.8l-13.3 -0.6l-6.7 -13.5l6.6 -12.8l13.4 0.6zM1211.5 608.3l-6.7 12.9l-13.4 -0.8l-6.6 -13.5l6.5 -12.8l13.4 0.7zM1211.6 649.7l-6.7 12.7l-13.3 -0.9l-6.7 -13.6l6.6 -12.7l13.3 0.8zM1211.7 691l-6.6 12.6l-13.4 -1l-6.7 -13.7l6.6 -12.6l13.4 1zM1211.9 732.3l-6.7 12.6l-13.4 -1.2l-6.6 -13.7l6.6 -12.6l13.3 1.1zM1212 773.6l-6.7 12.6l-13.3 -1.4l-6.7 -13.8l6.6 -12.5l13.3 1.3zM1244.4 7.5l-6.7 13.9l-13.6 1.3l-6.8 -12.6l6.7 -13.9l13.6 -1.3zM1244.6 49l-6.8 13.9l-13.6 1l-6.7 -12.6l6.7 -13.8l13.5 -1.2zM1244.7 90.5l-6.8 13.8l-13.5 0.9l-6.8 -12.7l6.7 -13.7l13.5 -1zM1244.8 132l-6.7 13.7l-13.6 0.8l-6.8 -12.7l6.7 -13.7l13.6 -0.9zM1245 173.6l-6.8 13.6l-13.5 0.7l-6.8 -12.9l6.7 -13.6l13.5 -0.7zM1245.1 215.1l-6.7 13.6l-13.6 0.5l-6.8 -12.9l6.7 -13.6l13.6 -0.6zM1245.3 256.7l-6.8 13.5l-13.6 0.3l-6.7 -13l6.7 -13.4l13.5 -0.5zM1245.4 298.2l-6.7 13.4l-13.6 0.3l-6.8 -13.1l6.7 -13.4l13.6 -0.3zM1245.6 339.8l-6.8 13.4l-13.6 0.1l-6.8 -13.2l6.7 -13.3l13.6 -0.2zM1245.7 381.4l-6.8 13.3l-13.5 -0.1l-6.8 -13.2l6.7 -13.2l13.6 -0.1zM1245.9 423l-6.8 13.2l-13.6 -0.2l-6.8 -13.3l6.7 -13.2l13.6 0.1zM1246 464.6l-6.8 13.1l-13.5 -0.3l-6.8 -13.4l6.7 -13.1l13.5 0.3zM1246.2 506.2l-6.8 13.1l-13.6 -0.5l-6.8 -13.4l6.7 -13.1l13.6 0.4zM1246.3 547.8l-6.8 13.1l-13.6 -0.6l-6.8 -13.6l6.7 -12.9l13.6 0.5zM1246.4 589.5l-6.7 12.9l-13.6 -0.7l-6.8 -13.6l6.7 -12.9l13.6 0.6zM1246.6 631.1l-6.8 12.9l-13.6 -0.8l-6.8 -13.7l6.7 -12.9l13.6 0.8zM1246.7 672.8l-6.8 12.8l-13.5 -1l-6.8 -13.7l6.7 -12.8l13.6 0.9zM1246.9 714.5l-6.8 12.8l-13.6 -1.2l-6.8 -13.8l6.7 -12.8l13.6 1.1zM1247 756.2l-6.8 12.7l-13.6 -1.3l-6.8 -13.9l6.8 -12.7l13.5 1.2zM1280.1 25.1l-6.9 14l-13.8 1.2l-6.9 -12.7l6.8 -13.9l13.8 -1.3zM1280.2 67l-6.9 13.9l-13.7 1.1l-7 -12.8l6.9 -13.9l13.8 -1.1zM1280.4 108.9l-6.9 13.8l-13.8 0.9l-6.9 -12.9l6.8 -13.7l13.8 -1zM1280.5 150.8l-6.9 13.7l-13.8 0.8l-6.9 -13l6.9 -13.7l13.8 -0.8zM1280.7 192.7l-6.9 13.7l-13.8 0.6l-6.9 -13l6.8 -13.7l13.8 -0.7zM1280.8 234.6l-6.9 13.6l-13.8 0.5l-6.9 -13.1l6.8 -13.6l13.9 -0.6zM1281 276.5l-6.9 13.6l-13.8 0.3l-6.9 -13.2l6.8 -13.5l13.8 -0.4zM1281.1 318.4l-6.9 13.5l-13.8 0.2l-6.9 -13.2l6.8 -13.5l13.9 -0.3zM1281.3 360.4l-6.9 13.4l-13.8 0.1l-6.9 -13.4l6.8 -13.4l13.8 -0.1zM1281.4 402.3l-6.9 13.4l-13.8 -0.1l-6.9 -13.4l6.8 -13.3l13.9 0zM1281.6 444.3l-6.9 13.3l-13.8 -0.2l-6.9 -13.5l6.8 -13.3l13.8 0.2zM1281.7 486.3l-6.9 13.2l-13.8 -0.4l-6.9 -13.5l6.8 -13.2l13.9 0.3zM1281.9 528.3l-6.9 13.1l-13.8 -0.5l-6.9 -13.6l6.8 -13.1l13.8 0.4zM1282 570.3l-6.9 13.1l-13.8 -0.7l-6.9 -13.7l6.8 -13l13.9 0.5zM1282.2 612.3l-6.9 13l-13.8 -0.8l-7 -13.7l6.9 -13l13.8 0.7zM1282.3 654.3l-6.9 13l-13.8 -1l-6.9 -13.8l6.8 -12.9l13.9 0.8zM1282.5 696.4l-6.9 12.9l-13.8 -1.1l-7 -13.9l6.9 -12.9l13.8 1zM1282.7 738.4l-7 12.9l-13.8 -1.3l-6.9 -14l6.8 -12.8l13.9 1.2zM1282.8 780.5l-6.9 12.8l-13.8 -1.4l-7 -14.1l6.9 -12.7l13.8 1.3zM1316.2 0.8l-7 14.2l-14 1.2l-7 -12.7l6.9 -14.1l14 -1.4zM1316.4 43.1l-7 14l-14.1 1.2l-7 -12.9l6.9 -14l14.1 -1.3zM1316.5 85.3l-7 14l-14 1l-7 -13l6.9 -13.9l14 -1.1zM1316.7 127.5l-7 14l-14 0.8l-7.1 -13l7 -13.9l14 -0.9zM1316.9 169.8l-7.1 13.9l-14 0.7l-7 -13.1l6.9 -13.8l14 -0.8zM1317 212.1l-7 13.8l-14 0.5l-7.1 -13.1l7 -13.8l14 -0.6zM1317.2 254.4l-7 13.7l-14.1 0.4l-7 -13.2l6.9 -13.7l14.1 -0.5zM1317.3 296.7l-7 13.6l-14 0.3l-7.1 -13.3l7 -13.6l14 -0.4zM1317.5 339l-7 13.6l-14.1 0.1l-7 -13.4l6.9 -13.5l14.1 -0.3zM1317.6 381.3l-7 13.5l-14 0l-7.1 -13.5l7 -13.4l14 -0.1zM1317.8 423.7l-7 13.4l-14.1 -0.2l-7 -13.5l6.9 -13.4l14.1 0.1zM1318 466l-7.1 13.4l-14 -0.3l-7.1 -13.7l7 -13.3l14 0.2zM1318.1 508.4l-7 13.3l-14.1 -0.5l-7 -13.7l6.9 -13.3l14.1 0.4zM1318.3 550.7l-7 13.3l-14.1 -0.6l-7.1 -13.8l7 -13.2l14.1 0.5zM1318.4 593.1l-7 13.2l-14.1 -0.7l-7 -13.9l6.9 -13.1l14.1 0.6zM1318.6 635.5l-7 13.2l-14.1 -1l-7.1 -13.9l7 -13.1l14.1 0.9zM1318.8 678l-7.1 13l-14 -1.1l-7.1 -14l7 -13l14 1zM1318.9 720.4l-7 13l-14.1 -1.2l-7 -14.1l6.9 -13l14.1 1.1zM1319.1 762.8l-7.1 12.9l-14 -1.3l-7.1 -14.2l7 -12.8l14 1.2zM1353.2 18.7l-7.1 14.2l-14.3 1.2l-7.2 -12.9l7.1 -14.2l14.3 -1.3zM1353.3 61.3l-7.1 14.2l-14.3 1l-7.1 -13l7 -14.1l14.3 -1.2zM1353.5 103.9l-7.1 14.1l-14.3 0.9l-7.2 -13l7.1 -14.1l14.3 -1zM1353.7 146.5l-7.2 14.1l-14.3 0.8l-7.1 -13.2l7 -14l14.3 -0.9zM1353.8 189.2l-7.1 14l-14.3 0.6l-7.2 -13.2l7.1 -14l14.3 -0.7zM1354 231.9l-7.1 13.9l-14.3 0.4l-7.2 -13.3l7.1 -13.8l14.3 -0.6zM1354.2 274.5l-7.2 13.9l-14.3 0.3l-7.1 -13.4l7 -13.8l14.3 -0.4zM1354.3 317.2l-7.1 13.8l-14.3 0.2l-7.2 -13.5l7.1 -13.7l14.3 -0.3zM1354.5 359.9l-7.1 13.7l-14.3 0.1l-7.2 -13.6l7 -13.6l14.4 -0.2zM1354.7 402.6l-7.2 13.7l-14.3 -0.2l-7.2 -13.6l7.1 -13.6l14.3 0.1zM1354.8 445.4l-7.1 13.5l-14.3 -0.2l-7.2 -13.8l7.1 -13.5l14.3 0.2zM1355 488.1l-7.1 13.5l-14.4 -0.4l-7.1 -13.8l7 -13.4l14.3 0.3zM1355.2 530.9l-7.2 13.4l-14.3 -0.6l-7.2 -13.9l7.1 -13.3l14.3 0.4zM1355.3 573.6l-7.1 13.4l-14.3 -0.7l-7.2 -14l7.1 -13.3l14.3 0.6zM1355.5 616.4l-7.2 13.3l-14.3 -0.9l-7.2 -14l7.1 -13.2l14.3 0.7zM1355.7 659.2l-7.2 13.2l-14.3 -1l-7.2 -14.1l7.1 -13.2l14.3 0.9zM1355.8 702l-7.1 13.1l-14.4 -1.1l-7.1 -14.2l7 -13.1l14.4 1.1zM1356 744.8l-7.2 13.1l-14.3 -1.3l-7.2 -14.3l7.1 -13l14.3 1.2zM1390.6 -6.1l-7.2 14.4l-14.6 1.3l-7.2 -13l7.1 -14.4l14.6 -1.4zM1390.8 36.8l-7.2 14.4l-14.6 1.2l-7.3 -13.1l7.2 -14.3l14.5 -1.3zM1391 79.9l-7.3 14.2l-14.5 1l-7.3 -13.1l7.2 -14.2l14.5 -1.2zM1391.2 122.9l-7.3 14.2l-14.6 0.8l-7.2 -13.2l7.1 -14.2l14.6 -0.9zM1391.3 165.9l-7.2 14.1l-14.6 0.7l-7.3 -13.3l7.2 -14l14.6 -0.9zM1391.5 208.9l-7.3 14.1l-14.5 0.6l-7.3 -13.4l7.2 -14l14.5 -0.7zM1391.7 252l-7.3 14l-14.6 0.4l-7.3 -13.5l7.2 -13.9l14.6 -0.5zM1391.8 295.1l-7.2 13.9l-14.6 0.3l-7.3 -13.6l7.2 -13.9l14.6 -0.3zM1392 338.2l-7.2 13.8l-14.6 0.1l-7.3 -13.6l7.2 -13.8l14.5 -0.2zM1392.2 381.2l-7.3 13.8l-14.5 0l-7.4 -13.7l7.2 -13.8l14.6 0zM1392.4 424.4l-7.3 13.7l-14.6 -0.2l-7.3 -13.8l7.2 -13.7l14.6 0.1zM1392.5 467.5l-7.2 13.6l-14.6 -0.3l-7.3 -13.9l7.2 -13.6l14.6 0.3zM1392.7 510.6l-7.3 13.6l-14.5 -0.5l-7.4 -14l7.2 -13.5l14.6 0.4zM1392.9 553.8l-7.3 13.4l-14.6 -0.6l-7.3 -14l7.2 -13.5l14.6 0.6zM1393.1 596.9l-7.3 13.4l-14.6 -0.8l-7.3 -14.1l7.2 -13.3l14.6 0.7zM1393.2 640.1l-7.3 13.3l-14.5 -0.9l-7.4 -14.2l7.3 -13.3l14.5 0.9zM1393.4 683.3l-7.3 13.3l-14.6 -1.1l-7.3 -14.3l7.2 -13.2l14.6 1zM1393.6 726.5l-7.3 13.2l-14.6 -1.3l-7.3 -14.3l7.2 -13.2l14.6 1.2zM1393.7 769.7l-7.2 13.1l-14.6 -1.4l-7.4 -14.4l7.3 -13.1l14.6 1.3z"/></mask></defs><g><rect x="0" y="0" width="1366" height="45" fill="url(#r0)"/><rect x="0" y="0" width="1366" height="45" fill="url(#r45)" mask="url(#mv0)"/><rect x="0" y="45" width="1366" height="100" fill="url(#r45)"/><rect x="0" y="45" width="1366" height="100" fill="url(#r145)" mask="url(#mv45)"/><rect x="0" y="145" width="1366" height="100" fill="url(#r145)"/><rect x="0" y="145" width="1366" height="100" fill="url(#r245)" mask="url(#mv145)"/><rect x="0" y="245" width="1366" height="130" fill="url(#r245)"/><rect x="0" y="245" width="1366" height="130" fill="url(#r375)" mask="url(#mv245)"/><rect x="0" y="375" width="1366" height="100" fill="url(#r375)"/><rect x="0" y="375" width="1366" height="100" fill="url(#r475)" mask="url(#mv375)"/><rect x="0" y="475" width="1366" height="95" fill="url(#r475)"/><rect x="0" y="475" width="1366" height="95" fill="url(#r570)" mask="url(#mv475)"/><rect x="0" y="570" width="1366" height="95" fill="url(#r570)"/><rect x="0" y="570" width="1366" height="95" fill="url(#r665)" mask="url(#mv570)"/><rect x="0" y="665" width="1366" height="103" fill="url(#r665)"/><rect x="0" y="665" width="1366" height="103" fill="url(#r768)" mask="url(#mv665)"/></g><g mask="url(#im)"><rect x="0" y="0" width="1366" height="45" fill="url(#i0)"/><rect x="0" y="0" width="1366" height="45" fill="url(#i45)" mask="url(#mv0)"/><rect x="0" y="45" width="1366" height="100" fill="url(#i45)"/><rect x="0" y="45" width="1366" height="100" fill="url(#i145)" mask="url(#mv45)"/><rect x="0" y="145" width="1366" height="100" fill="url(#i145)"/><rect x="0" y="145" width="1366" height="100" fill="url(#i245)" mask="url(#mv145)"/><rect x="0" y="245" width="1366" height="130" fill="url(#i245)"/><rect x="0" y="245" width="1366" height="130" fill="url(#i375)" mask="url(#mv245)"/><rect x="0" y="375" width="1366" height="100" fill="url(#i375)"/><rect x="0" y="375" width="1366" height="100" fill="url(#i475)" mask="url(#mv375)"/><rect x="0" y="475" width="1366" height="95" fill="url(#i475)"/><rect x="0" y="475" width="1366" height="95" fill="url(#i570)" mask="url(#mv475)"/><rect x="0" y="570" width="1366" height="95" fill="url(#i570)"/><rect x="0" y="570" width="1366" height="95" fill="url(#i665)" mask="url(#mv570)"/><rect x="0" y="665" width="1366" height="103" fill="url(#i665)"/><rect x="0" y="665" width="1366" height="103" fill="url(#i768)" mask="url(#mv665)"/></g><g mask="url(#lm)" opacity="0.92"><rect x="0" y="0" width="1366" height="45" fill="url(#l0)"/><rect x="0" y="0" width="1366" height="45" fill="url(#l45)" mask="url(#mv0)"/><rect x="0" y="45" width="1366" height="100" fill="url(#l45)"/><rect x="0" y="45" width="1366" height="100" fill="url(#l145)" mask="url(#mv45)"/><rect x="0" y="145" width="1366" height="100" fill="url(#l145)"/><rect x="0" y="145" width="1366" height="100" fill="url(#l245)" mask="url(#mv145)"/><rect x="0" y="245" width="1366" height="130" fill="url(#l245)"/><rect x="0" y="245" width="1366" height="130" fill="url(#l375)" mask="url(#mv245)"/><rect x="0" y="375" width="1366" height="100" fill="url(#l375)"/><rect x="0" y="375" width="1366" height="100" fill="url(#l475)" mask="url(#mv375)"/><rect x="0" y="475" width="1366" height="95" fill="url(#l475)"/><rect x="0" y="475" width="1366" height="95" fill="url(#l570)" mask="url(#mv475)"/><rect x="0" y="570" width="1366" height="95" fill="url(#l570)"/><rect x="0" y="570" width="1366" height="95" fill="url(#l665)" mask="url(#mv570)"/><rect x="0" y="665" width="1366" height="103" fill="url(#l665)"/><rect x="0" y="665" width="1366" height="103" fill="url(#l768)" mask="url(#mv665)"/></g><linearGradient id="vig" x1="0" y1="0" x2="1" y2="0"><stop offset="0" stop-color="#000818" stop-opacity="0.55"/><stop offset="1" stop-color="#000818" stop-opacity="0"/></linearGradient><rect x="0" y="0" width="16" height="768" fill="url(#vig)"/></svg>

<!-- desktop icons -->
<svg class="abs" style="left:62px;top:11px" width="52" height="42" viewBox="0 0 52 42">
  <defs>
    <linearGradient id="fold" x1="0" y1="0" x2="0" y2="1"><stop offset="0" stop-color="#5b92de"/><stop offset="1" stop-color="#a4c8f4"/></linearGradient>
    <linearGradient id="foldb" x1="0" y1="0" x2="0" y2="1"><stop offset="0" stop-color="#b8d0f0"/><stop offset="1" stop-color="#9cbce8"/></linearGradient>
  </defs>
  <path d="M6 3.5 Q6 2 7.5 2 H19 L22 5 H45 Q46.5 5 46.5 6.5 V12 H6 Z" fill="url(#foldb)"/>
  <path d="M2 9.5 H50 L49 37 Q49 38.6 47.5 38.6 H4.5 Q3 38.6 3 37 Z" fill="url(#fold)"/>
  <rect x="2" y="38.3" width="48" height="1.2" fill="#26426a" opacity="0.6"/>
  <linearGradient id="houseg" x1="0" y1="0" x2="0" y2="1"><stop offset="0" stop-color="#dce8fa"/><stop offset="1" stop-color="#fafcff"/></linearGradient><path d="M25.9 15.3 L37.5 22.6 H35 V33.7 H28.9 V27.7 H24.4 V33.7 H16.9 V22.6 H14.3 Z" fill="url(#houseg)"/>
</svg>
<div class="dlabel" style="left:49px;top:59px">Home</div>

<svg class="abs" style="left:70px;top:104px" width="36" height="42" viewBox="0 0 36 42">
  <defs>
    <linearGradient id="can" x1="0" y1="0" x2="1" y2="0">
      <stop offset="0" stop-color="#6a6a6a"/><stop offset="0.08" stop-color="#d8d8d8"/><stop offset="0.2" stop-color="#f4f4f4"/><stop offset="0.3" stop-color="#8c8c8c"/>
      <stop offset="0.4" stop-color="#fafafa"/><stop offset="0.55" stop-color="#e4e4e4"/><stop offset="0.72" stop-color="#a4a4a4"/><stop offset="0.85" stop-color="#ffffff"/><stop offset="1" stop-color="#7c7c7c"/>
    </linearGradient>
    <radialGradient id="canshadow" cx="0.5" cy="0.5" r="0.5"><stop offset="0" stop-color="#fff" stop-opacity="0.75"/><stop offset="1" stop-color="#fff" stop-opacity="0"/></radialGradient>
  </defs>
  <ellipse cx="18" cy="38" rx="17" ry="3.2" fill="url(#canshadow)"/>
  <path d="M4.5 5 V36.5 Q18 39.5 31.5 36.5 V5 Z" fill="url(#can)"/>
  <ellipse cx="18" cy="5" rx="13.5" ry="2.6" fill="#c8c8c8"/>
  <ellipse cx="18" cy="5.2" rx="12.2" ry="1.9" fill="#5a5a5a"/>
  <ellipse cx="18" cy="5.8" rx="11" ry="1.3" fill="#8a8a8a"/>
</svg>
<div class="dlabel" style="left:49px;top:151px">Trash</div>

<!-- menu -->
<div id="menu">
<svg class="frame" width="400" height="541" viewBox="0 0 400 541">
  <path d="M0.5 0.5 H399.5 V531.5 L392 539.5 H0.5 Z" fill="#f3f4f6" stroke="#08a4ff" stroke-width="1"/>
</svg>
</div>
<div id="cats"></div>

<!-- category icons -->
<svg class="abs" style="left:8px;top:194px" width="32" height="32" viewBox="0 0 32 32">
<path d="M4.2 3.8 L4.2 27.5 L28.3 27.5 Z" fill="#ececec" fill-opacity="0.9" stroke="#b8b8b8" stroke-width="0.9"/>
<path d="M7.5 14 L7.5 24.3 L18 24.3 Z" fill="#fbfbfb" stroke="#c4c4c4" stroke-width="0.7"/>
<path d="M18.6 8 L3.8 18.4" stroke="#505050" stroke-width="1.7" stroke-linecap="round"/>
<path d="M18.6 8 L9.8 23" stroke="#9c9c9c" stroke-width="1.3" stroke-linecap="round"/>
<path d="M16.5 9.2 L20.8 4.6 Q22.6 3.6 22.2 5.6 L18.8 9.8 Q17.5 10.8 16.5 9.2 Z" fill="#2a64b8"/>
<path d="M26.2 4.5 L28 5.2 L21.2 27.2 L19.9 26.6 Z" fill="#f2b21e" stroke="#c98a0e" stroke-width="0.4"/>
<path d="M26 3.8 L28.2 4.6 L27.9 5.6 L25.7 4.8 Z" fill="#e2775a"/>
</svg>
<div class="cat" style="top:205px">Accessories</div>

<svg class="abs" style="left:8px;top:224px" width="32" height="32" viewBox="0 0 32 32">
<defs><linearGradient id="gpg" x1="0" y1="0" x2="0" y2="1"><stop offset="0" stop-color="#f8f8f8"/><stop offset="1" stop-color="#cfcfcf"/></linearGradient></defs>
<path d="M8.5 7.2 Q16 5.4 23.5 7.2 Q29 8.6 29.8 17 Q30.4 25.2 27 25.6 Q24.2 25.6 22 21.6 Q16 18.8 10 21.6 Q7.8 25.6 5 25.6 Q1.6 25.2 2.2 17 Q3 8.6 8.5 7.2 Z" fill="url(#gpg)" stroke="#aaaaaa" stroke-width="0.6"/>
<path d="M5 24 Q9.5 17.6 16 17.6 Q22.5 17.6 27 24" fill="none" stroke="#2e2e2e" stroke-width="2.2"/>
<path d="M11.2 7.2 Q16 12 20.8 7.2" fill="#9aa4a8" stroke="#e23c3c" stroke-width="1.4"/>
<circle cx="8.8" cy="12" r="2.9" fill="#5a5a5a" stroke="#888" stroke-width="0.5"/>
<circle cx="21" cy="14.3" r="1.5" fill="#f2a82a"/>
<circle cx="25.1" cy="12.7" r="1.9" fill="#1ec01e"/>
</svg>
<div class="cat" style="top:235px">Games</div>

<svg class="abs" style="left:8px;top:254px" width="32" height="32" viewBox="0 0 32 32">
<rect x="6" y="2.3" width="21" height="7" fill="#d4d4d4" stroke="#aaa" stroke-width="0.5"/>
<path d="M7.5 3.5 H11 V7 H7.5 Z M13 3.5 H16 V6 H13 Z M20 4 H24 V8 H20 Z" fill="#707070"/>
<path d="M2.5 9.8 L23.2 5.2 L25.3 26.8 L6.6 29 Z" fill="#f4f4f4" stroke="#a8a8a8" stroke-width="0.6"/>
<path d="M4.4 11.2 L21.8 7.4 L23.6 25.4 L8 27.2 Z" fill="#8c9a6c"/>
<path d="M6 13.2 L14 9 L18.6 9.6 L15 16 L11.4 19 L7.2 17.6 Z" fill="#e8641e"/>
<path d="M12.5 14.5 L17.5 10.5 L16 17 Z" fill="#c8401a"/>
<circle cx="22.5" cy="20.5" r="7.2" fill="#141414"/>
<circle cx="22.5" cy="20.5" r="5" fill="#1a3868"/>
<circle cx="22.5" cy="20.5" r="3.4" fill="#2a5ca8"/>
<circle cx="22.5" cy="20.5" r="1.5" fill="#0a0a0a"/>
<circle cx="22.5" cy="20.5" r="0.7" fill="#e8f4f8"/>
</svg>
<div class="cat" style="top:265px">Graphics</div>

<svg class="abs" style="left:8px;top:284px" width="32" height="32" viewBox="0 0 32 32">
<defs><radialGradient id="glb" cx="0.55" cy="0.5" r="0.6"><stop offset="0" stop-color="#3c98e8"/><stop offset="0.7" stop-color="#1a58d0"/><stop offset="1" stop-color="#0a36a8"/></radialGradient></defs>
<ellipse cx="16" cy="28" rx="10" ry="1.2" fill="#000" opacity="0.12"/>
<circle cx="16" cy="14.8" r="12.4" fill="url(#glb)"/>
<path d="M6.5 7 Q11 3 17.5 3.6 Q17 6.5 14.5 8.5 Q12 10.5 13.2 13 Q11 15 9.5 14 Q7.5 11 5.2 10.5 Q5.6 8.5 6.5 7 Z" fill="#c0dcf6" opacity="0.9"/>
<path d="M13.6 18.2 Q18 17.5 21.6 20.5 Q20 24 17.8 26.6 Q16.6 25 15.8 22.6 Q13.8 20.6 13.6 18.2 Z" fill="#c0dcf6" opacity="0.9"/>
<path d="M25.6 10.4 Q28.2 12 28.2 15.2 Q26 15.8 25 13.6 Z" fill="#c0dcf6" opacity="0.85"/>
</svg>
<div class="cat" style="top:295px">Internet</div>

<svg class="abs" style="left:8px;top:314px" width="32" height="32" viewBox="0 0 32 32">
<path d="M2.4 6.2 L7 5.4 L7.4 23.8 L3.2 24 Z" fill="#e8901a"/>
<path d="M5.2 8.6 L8.6 8 L8.4 24.6 L5.8 24.4 Z" fill="#cfb8f0"/>
<path d="M8 6.4 L12.6 5.6 L13.2 25.8 L8.8 26 Z" fill="#2a8ae6"/>
<path d="M8.2 6.4 L20.8 3.8 L21 4.6 L12.6 6.4 Z" fill="#7ec4f0"/>
<path d="M11.6 8.8 L15.8 8 L17.2 27.6 L13.4 27.8 Z" fill="#2ec832"/>
<path d="M13 8.8 L22.4 5.6 L23 13.8 L15.5 13.6 Z" fill="#d8ee1a"/>
<path d="M15.8 13.2 L22.6 10.8 L25.4 27 L22.6 28.6 Z" fill="#f6c428"/>
<path d="M15.8 13.2 L17.4 12.8 L24 28.2 L22.6 28.6 Z" fill="#e88a1a"/>
<path d="M25 14.8 Q29.8 14 29.6 22 L29.4 27.2 L25.4 27.6 Z" fill="#f4f4f4" stroke="#d4d4d4" stroke-width="0.5"/>
</svg>
<div class="cat" style="top:325px">Office</div>

<svg class="abs" style="left:8px;top:344px" width="32" height="32" viewBox="0 0 32 32">
<defs><radialGradient id="cdg" cx="0.5" cy="0.45" r="0.6"><stop offset="0" stop-color="#ffffff"/><stop offset="0.45" stop-color="#dff0e8"/><stop offset="0.7" stop-color="#e8dce8"/><stop offset="1" stop-color="#b8b8b8"/></radialGradient></defs>
<circle cx="16" cy="16" r="12.5" fill="url(#cdg)" stroke="#a8a8a8" stroke-width="0.6"/>
<circle cx="15.8" cy="16.5" r="3.6" fill="#d8d8d8" stroke="#9c9c9c" stroke-width="0.6"/>
<circle cx="15.8" cy="16.5" r="1.4" fill="#fafafa"/>
<path d="M9.6 12.6 Q10.5 4.4 18 4.2 Q26.5 4.6 28.2 12.6" fill="none" stroke="#262626" stroke-width="1.5"/>
<path d="M11.4 17.2 Q13 16.6 13.6 18 L16.4 23.8 Q15.6 24.8 14.6 24 Z" fill="#141414"/>
<path d="M25.2 17 Q23.6 16.4 23 17.8 L20.8 23.6 Q21.6 24.6 22.6 23.8 Z" fill="#141414"/>
</svg>
<div class="cat" style="top:355px">Sound &amp; Video</div>

<svg class="abs" style="left:8px;top:374px" width="32" height="32" viewBox="0 0 32 32">
<g fill="#ececec" stroke="#9e9e9e" stroke-width="0.8">
<path d="M11.8 2.6 H14.8 L15.4 5 L17.4 5.8 L19.4 4.4 L21.6 6.6 L20.2 8.6 L21 10.6 L23.4 11.2 V14.2 L21 14.8 L20.2 16.8 L21.6 18.8 L19.4 21 L17.4 19.6 L15.4 20.4 L14.8 22.8 H11.8 L11.2 20.4 L9.2 19.6 L7.2 21 L5 18.8 L6.4 16.8 L5.6 14.8 L3.2 14.2 V11.2 L5.6 10.6 L6.4 8.6 L5 6.6 L7.2 4.4 L9.2 5.8 L11.2 5 Z"/>
<circle cx="13.3" cy="12.7" r="4.3" fill="#fafafa" stroke="#8a8a8a" stroke-width="1"/>
<path d="M22.6 17.6 H24.4 L24.8 19 L26 19.5 L27.2 18.7 L28.5 20 L27.7 21.2 L28.2 22.4 L29.6 22.8 V24.6 L28.2 25 L27.7 26.2 L28.5 27.4 L27.2 28.7 L26 27.9 L24.8 28.4 L24.4 29.8 H22.6 L22.2 28.4 L21 27.9 L19.8 28.7 L18.5 27.4 L19.3 26.2 L18.8 25 L17.4 24.6 V22.8 L18.8 22.4 L19.3 21.2 L18.5 20 L19.8 18.7 L21 19.5 L22.2 19 Z"/>
<circle cx="23.5" cy="23.7" r="2" fill="#fafafa"/>
</g>
</svg>
<div class="cat" style="top:385px">System Tools</div>

<svg class="abs" style="left:8px;top:404px" width="32" height="32" viewBox="0 0 32 32">
<defs><linearGradient id="uag" x1="0" y1="0" x2="0" y2="1"><stop offset="0" stop-color="#4a94dc"/><stop offset="0.5" stop-color="#1e6cc4"/><stop offset="0.52" stop-color="#0a58b4"/><stop offset="1" stop-color="#1a6ad0"/></linearGradient></defs>
<circle cx="16" cy="15.2" r="12.6" fill="url(#uag)" stroke="#0a3c8a" stroke-width="0.7"/>
<circle cx="16" cy="8" r="2" fill="#fff"/>
<path d="M9 10.2 H23 V11.8 H17.9 V25 H16.5 V19 H15.5 V25 H14.1 V11.8 H9 Z" fill="#f6f6f6"/>
</svg>
<div class="cat" style="top:415px">Universal Access</div>

<svg class="abs" style="left:8px;top:434px" width="32" height="32" viewBox="0 0 32 32">
<path d="M8.8 2.6 H23.2 Q24 11 21.8 14.6 Q19.4 17.8 16 17.8 Q12.6 17.8 10.2 14.6 Q8 11 8.8 2.6 Z" fill="#f2f2f2" fill-opacity="0.7" stroke="#b8b8b8" stroke-width="0.5"/>
<defs><radialGradient id="wng" cx="0.5" cy="0.6" r="0.6"><stop offset="0" stop-color="#b82020"/><stop offset="1" stop-color="#4a0a0a"/></radialGradient></defs>
<path d="M9 5 H23 Q23.6 11 21.6 14.3 Q19.3 17.4 16 17.4 Q12.7 17.4 10.4 14.3 Q8.4 11 9 5 Z" fill="url(#wng)"/>
<path d="M9 5 H23 V5.8 H9 Z" fill="#d84848"/>
<path d="M20.5 4 Q21.8 9 20.6 14" fill="none" stroke="#e8e8e8" stroke-width="0.6" opacity="0.7"/>
<rect x="15.4" y="17.4" width="1.2" height="11" fill="#c8c8c8"/>
<ellipse cx="16" cy="28.6" rx="6.4" ry="0.9" fill="#b0b0b0"/>
</svg>
<div class="cat" style="top:445px">Wine</div>

<svg class="abs" style="left:8px;top:464px" width="32" height="32" viewBox="0 0 32 32">
<defs><linearGradient id="scg" x1="0" y1="0" x2="0" y2="1"><stop offset="0" stop-color="#50b8f4"/><stop offset="0.6" stop-color="#2ea4ee"/><stop offset="0.62" stop-color="#52bcf6"/><stop offset="1" stop-color="#1c9cec"/></linearGradient></defs>
<path d="M12.4 8.6 Q12.6 2.4 15.8 2.4 Q19 2.4 19.2 8.6" fill="none" stroke="#8a8a8a" stroke-width="0.8"/>
<rect x="4.4" y="5.8" width="22.3" height="24" fill="url(#scg)"/>
<rect x="4.4" y="5.8" width="22.3" height="1.4" fill="#8aa0b0"/>
<path d="M12 12.4 H19.8 L20.6 14.4 H11.2 Z" fill="#fff"/>
<path d="M10.6 16.8 H18 L10.6 20.6 L9.2 18.6 Z" fill="#fff"/>
<path d="M21 16.8 L22.4 18.6 L21 20.6 H13.6 Z" fill="#fff"/>
<path d="M11.2 22.8 H20.6 L19.8 24.8 H12 Z" fill="#fff"/>
</svg>
<div class="cat" style="top:475px">Software Center</div>

<svg class="abs" style="left:8px;top:494px" width="32" height="32" viewBox="0 0 32 32">
<defs><linearGradient id="hdg" x1="0" y1="0" x2="0" y2="1"><stop offset="0" stop-color="#e4e4e4"/><stop offset="1" stop-color="#b8b8b8"/></linearGradient></defs>
<path d="M5.5 3 H26.5 L28.6 24.5 V27.8 H3.4 V24.5 Z" fill="url(#hdg)" stroke="#8c8c8c" stroke-width="0.6"/>
<path d="M7 5 H25 V22 H7 Z" fill="#d6d6d6" opacity="0.6"/>
<ellipse cx="16" cy="15.2" rx="9.4" ry="7.4" fill="none" stroke="#f4f4f4" stroke-width="0.8"/>
<path d="M17 6.2 Q12 9 9 11" fill="none" stroke="#f4f4f4" stroke-width="0.7"/>
<rect x="14" y="15.5" width="4" height="2" fill="#f0f0f0"/>
<rect x="3.4" y="24.6" width="25.2" height="3.2" fill="#4a4a4a"/>
<rect x="24.6" y="25.6" width="1.4" height="1.2" fill="#5c5"/>
</svg>
<div class="cat" style="top:505px">Places</div>

<!-- avatar -->
<svg class="abs" style="left:301px;top:196px" width="54" height="54" viewBox="0 0 54 54">
  <defs>
    <linearGradient id="skin" x1="0" y1="0" x2="0" y2="1"><stop offset="0" stop-color="#f6e2cc"/><stop offset="1" stop-color="#e8c6a2"/></linearGradient>
    <linearGradient id="hair" x1="0" y1="0" x2="0" y2="1"><stop offset="0" stop-color="#b8a28a"/><stop offset="1" stop-color="#a48c74"/></linearGradient>
    <linearGradient id="shirt" x1="0" y1="0" x2="0" y2="1"><stop offset="0" stop-color="#fbfbfd"/><stop offset="1" stop-color="#e8e8f0"/></linearGradient>
  </defs>
  <path d="M2 2 H52 V50 L50 52 H2 Z" fill="#e3e3e5" stroke="#00a2fa" stroke-width="4"/>
  <path d="M23 26 H33 V35 H23 Z" fill="#e0c4a4"/>
  <path d="M8.5 49.5 Q7.5 37.5 14 35 Q19.5 33 23 32.5 Q28 36 33 32.5 Q36.5 33 42 35 Q48.5 37.5 47.5 49.5 Z" fill="url(#shirt)" stroke="#d4d6e4" stroke-width="0.6"/>
  <path d="M19 18 Q18.6 11 22 9.5 Q28 7 34 9.5 Q37.2 11 37 18 Q36.6 25 33.5 28 Q31 30.6 28 30.6 Q25 30.6 22.5 28 Q19.4 25 19 18 Z" fill="url(#skin)"/>
  <path d="M18.6 18.5 Q17.5 7.5 23 6.2 Q28 4.6 33 6.2 Q38.6 7.5 37.4 18.5 Q36.8 13.5 34.5 12.2 Q31 13.2 28 11.6 Q25 13.2 21.5 12.2 Q19.2 13.5 18.6 18.5 Z" fill="url(#hair)"/>
</svg>

<!-- places list -->
<div class="pl" style="top:274px">Home Folder</div>
<div class="pl" style="top:309px">Documents</div>
<div class="pl" style="top:344px">Pictures</div>
<div class="pl" style="top:379px">Music</div>
<div class="pl" style="top:417px">Videos</div>
<div class="pl" style="top:452px">Recent Items</div>
<div class="pl" style="top:487px">Computer</div>
<div class="pl" style="top:522px">Network</div>
<div class="pl" style="top:557px">Connect To</div>
<div class="pl" style="top:595px">Universal Access</div>
<div class="pl" style="top:630px">System Settings</div>
<div class="pl" style="top:665px">Help</div>

<div id="search"></div>
<svg class="abs" style="left:267px;top:696px" width="126" height="26" viewBox="0 0 126 26">
  <path d="M1.5 1.5 H123.5 V16 L116 23.5 H1.5 Z" fill="#f4f4f4" stroke="#484848" stroke-width="1.2"/>
  <path d="M62.5 1.5 V23.5" stroke="#484848" stroke-width="1.2"/>
  <path d="M28.6 8.6 A6 6 0 1 0 37.4 8.6" fill="none" stroke="#444" stroke-width="2"/>
  <path d="M33 5.5 V12.5" stroke="#444" stroke-width="2"/>
  <path d="M91.5 9 H86 V17 H91.5" fill="none" stroke="#444" stroke-width="2"/>
  <path d="M89 11.5 H95 V8.5 L100 13 L95 17.5 V14.5 H89 Z" fill="#444"/>
</svg>

<!-- taskbar -->
<svg id="taskbar" width="1366" height="40" viewBox="0 0 1366 40">
  <rect x="0" y="0" width="1366" height="40" fill="#bab8b8" fill-opacity="0.46"/>
  <rect x="0" y="39" width="1366" height="1" fill="#3aa0d8" fill-opacity="0.8"/>
  <rect x="0" y="0" width="1366" height="1" fill="#9c9ca6"/>
  <path d="M0 0 H42 L66 40 H0 Z" fill="#f3f3f3"/>
  <path d="M0 0.5 H42 L66 40" fill="none" stroke="#0aa8f6" stroke-width="1.2"/>
  <path d="M1096 0 H1366 V40 H1071 Z" fill="#f3f3f3"/>
  <path d="M1366 0.5 H1096 L1071 40" fill="none" stroke="#0aa8f6" stroke-width="1.2"/>
  <!-- zorin logo -->
  <g fill="#03a9f4" transform="translate(0,-728)">
    <path d="M11.6 735 H29.7 L31.9 739.7 H8.9 Z"/>
    <path d="M6.2 745.1 H24.5 L6.7 754.75 L3 750 Z"/>
    <path d="M34.65 745.1 L37.9 750 L34.9 754.75 H16.3 Z"/>
    <path d="M8.9 760 H31.9 L29.7 764.9 H11.6 Z"/>
  </g>
  <!-- chrome -->
  <defs><radialGradient id="chb" cx="0.45" cy="0.3" r="0.8"><stop offset="0" stop-color="#8ab8ea"/><stop offset="0.6" stop-color="#3a7ccc"/><stop offset="1" stop-color="#2a64b0"/></radialGradient></defs>
  <g transform="translate(96.5,19.9)">
    <circle r="13.3" fill="#48b048"/>
    <path d="M0 0 L-11.9 -6 A13.3 13.3 0 0 1 12 -5.8 Z" fill="#e23a2c"/>
    <path d="M0 0 L12 -5.8 A13.3 13.3 0 0 1 -1 13.25 Z" fill="#fcd018"/>
    <path d="M-11.9 -6 L-3.5 5.4 L5.8 -0.2 L12 -5.8 L0 -6.5 Z" fill="#e23a2c"/>
    <path d="M5.9 -5.8 L12 -5.8 L-1 13.25 L2.8 5.6 Z" fill="#fcd018"/>
    <circle r="6.3" fill="#f4f4f4"/>
    <circle r="5.3" fill="url(#chb)"/>
  </g>
  <!-- file cabinet -->
  <defs>
    <linearGradient id="cabl" x1="0" y1="0" x2="0" y2="1"><stop offset="0" stop-color="#dcdcdc"/><stop offset="0.3" stop-color="#f4f4f4"/><stop offset="1" stop-color="#a8a8a8"/></linearGradient>
    <linearGradient id="cabb" x1="0" y1="0" x2="1" y2="1"><stop offset="0" stop-color="#e8e8e8"/><stop offset="0.5" stop-color="#c4c4c4"/><stop offset="1" stop-color="#b0b0b0"/></linearGradient>
    <linearGradient id="cabf" x1="0" y1="0" x2="0" y2="1"><stop offset="0" stop-color="#2a78d0"/><stop offset="1" stop-color="#9ad4fa"/></linearGradient>
  </defs>
  <ellipse cx="157" cy="33.6" rx="9" ry="1" fill="#b8b8c8" opacity="0.5"/>
  <path d="M146 5.5 Q157 4.2 168 5.5 L168.6 11 H145.4 Z" fill="url(#cabl)"/>
  <rect x="145.2" y="10.9" width="23.8" height="21.6" fill="url(#cabb)"/>
  <rect x="147" y="14" width="20" height="5.6" fill="#3a3040"/>
  <rect x="147.4" y="15.4" width="19.2" height="4" fill="url(#cabf)"/>
  <rect x="145.2" y="19.6" width="23.8" height="1" fill="#f0f0f0" opacity="0.8"/>
  <rect x="154" y="25.3" width="5.2" height="2.5" rx="1" fill="#f6f6f6" stroke="#6a6a6a" stroke-width="0.6"/>
  <!-- speaker -->
  <rect x="208.8" y="7.8" width="16.3" height="24" rx="2.6" fill="#f2f2f2" stroke="#c8c8c8" stroke-width="0.5"/>
  <rect x="211.6" y="12.8" width="10.6" height="11" rx="2.5" fill="#141414"/>
  <circle cx="216.9" cy="18.3" r="4.4" fill="#1a78d8"/>
  <circle cx="216.9" cy="18.3" r="2.6" fill="#2e9af0"/>
  <circle cx="216.9" cy="18.3" r="1.4" fill="#222"/>
  <circle cx="216.7" cy="18" r="0.7" fill="#ddd"/>
  <rect x="219.8" y="25.5" width="1.6" height="3.2" rx="0.8" fill="#dadada"/>
  <!-- tray icons -->
  <g transform="translate(0,-728)">
    <rect x="1107" y="752" width="3" height="5" fill="#555"/>
    <rect x="1111" y="749" width="3" height="8" fill="#555"/>
    <rect x="1115" y="746" width="3" height="11" fill="#bbb"/>
    <rect x="1119" y="743" width="3" height="14" fill="#bbb"/>
    <rect x="1141" y="744.7" width="14" height="10.4" rx="1.2" fill="#d4d4d4" stroke="#2a2a2a" stroke-width="1.6"/>
    <rect x="1155.8" y="748" width="2" height="3.8" rx="0.6" fill="#444"/>
    <path d="M1143 751.4 L1148.6 748.2 L1147.8 750.6 L1153.4 748.8 L1147.3 752.8 L1148 750.4 Z" fill="#222"/>
    <path d="M1175 747 H1178 L1182 744 V756 L1178 753 H1175 Z" fill="#555"/>
    <path d="M1184 747 Q1186 750 1184 753" fill="none" stroke="#444" stroke-width="1.4"/>
    <path d="M1186.5 745 Q1190 750 1186.5 755" fill="none" stroke="#aaa" stroke-width="1.2"/>
    <path d="M1189 743 Q1194 750 1189 757" fill="none" stroke="#aaa" stroke-width="1.2"/>
  </g>
  <defs><linearGradient id="gearg" x1="0" y1="0" x2="0" y2="1"><stop offset="0" stop-color="#151515"/><stop offset="1" stop-color="#6a6a6a"/></linearGradient></defs>
  <g transform="translate(1291.9,21.9)">
    <path d="M-1.85 -5.81 L-1.35 -7.78 L1.35 -7.78 L1.85 -5.81 A6.10 6.10 0 0 1 2.80 -5.42 L4.55 -6.46 L6.46 -4.55 L5.42 -2.80 A6.10 6.10 0 0 1 5.81 -1.85 L7.78 -1.35 L7.78 1.35 L5.81 1.85 A6.10 6.10 0 0 1 5.42 2.80 L6.46 4.55 L4.55 6.46 L2.80 5.42 A6.10 6.10 0 0 1 1.85 5.81 L1.35 7.78 L-1.35 7.78 L-1.85 5.81 A6.10 6.10 0 0 1 -2.80 5.42 L-4.55 6.46 L-6.46 4.55 L-5.42 2.80 A6.10 6.10 0 0 1 -5.81 1.85 L-7.78 1.35 L-7.78 -1.35 L-5.81 -1.85 A6.10 6.10 0 0 1 -5.42 -2.80 L-6.46 -4.55 L-4.55 -6.46 L-2.80 -5.42 A6.10 6.10 0 0 1 -1.85 -5.81 Z M0 -2.9 A2.9 2.9 0 1 0 0 2.9 A2.9 2.9 0 1 0 0 -2.9 Z" fill="url(#gearg)" fill-rule="evenodd"/>
  </g>
</svg>
<div class="tray" style="left:1212px;top:743px;font-size:14.7px">7:25 AM</div>
<div class="tray" style="left:1303px;top:743px;font-size:14.3px">Zorin OS</div>

</body></html>
